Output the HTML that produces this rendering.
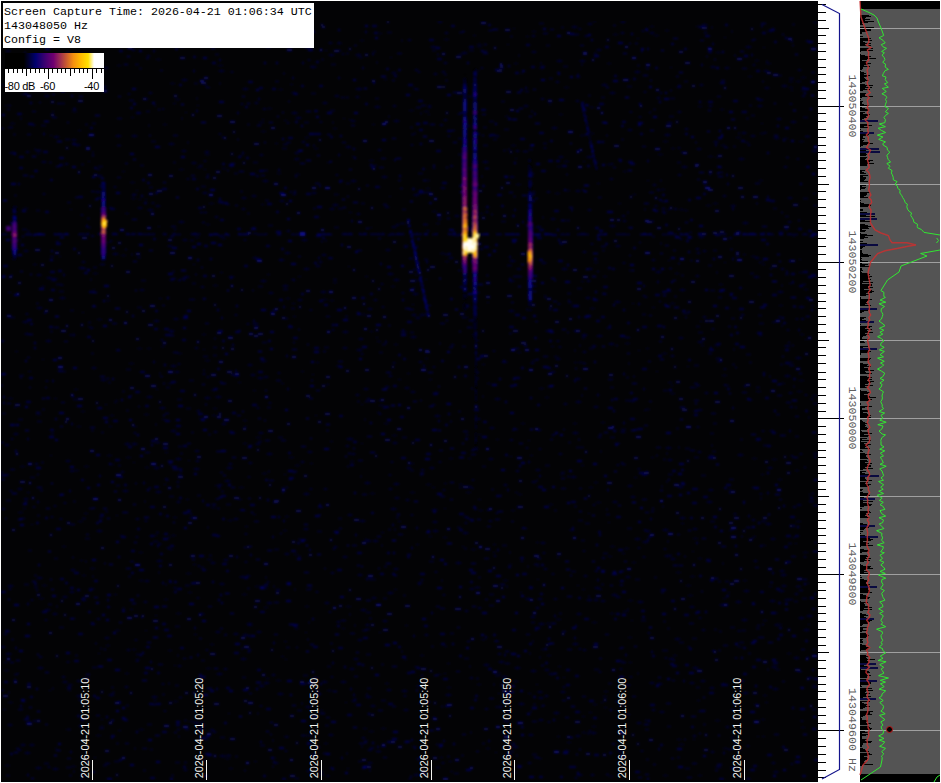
<!DOCTYPE html>
<html><head><meta charset="utf-8"><style>
html,body{margin:0;padding:0;background:#fff;width:941px;height:783px;overflow:hidden}
svg{position:absolute;left:0;top:0;display:block}
.tl{font-family:"Liberation Sans",sans-serif;font-size:10.85px;fill:#f4f4f0}
.fl{font-family:"Liberation Mono",monospace;font-size:11.67px;fill:#606060}
.hd{font-family:"Liberation Mono",monospace;font-size:11.67px;fill:#000}
.cb{font-family:"Liberation Sans",sans-serif;font-size:11px;fill:#000;letter-spacing:-0.3px}
</style></head><body>
<svg width="941" height="783" viewBox="0 0 941 783" shape-rendering="crispEdges">
<defs><linearGradient id="cb" x1="0" x2="1" y1="0" y2="0"><stop offset="0" stop-color="#000000"/><stop offset="0.19" stop-color="#000000"/><stop offset="0.31" stop-color="#00006e"/><stop offset="0.4" stop-color="#3a0070"/><stop offset="0.49" stop-color="#700070"/><stop offset="0.56" stop-color="#a03050"/><stop offset="0.62" stop-color="#c85a30"/><stop offset="0.69" stop-color="#f49010"/><stop offset="0.76" stop-color="#ffb800"/><stop offset="0.84" stop-color="#ffe000"/><stop offset="0.9" stop-color="#ffffff"/><stop offset="1" stop-color="#ffffff"/></linearGradient>
<filter id="bl" x="0" y="0" width="1" height="1"><feGaussianBlur stdDeviation="0.85"/></filter></defs>
<rect x="0" y="0" width="941" height="783" fill="#fff"/>
<rect x="1" y="1" width="817" height="781" fill="#030305"/>
<g filter="url(#bl)"><path fill="#040431" d="M438 21h4v2h-4zm155 0h3v1h-3zm28 0h4v2h-4zm192 1h4v1h-4zm-225 1h4v2h-4zm114 1h5v2h-5zm-471 1h5v1h-5zm49 0h4v2h-4zm-256 1h2v1h-2zm548 0h5v2h-5zm78 0h4v1h-4zm46 0h4v1h-4zm-538 2h5v2h-5zm93 0h5v1h-5zm262 0h2v1h-2zm66 0h2v2h-2zm66 0h3v1h-3zm-153 1h3v1h-3zm-196 1h4v2h-4zm192 0h5v1h-5zm154 0h2v2h-2zm23 0h4v1h-4zm103 0h5v2h-5zm-546 1h2v1h-2zm310 0h4v1h-4zm-490 1h5v2h-5zm84 0h4v1h-4zm19 0h5v1h-5zm167 0h4v1h-4zm133 0h3v2h-3zm176 0h3v2h-3zm29 0h4v2h-4zm-271 1h3v1h-3zm234 1h5v1h-5zm-140 1h3v1h-3zm59 0h3v2h-3zm53 0h3v2h-3zm69 0h5v1h-5zm-128 1h3v1h-3zm-449 1h2v2h-2zm647 0h2v1h-2zm-87 1h2v1h-2zm-229 1h3v2h-3zm36 0h5v1h-5zm-84 1h4v1h-4zm446 0h3v2h-3zm-477 2h3v2h-3zm8 1h5v1h-5zm-233 1h2v2h-2zm373 0h5v1h-5zm30 0h2v1h-2zm-76 2h5v2h-5zm46 0h5v1h-5zm269 0h5v2h-5zm-566 1h4v1h-4zm583 0h2v1h-2zm-631 2h3v2h-3zm465 0h4v2h-4zm-591 1h4v2h-4zm319 0h2v1h-2zm48 1h3v1h-3zm159 0h4v2h-4zm-70 1h5v2h-5zm254 0h5v1h-5zm-374 1h2v2h-2zm5 0h2v1h-2zm-325 1h2v2h-2zm307 0h5v2h-5zm27 0h5v2h-5zm102 0h5v1h-5zm-311 1h3v2h-3zm211 2h5v1h-5zm32 0h2v1h-2zm-234 2h5v1h-5zm152 0h2v2h-2zm249 1h5v2h-5zm23 0h5v2h-5zm175 0h4v1h-4zm-311 2h3v2h-3zm70 1h4v1h-4zm93 0h4v1h-4zm159 0h5v1h-5zm-13 1h2v2h-2zm-636 1h4v1h-4zm101 0h5v1h-5zm93 1h5v2h-5zm400 0h4v2h-4zm-607 1h4v2h-4zm377 0h2v2h-2zm59 0h4v2h-4zm130 0h2v1h-2zm55 0h4v2h-4zm-714 1h5v2h-5zm22 1h3v1h-3zm382 0h3v2h-3zm383 0h3v2h-3zm-579 1h5v2h-5zm257 0h3v1h-3zm288 0h4v2h-4zm-533 1h2v2h-2zm187 0h2v2h-2zm24 0h3v2h-3zm193 0h5v2h-5zm-243 1h4v2h-4zm42 1h3v2h-3zm87 0h2v1h-2zm-444 3h3v2h-3zm499 0h4v2h-4zm172 0h4v1h-4zm53 1h5v1h-5zm-619 2h5v2h-5zm202 0h3v1h-3zm172 2h3v2h-3zm233 0h4v1h-4zm7 0h5v1h-5zm-626 2h5v1h-5zm-169 1h3v1h-3zm289 0h3v1h-3zm312 0h5v2h-5zm98 0h3v2h-3zm82 1h5v2h-5zm-105 1h4v2h-4zm-113 1h5v1h-5zm201 0h4v2h-4zm24 0h4v1h-4zm-546 1h5v2h-5zm113 0h2v2h-2zm2 0h4v2h-4zm55 0h4v1h-4zm392 0h3v2h-3zm-526 1h4v1h-4zm512 1h2v1h-2zm10 0h3v1h-3zm-757 1h2v1h-2zm600 0h2v2h-2zm-495 1h3v2h-3zm143 0h4v2h-4zm318 0h5v2h-5zm50 0h2v2h-2zm5 0h2v2h-2zm-537 1h2v2h-2zm-107 1h5v1h-5zm24 1h4v2h-4zm2 0h2v1h-2zm288 0h4v2h-4zm467 0h3v2h-3zm-446 1h3v2h-3zm301 1h3v2h-3zm-511 1h2v2h-2zm395 0h3v2h-3zm130 0h4v1h-4zm-496 1h5v1h-5zm583 0h5v2h-5zm-182 1h3v2h-3zm-321 2h3v2h-3zm68 0h4v2h-4zm-150 1h3v1h-3zm68 0h2v2h-2zm549 0h2v2h-2zm-241 1h2v1h-2zm36 0h3v1h-3zm-580 1h2v1h-2zm192 0h2v1h-2zm196 0h3v2h-3zm35 0h3v2h-3zm96 0h4v2h-4zm185 0h3v2h-3zm49 0h4v2h-4zm-383 1h5v2h-5zm53 0h3v2h-3zm270 0h4v1h-4zm-108 1h4v1h-4zm-428 1h2v2h-2zm101 0h3v2h-3zm4 0h5v1h-5zm453 1h4v1h-4zm-311 1h4v1h-4zm3 0h2v1h-2zm-360 1h2v1h-2zm20 0h5v1h-5zm352 0h5v1h-5zm206 0h2v2h-2zm48 0h3v2h-3zm-493 1h2v1h-2zm107 0h5v2h-5zm449 0h5v1h-5zm-283 1h2v2h-2zm-30 1h2v1h-2zm45 0h2v2h-2zm86 0h4v1h-4zm-54 2h4v1h-4zm134 0h2v2h-2zm-508 1h3v1h-3zm165 0h5v2h-5zm47 1h2v1h-2zm434 0h4v2h-4zm-515 1h2v1h-2zm87 0h2v1h-2zm95 0h3v2h-3zm-160 1h3v1h-3zm67 0h4v2h-4zm43 0h5v2h-5zm-74 1h2v2h-2zm471 0h5v2h-5zm-532 1h5v1h-5zm28 0h2v2h-2zm380 0h5v2h-5zm-657 1h5v1h-5zm594 0h4v1h-4zm157 0h2v1h-2zm-729 1h3v2h-3zm131 0h4v1h-4zm209 0h3v1h-3zm68 0h3v2h-3zm28 1h2v2h-2zm84 2h5v2h-5zm-219 1h4v1h-4zm352 0h3v2h-3zm-57 1h4v2h-4zm-550 1h3v1h-3zm183 1h5v1h-5zm481 1h4v2h-4zm22 0h3v1h-3zm-545 1h2v2h-2zm257 0h4v2h-4zm115 0h3v1h-3zm169 0h5v1h-5zm-95 1h5v2h-5zm-615 1h2v1h-2zm66 0h5v2h-5zm16 0h5v2h-5zm316 0h2v2h-2zm47 0h4v2h-4zm85 0h4v1h-4zm171 0h4v2h-4zm-697 1h5v2h-5zm251 1h4v1h-4zm431 0h5v1h-5zm38 0h5v2h-5zm9 1h5v1h-5zm-711 1h4v2h-4zm230 2h3v2h-3zm361 0h5v1h-5zm51 0h4v2h-4zm85 0h5v1h-5zm-54 1h4v1h-4zm-576 1h5v2h-5zm106 0h3v1h-3zm-200 1h5v2h-5zm336 0h2v2h-2zm121 0h2v2h-2zm216 0h2v2h-2zm-237 1h5v1h-5zm210 0h5v1h-5zm-375 1h5v2h-5zm198 1h2v2h-2zm134 0h2v2h-2zm-364 1h4v1h-4zm357 0h4v1h-4zm26 0h4v2h-4zm-319 1h3v2h-3zm-196 1h4v2h-4zm117 0h3v2h-3zm217 0h3v2h-3zm61 0h4v1h-4zm235 0h5v2h-5zm-786 1h3v2h-3zm179 0h4v2h-4zm-195 1h4v2h-4zm2 0h4v1h-4zm283 0h4v2h-4zm-258 1h3v1h-3zm168 1h5v1h-5zm55 0h3v2h-3zm398 0h5v1h-5zm-418 1h3v1h-3zm112 1h2v1h-2zm207 0h4v2h-4zm28 0h5v2h-5zm121 0h5v1h-5zm8 1h2v1h-2zm-421 1h4v2h-4zm220 0h2v1h-2zm224 0h5v2h-5zm58 0h2v2h-2zm-503 1h3v1h-3zm-90 1h2v2h-2zm165 0h5v1h-5zm-327 1h4v2h-4zm46 0h2v1h-2zm395 0h5v2h-5zm81 0h5v1h-5zm19 0h2v1h-2zm-391 1h4v2h-4zm135 0h4v1h-4zm-262 1h3v2h-3zm546 0h2v2h-2zm-4 1h4v1h-4zm-235 1h2v2h-2zm78 0h3v2h-3zm-221 1h5v1h-5zm328 0h4v1h-4zm125 0h5v2h-5zm102 0h3v2h-3zm-587 1h5v1h-5zm236 0h2v2h-2zm-211 1h4v1h-4zm-43 1h5v1h-5zm25 0h2v1h-2zm-82 2h3v1h-3zm501 0h4v1h-4zm-545 1h2v2h-2zm199 1h4v1h-4zm-70 1h2v2h-2zm88 0h5v1h-5zm41 0h2v2h-2zm342 0h3v2h-3zm-581 1h5v2h-5zm159 0h3v2h-3zm126 1h5v2h-5zm128 0h4v2h-4zm-323 2h2v2h-2zm423 0h3v2h-3zm-347 2h5v2h-5zm88 0h5v2h-5zm75 0h4v1h-4zm221 0h2v1h-2zm112 0h4v1h-4zm-629 2h5v1h-5zm401 1h2v1h-2zm66 0h3v1h-3zm-137 1h5v2h-5zm16 0h2v1h-2zm40 0h5v1h-5zm137 0h3v2h-3zm-178 1h4v1h-4zm-361 1h2v2h-2zm327 1h4v2h-4zm-15 1h4v1h-4zm156 1h2v2h-2zm75 0h3v2h-3zm4 0h4v1h-4zm-525 1h2v1h-2zm430 0h4v1h-4zm10 0h4v2h-4zm-480 1h4v2h-4zm194 0h2v2h-2zm243 0h2v2h-2zm14 0h3v2h-3zm-344 1h4v2h-4zm109 0h4v2h-4zm106 0h5v2h-5zm-375 1h2v2h-2zm250 0h3v2h-3zm262 0h5v1h-5zm258 0h3v1h-3zm-681 1h3v2h-3zm203 0h4v1h-4zm79 0h5v2h-5zm15 0h4v2h-4zm204 0h3v1h-3zm-381 1h4v2h-4zm471 0h3v2h-3zm-334 1h2v1h-2zm-292 1h5v2h-5zm145 0h4v2h-4zm358 0h2v1h-2zm188 0h4v2h-4zm-657 1h5v1h-5zm8 1h2v1h-2zm6 0h2v1h-2zm135 1h4v2h-4zm-128 2h2v2h-2zm69 0h5v2h-5zm-12 1h5v1h-5zm409 0h3v1h-3zm95 0h5v1h-5zm-452 1h3v1h-3zm72 0h5v2h-5zm-177 1h4v2h-4zm499 0h2v2h-2zm51 0h5v1h-5zm25 0h4v2h-4zm1 0h4v1h-4zm-347 1h4v2h-4zm-247 1h4v2h-4zm-115 1h5v1h-5zm219 0h3v2h-3zm88 0h4v2h-4zm344 0h3v2h-3zm-604 1h2v1h-2zm78 0h5v2h-5zm440 0h3v2h-3zm79 0h3v1h-3zm12 0h5v1h-5zm5 1h4v1h-4zm-252 1h5v1h-5zm54 0h2v2h-2zm-137 1h3v1h-3zm314 0h3v2h-3zm-538 1h4v1h-4zm232 0h3v2h-3zm123 0h3v1h-3zm-399 1h2v2h-2zm23 0h3v2h-3zm351 1h4v2h-4zm167 0h3v2h-3zm-407 1h3v2h-3zm223 2h3v2h-3zm113 0h4v2h-4zm72 2h3v2h-3zm-444 1h5v2h-5zm283 0h4v2h-4zm326 0h3v2h-3zm-45 1h5v2h-5zm-307 1h4v1h-4zm-230 1h4v1h-4zm190 0h3v2h-3zm120 0h3v1h-3zm94 1h5v2h-5zm-452 1h2v1h-2zm234 0h4v2h-4zm70 0h5v1h-5zm74 0h5v2h-5zm-166 1h2v1h-2zm102 1h4v1h-4zm-4 1h3v2h-3zm-181 1h3v2h-3zm140 0h2v2h-2zm352 1h4v2h-4zm-16 1h2v1h-2zm-554 2h3v2h-3zm179 0h2v2h-2zm65 0h5v2h-5zm2 0h5v2h-5zm-423 1h3v1h-3zm59 0h3v2h-3zm128 0h5v2h-5zm1 0h5v1h-5zm455 1h4v2h-4zm14 0h3v2h-3zm10 0h5v2h-5zm94 0h2v1h-2zm-598 1h4v1h-4zm492 0h5v2h-5zm42 0h3v2h-3zm-508 1h5v1h-5zm459 0h2v2h-2zm-497 1h4v2h-4zm61 0h2v2h-2zm58 0h5v2h-5zm-286 1h5v1h-5zm94 0h2v2h-2zm-54 1h3v2h-3zm51 1h3v1h-3zm453 1h3v2h-3zm31 0h2v2h-2zm-118 1h3v1h-3zm-305 1h4v2h-4zm236 0h4v2h-4zm212 0h4v2h-4zm-212 2h3v1h-3zm76 1h3v2h-3zm216 0h3v2h-3zm-310 1h4v2h-4zm86 0h5v2h-5zm-448 1h4v2h-4zm679 0h3v2h-3zm-120 1h3v2h-3zm-298 1h5v2h-5zm412 0h3v2h-3zm-584 1h5v2h-5zm327 0h5v1h-5zm-118 1h4v2h-4zm421 0h3v1h-3zm-622 1h5v1h-5zm-62 1h2v1h-2zm692 0h5v1h-5zm-498 1h5v2h-5zm75 0h4v2h-4zm121 0h4v2h-4zm306 0h4v2h-4zm-499 1h5v1h-5zm23 1h5v2h-5zm373 0h3v2h-3zm147 0h2v1h-2zm-289 1h5v2h-5zm158 0h2v1h-2zm-586 1h3v2h-3zm237 0h3v2h-3zm126 0h4v1h-4zm317 0h2v1h-2zm-220 1h4v2h-4zm52 0h4v1h-4zm29 0h2v2h-2zm101 0h2v1h-2zm-691 2h4v1h-4zm160 0h2v1h-2zm569 0h3v1h-3zm-446 1h4v2h-4zm32 1h2v1h-2zm-269 1h5v2h-5zm225 1h5v2h-5zm213 0h4v2h-4zm45 0h5v2h-5zm25 0h5v2h-5zm194 0h3v2h-3zm-364 3h3v1h-3zm239 0h5v2h-5zm-436 1h3v1h-3zm579 0h4v1h-4zm-706 1h5v1h-5zm295 0h5v2h-5zm287 0h4v1h-4zm-638 1h4v2h-4zm230 0h3v1h-3zm-265 1h4v2h-4zm694 0h3v2h-3zm-512 1h5v2h-5zm45 0h5v2h-5zm69 0h3v1h-3zm67 0h3v1h-3zm238 0h4v1h-4zm151 0h5v2h-5zm-707 1h5v2h-5zm5 1h5v2h-5zm118 1h4v2h-4zm9 0h2v1h-2zm4 0h2v2h-2zm108 0h3v1h-3zm103 0h5v2h-5zm31 0h2v1h-2zm-164 1h5v2h-5zm248 0h5v2h-5zm78 0h3v2h-3zm-6 1h3v1h-3zm-248 1h4v1h-4zm48 1h2v2h-2zm408 0h4v1h-4zm1 0h2v1h-2zm-729 1h2v2h-2zm658 0h4v1h-4zm-506 1h5v1h-5zm70 0h5v2h-5zm248 0h5v2h-5zm-490 1h4v1h-4zm160 0h3v2h-3zm190 0h4v1h-4zm22 1h2v1h-2zm-320 2h2v1h-2zm47 0h4v2h-4zm540 0h5v2h-5zm124 0h4v1h-4zm-138 1h5v2h-5zm-345 1h5v2h-5zm457 0h5v2h-5zm-770 1h3v1h-3zm261 0h4v2h-4zm133 0h2v2h-2zm11 1h5v2h-5zm0 0h4v1h-4zm190 1h4v1h-4zm155 0h3v1h-3zm-214 1h2v1h-2zm99 0h2v2h-2zm2 1h2v2h-2zm-585 1h5v2h-5zm526 0h4v2h-4zm-427 1h3v1h-3zm127 0h4v1h-4zm12 1h4v2h-4zm24 0h5v1h-5zm52 0h3v2h-3zm-268 1h4v1h-4zm224 0h4v1h-4zm200 0h2v2h-2zm85 1h5v2h-5zm-128 1h2v1h-2zm-195 1h3v1h-3zm266 0h2v2h-2zm74 0h2v1h-2zm38 0h5v1h-5zm-258 1h2v1h-2zm160 1h4v2h-4zm207 0h4v1h-4zm32 0h3v1h-3zm-429 1h2v2h-2zm417 0h5v2h-5zm-762 1h5v2h-5zm615 0h3v1h-3zm-284 1h4v2h-4zm222 0h5v1h-5zm-280 1h2v2h-2zm199 1h5v2h-5zm-238 1h2v2h-2zm-227 1h2v2h-2zm38 0h2v1h-2zm-56 1h2v2h-2zm209 1h2v2h-2zm127 0h4v1h-4zm50 0h4v2h-4zm8 0h4v2h-4zm4 0h4v1h-4zm317 0h3v2h-3zm-448 2h3v1h-3zm410 0h3v2h-3zm76 0h2v2h-2zm-363 1h4v2h-4zm47 0h5v1h-5zm-289 1h4v2h-4zm622 0h2v2h-2zm5 0h3v2h-3zm-704 1h5v1h-5zm57 1h5v2h-5zm-131 1h5v2h-5zm677 0h2v1h-2zm74 0h2v1h-2zm-2 1h3v1h-3zm-525 1h2v2h-2zm6 0h5v2h-5zm-165 3h2v1h-2zm168 0h3v1h-3zm-166 1h3v2h-3zm517 0h4v2h-4zm105 1h2v2h-2zm-547 1h4v1h-4zm167 0h2v2h-2zm70 0h2v2h-2zm147 0h2v2h-2zm238 0h2v2h-2zm-618 1h5v2h-5zm377 0h4v2h-4zm28 0h2v2h-2zm-404 1h3v2h-3zm173 0h5v2h-5zm27 0h3v1h-3zm31 0h5v2h-5zm-181 1h2v2h-2zm-195 1h4v2h-4zm45 1h2v2h-2zm132 0h4v1h-4zm270 0h3v1h-3zm110 0h5v2h-5zm177 0h3v2h-3zm41 0h4v1h-4zm-203 1h5v2h-5zm-369 1h4v1h-4zm183 0h5v2h-5zm171 0h4v1h-4zm-206 1h2v1h-2zm303 0h4v2h-4zm-320 1h4v2h-4zm223 0h3v1h-3zm-421 1h2v2h-2zm644 0h2v1h-2zm-759 1h5v2h-5zm431 0h2v1h-2zm80 0h2v2h-2zm-180 1h4v1h-4zm321 0h5v2h-5zm-89 2h5v2h-5zm16 0h5v1h-5zm-231 1h4v1h-4zm57 0h3v2h-3zm264 0h5v2h-5zm-123 1h4v2h-4zm109 0h3v1h-3zm84 0h5v2h-5zm-624 1h4v1h-4zm390 0h3v1h-3zm8 0h2v2h-2zm-364 1h3v2h-3zm148 0h4v2h-4zm-206 1h5v1h-5zm10 0h4v1h-4zm499 0h3v1h-3zm-529 1h3v2h-3zm86 0h2v1h-2zm154 0h5v2h-5zm136 1h2v2h-2zm145 0h2v1h-2zm-623 1h3v1h-3zm568 0h3v2h-3zm-66 1h4v1h-4zm-340 1h5v1h-5zm184 0h2v2h-2zm301 0h5v1h-5zm9 2h3v2h-3zm-117 1h4v1h-4zm242 1h5v2h-5zm-371 1h3v1h-3zm131 0h4v2h-4zm-514 1h2v1h-2zm163 1h5v1h-5zm56 0h5v2h-5zm271 0h5v1h-5zm-113 1h3v2h-3zm83 0h5v2h-5zm-186 1h3v1h-3zm77 0h2v2h-2zm138 0h3v2h-3zm43 0h3v1h-3zm4 0h5v1h-5zm211 0h4v1h-4zm-660 1h5v1h-5zm49 0h2v2h-2zm70 1h4v2h-4zm234 0h3v1h-3zm-311 1h5v2h-5zm166 0h4v2h-4zm96 1h2v2h-2zm254 0h2v1h-2zm-595 1h4v2h-4zm632 1h2v2h-2zm-301 1h3v2h-3zm-395 2h3v1h-3zm147 0h4v2h-4zm126 0h3v1h-3zm250 0h4v2h-4zm105 0h2v1h-2zm-378 1h2v2h-2zm485 0h2v2h-2zm-560 1h2v2h-2zm204 0h3v1h-3zm-156 1h4v2h-4zm61 0h2v1h-2zm-78 1h5v2h-5zm155 0h3v2h-3zm333 0h5v1h-5zm63 0h5v2h-5zm-578 1h2v2h-2zm57 0h4v2h-4zm-6 1h5v2h-5zm317 1h5v2h-5zm-474 1h5v2h-5zm297 0h3v1h-3zm31 0h3v1h-3zm-383 1h2v2h-2zm753 0h5v1h-5zm-579 1h2v2h-2zm18 1h3v1h-3zm430 0h4v1h-4zm-500 1h5v1h-5zm113 0h3v1h-3zm206 0h4v1h-4zm293 0h5v1h-5zm-454 1h3v1h-3zm398 0h2v2h-2zm-53 1h2v1h-2zm-286 1h4v2h-4zm20 1h4v2h-4zm287 0h5v1h-5zm-328 1h4v2h-4zm175 0h5v1h-5zm-465 1h4v1h-4zm82 0h2v1h-2zm56 0h4v2h-4zm41 1h3v1h-3zm158 1h4v2h-4zm345 0h5v1h-5zm41 0h5v1h-5zm-363 1h5v1h-5zm271 0h3v2h-3zm84 0h3v2h-3zm-119 1h5v1h-5zm-314 1h3v2h-3zm449 0h2v2h-2zm-675 1h2v1h-2zm682 0h5v1h-5zm-665 1h5v2h-5zm69 0h5v2h-5zm-11 1h5v2h-5zm340 0h4v1h-4zm-537 1h5v1h-5zm46 0h3v1h-3zm313 0h3v2h-3zm128 0h5v2h-5zm316 0h2v2h-2zm-62 1h3v2h-3zm-634 1h3v1h-3zm263 0h4v1h-4zm252 0h5v2h-5zm-54 1h5v2h-5zm-462 1h3v1h-3zm155 0h2v2h-2zm295 1h3v2h-3zm-459 1h2v1h-2zm256 0h2v1h-2zm71 0h3v2h-3zm-53 1h5v1h-5zm215 1h4v2h-4zm196 0h3v2h-3zm-776 1h2v1h-2zm146 0h5v2h-5zm97 0h2v2h-2zm126 0h2v2h-2zm-170 1h4v1h-4zm432 1h5v1h-5zm53 0h4v2h-4zm-501 1h3v2h-3zm447 0h2v1h-2zm-563 1h4v1h-4zm296 1h3v1h-3zm2 1h2v2h-2zm-343 1h5v1h-5zm108 0h5v1h-5zm-34 1h4v1h-4zm102 0h4v1h-4zm103 0h2v1h-2zm120 0h5v2h-5zm-236 3h5v1h-5zm279 0h2v2h-2zm-316 1h4v1h-4zm81 1h4v1h-4zm358 2h4v1h-4zm-379 1h4v2h-4zm162 0h5v1h-5zm137 0h4v1h-4zm52 0h4v1h-4zm-496 3h4v1h-4zm32 0h3v1h-3zm24 0h4v1h-4zm111 0h3v1h-3zm453 0h2v2h-2zm-207 1h4v2h-4zm47 2h4v2h-4zm97 0h3v2h-3zm-463 1h5v2h-5zm341 0h2v1h-2zm250 0h2v2h-2zm8 0h4v2h-4zm-556 1h3v2h-3zm407 0h4v2h-4zm-487 1h2v2h-2zm125 0h4v2h-4zm314 0h5v2h-5zm93 0h5v1h-5zm-652 1h4v2h-4zm452 1h2v2h-2zm13 0h2v1h-2zm73 0h3v2h-3zm-160 1h5v1h-5zm392 0h2v1h-2zm-186 1h3v2h-3zm-342 1h5v1h-5zm-245 1h2v2h-2zm336 0h5v2h-5zm3 0h3v2h-3zm146 1h3v1h-3zm14 0h3v2h-3zm246 0h4v2h-4zm-228 1h2v1h-2zm-198 1h3v1h-3zm63 1h4v2h-4zm-268 1h5v2h-5zm7 0h5v2h-5zm111 0h4v1h-4zm13 0h4v2h-4zm105 0h2v1h-2zm-356 1h4v2h-4zm341 1h3v2h-3zm-97 1h2v2h-2zm277 1h2v2h-2zm140 0h5v2h-5zm-193 1h5v2h-5zm66 0h2v2h-2zm-344 2h4v2h-4zm113 1h4v2h-4zm390 0h3v2h-3zm-533 1h3v1h-3zm102 1h5v2h-5zm85 0h3v2h-3zm207 0h3v2h-3zm241 0h2v2h-2zm-62 1h5v2h-5zm-688 1h2v1h-2zm57 0h5v1h-5zm423 0h3v1h-3zm179 0h5v2h-5zm82 0h2v2h-2zm-281 1h2v1h-2zm-384 1h5v1h-5zm163 0h5v1h-5zm362 0h3v1h-3zm-475 1h5v2h-5zm273 0h4v1h-4zm19 0h3v1h-3zm21 0h4v2h-4zm263 0h5v1h-5zm-84 1h4v2h-4zm104 0h5v1h-5zm-706 1h4v2h-4zm122 0h2v1h-2zm8 0h3v2h-3zm105 1h3v2h-3zm49 0h4v1h-4zm41 0h2v2h-2zm48 0h2v2h-2zm-306 1h2v1h-2zm116 0h3v2h-3zm372 0h2v2h-2zm-586 1h3v2h-3zm134 0h3v2h-3zm60 0h3v2h-3zm81 0h3v1h-3zm100 0h4v1h-4zm-299 1h3v1h-3zm506 0h2v2h-2zm-322 1h5v1h-5zm286 0h3v1h-3zm-561 1h5v1h-5zm64 0h5v1h-5zm61 1h4v1h-4zm9 0h5v2h-5zm73 0h5v2h-5zm180 0h4v2h-4zm23 0h4v2h-4zm338 0h4v2h-4zm-590 1h4v2h-4zm16 0h5v2h-5zm444 0h2v2h-2zm-217 1h3v2h-3zm115 0h4v2h-4zm-466 1h4v2h-4zm4 0h5v1h-5zm442 0h3v2h-3zm279 0h4v1h-4zm-674 1h3v2h-3zm141 2h5v1h-5zm31 0h2v1h-2zm-289 1h5v2h-5zm280 0h2v1h-2zm105 0h2v2h-2zm171 0h4v1h-4zm82 0h5v2h-5zm119 0h3v1h-3zm-341 1h3v1h-3zm-172 1h2v2h-2zm323 0h5v2h-5zm1 0h4v2h-4zm62 1h3v1h-3zm-469 1h3v2h-3zm307 1h2v2h-2zm306 0h4v1h-4zm-612 1h3v1h-3zm59 0h5v2h-5zm-48 1h2v2h-2zm355 0h4v2h-4zm-167 1h5v2h-5zm229 0h4v1h-4zm-200 1h5v2h-5zm50 0h3v1h-3zm-280 1h2v1h-2zm55 0h3v2h-3zm207 0h5v1h-5zm33 0h4v1h-4zm45 0h3v2h-3zm-289 1h3v1h-3zm413 0h4v2h-4zm-161 1h5v2h-5zm211 0h5v2h-5zm-529 1h2v2h-2zm90 0h5v1h-5zm43 0h3v1h-3zm150 0h3v1h-3zm157 0h4v1h-4zm-571 1h4v2h-4zm200 0h3v1h-3zm92 0h2v2h-2zm14 0h3v2h-3zm65 0h3v2h-3zm54 1h2v2h-2zm266 0h4v2h-4zm19 0h3v1h-3zm-718 1h2v2h-2zm113 0h5v2h-5zm33 1h5v2h-5zm-129 1h3v1h-3zm383 0h5v1h-5zm56 0h5v1h-5zm49 0h3v1h-3zm-211 1h5v2h-5zm66 0h5v1h-5zm390 0h2v2h-2zm-242 1h4v1h-4zm291 0h2v1h-2zm-751 1h5v1h-5zm573 1h4v2h-4zm-236 1h4v2h-4zm-371 1h4v2h-4zm192 0h3v2h-3zm-30 1h3v1h-3zm52 0h4v1h-4zm168 0h3v2h-3zm72 0h3v1h-3zm-453 2h2v2h-2zm152 0h3v2h-3zm436 0h4v2h-4zm94 0h5v2h-5zm103 0h2v1h-2zm-746 1h2v2h-2zm532 0h5v1h-5zm-270 2h2v2h-2zm223 0h4v1h-4zm44 0h2v2h-2zm204 0h4v2h-4zm-743 1h2v2h-2zm-21 1h2v2h-2zm286 0h4v2h-4zm474 0h3v2h-3zm-700 1h2v2h-2zm118 0h5v1h-5zm429 0h3v2h-3zm-638 1h3v2h-3zm21 0h3v1h-3zm368 0h5v2h-5zm53 0h2v1h-2zm30 0h3v2h-3zm-234 1h5v2h-5zm192 0h5v2h-5zm55 0h2v2h-2zm-8 1h4v1h-4zm32 0h4v1h-4zm-324 1h3v2h-3zm-169 1h5v1h-5zm104 0h4v1h-4zm374 0h2v2h-2zm-412 1h4v1h-4zm106 0h2v2h-2zm398 0h2v1h-2zm146 0h2v2h-2zm-481 1h3v1h-3zm66 0h2v1h-2zm29 0h4v2h-4zm63 0h2v2h-2zm-295 1h2v1h-2zm-65 1h2v2h-2zm234 0h4v1h-4zm179 0h4v2h-4zm-291 1h4v1h-4zm17 0h3v2h-3zm490 0h5v2h-5zm-620 1h2v2h-2zm76 0h3v2h-3zm98 0h4v2h-4zm518 1h3v2h-3zm-607 1h2v2h-2zm83 0h5v1h-5zm132 0h5v2h-5zm129 0h3v2h-3zm-411 1h5v1h-5zm320 0h3v1h-3zm35 0h4v2h-4zm38 0h2v1h-2zm325 0h5v1h-5zm-331 1h2v2h-2zm143 0h2v1h-2zm73 1h3v1h-3zm85 0h5v2h-5zm-735 1h2v1h-2zm214 2h3v1h-3zm277 1h3v1h-3zm-218 1h4v2h-4zm389 0h4v2h-4zm-123 1h4v2h-4zm74 0h2v2h-2zm19 0h5v2h-5zm-566 1h5v2h-5zm186 0h4v1h-4zm150 0h5v2h-5zm212 0h5v2h-5zm84 0h4v1h-4zm-348 2h3v1h-3zm82 0h5v2h-5zm-218 1h2v2h-2zm-125 2h3v1h-3zm32 0h5v1h-5zm19 0h5v1h-5zm-35 1h2v2h-2zm293 0h3v1h-3zm219 0h3v2h-3zm105 0h3v1h-3zm-310 1h4v1h-4zm192 1h5v2h-5zm58 0h5v1h-5zm78 0h4v2h-4zm-407 1h4v1h-4zm2 1h5v2h-5zm7 0h5v2h-5zm270 1h5v2h-5zm-107 1h3v1h-3zm5 0h4v2h-4zm-383 1h3v2h-3zm637 0h2v1h-2zm-379 1h3v1h-3zm77 0h3v1h-3zm269 1h4v1h-4zm-700 1h4v1h-4zm272 0h3v2h-3zm128 0h2v1h-2zm148 0h5v1h-5zm-443 1h3v2h-3zm471 0h2v2h-2zm-305 1h2v2h-2zm291 0h5v1h-5zm40 0h2v2h-2zm-495 1h4v1h-4zm302 0h5v1h-5zm112 1h2v2h-2zm109 1h2v1h-2zm-553 1h4v1h-4zm354 0h2v1h-2zm50 0h2v2h-2zm260 0h5v1h-5zm-518 1h4v2h-4zm337 0h3v1h-3zm-328 1h4v1h-4zm200 1h2v2h-2zm171 0h5v2h-5zm-322 1h4v2h-4zm265 0h4v1h-4zm35 0h2v2h-2zm161 0h2v2h-2zm-247 1h2v1h-2zm45 0h3v2h-3zm69 1h4v2h-4zm27 0h4v1h-4zm-491 1h5v1h-5zm17 0h4v2h-4zm-144 1h3v1h-3zm77 0h5v2h-5zm364 0h2v2h-2zm233 0h3v2h-3zm-509 1h2v2h-2zm-34 1h4v2h-4zm245 0h5v2h-5zm176 0h4v1h-4zm-439 2h3v1h-3zm316 0h3v1h-3zm-311 1h2v2h-2zm339 1h2v1h-2zm-447 2h5v1h-5zm304 0h4v2h-4zm150 0h3v2h-3zm-473 1h4v2h-4zm524 1h3v2h-3zm27 0h2v2h-2zm158 0h4v2h-4zm-345 1h2v2h-2zm-104 1h3v2h-3zm345 0h5v1h-5zm-490 1h5v1h-5zm337 0h4v1h-4zm29 0h2v2h-2zm-194 1h4v2h-4zm423 0h5v2h-5zm-699 1h4v1h-4zm164 0h4v2h-4zm338 0h3v2h-3zm-344 1h5v2h-5zm386 0h4v2h-4zm64 0h5v1h-5zm-653 1h5v2h-5zm332 1h2v2h-2zm428 0h5v2h-5zm-376 1h2v2h-2zm116 0h2v1h-2zm-398 1h5v1h-5zm6 0h4v2h-4zm358 0h5v1h-5zm208 0h2v2h-2zm32 0h4v1h-4zm-476 1h2v2h-2zm-75 1h4v1h-4zm226 0h4v2h-4zm-198 1h4v2h-4zm587 0h2v1h-2zm-187 1h3v2h-3zm-612 1h5v2h-5zm34 0h5v1h-5zm535 0h2v1h-2zm109 0h5v1h-5zm96 0h4v2h-4zm-527 1h4v1h-4zm274 0h3v1h-3zm240 0h3v1h-3zm-595 1h2v2h-2zm88 0h5v2h-5zm333 0h5v2h-5zm-586 1h2v2h-2zm80 0h5v2h-5zm221 0h2v1h-2zm160 0h4v2h-4zm-194 1h4v2h-4zm118 0h3v1h-3zm188 0h3v1h-3zm17 0h3v1h-3zm145 1h5v2h-5zm35 0h5v2h-5zm-709 1h4v2h-4zm246 0h2v2h-2zm-128 1h4v1h-4zm200 0h5v2h-5zm132 0h2v1h-2zm208 0h2v1h-2zm67 1h3v2h-3zm-681 1h3v1h-3zm128 0h5v1h-5zm201 0h2v2h-2zm169 0h5v2h-5zm76 1h5v1h-5zm-625 1h4v2h-4zm553 0h4v2h-4zm-534 1h3v2h-3zm115 0h2v2h-2zm175 0h4v2h-4zm-333 1h5v1h-5zm487 0h5v2h-5zm12 0h4v2h-4zm16 0h3v2h-3zm169 0h3v1h-3zm-692 1h2v2h-2zm51 0h4v2h-4zm82 0h4v1h-4zm423 0h5v2h-5zm7 0h4v2h-4zm191 0h4v2h-4zm-184 1h4v2h-4zm27 0h5v1h-5zm142 0h5v2h-5zm-626 1h3v2h-3zm494 0h5v2h-5zm98 0h5v2h-5zm-469 1h5v2h-5zm58 0h4v2h-4zm427 0h2v2h-2zm-32 2h5v2h-5zm-415 2h4v1h-4zm41 0h5v1h-5zm344 0h4v2h-4zm-426 1h4v1h-4zm214 0h3v2h-3zm58 0h3v2h-3zm276 1h3v2h-3zm-767 1h5v2h-5zm85 0h3v1h-3zm231 0h5v2h-5zm104 1h3v2h-3zm-136 1h2v2h-2zm294 0h5v1h-5zm151 1h3v2h-3zm-721 1h4v2h-4zm123 0h5v1h-5zm23 0h5v2h-5zm378 0h4v2h-4zm33 0h4v1h-4zm-455 2h2v1h-2zm652 0h5v2h-5zm-276 1h4v2h-4zm168 1h2v2h-2zm100 0h5v2h-5zm-702 1h3v2h-3zm-52 1h2v2h-2zm26 0h2v1h-2zm485 0h5v1h-5zm186 0h5v2h-5zm-359 1h4v2h-4zm248 0h2v1h-2zm132 0h4v1h-4zm-426 1h3v2h-3zm-246 1h2v2h-2zm501 0h5v1h-5zm-345 1h5v2h-5zm292 0h5v2h-5zm7 0h4v1h-4zm-180 1h3v2h-3zm409 0h4v2h-4zm4 0h3v1h-3zm29 0h2v1h-2zm-560 1h4v1h-4zm157 0h3v1h-3zm-111 3h5v1h-5zm48 0h3v1h-3zm193 1h2v2h-2zm167 0h3v2h-3zm102 0h5v2h-5zm-689 1h5v1h-5zm30 0h2v1h-2zm593 0h2v2h-2zm-522 1h4v2h-4zm41 0h4v2h-4zm48 1h2v1h-2zm74 0h2v1h-2zm269 0h2v2h-2zm-644 1h3v2h-3zm230 0h4v2h-4zm-40 1h3v1h-3zm49 0h5v2h-5zm182 0h3v2h-3zm-201 1h2v1h-2zm24 0h5v2h-5zm-143 2h4v2h-4zm523 0h4v1h-4zm47 1h5v2h-5zm-540 1h2v2h-2zm223 0h4v2h-4zm123 0h5v1h-5zm14 1h3v2h-3zm-211 1h3v1h-3zm289 2h5v2h-5zm-363 1h4v1h-4zm-104 1h4v1h-4zm-105 1h4v2h-4zm443 0h3v1h-3zm244 0h2v2h-2zm49 0h5v1h-5zm-158 2h2v2h-2zm-452 1h3v2h-3zm5 0h4v1h-4zm74 0h2v2h-2zm42 0h3v2h-3zm293 0h4v1h-4zm42 0h3v2h-3zm-415 1h4v1h-4zm494 0h4v1h-4zm50 0h3v2h-3zm-464 1h2v2h-2zm257 0h5v1h-5zm-499 2h5v2h-5zm92 0h2v1h-2zm400 0h3v2h-3zm289 0h4v1h-4zm-367 2h4v1h-4zm127 0h4v1h-4zm126 0h4v1h-4zm-634 1h3v2h-3zm242 0h3v1h-3zm384 1h2v2h-2zm70 0h2v2h-2zm59 0h5v2h-5zm-609 1h2v1h-2zm56 0h5v2h-5zm113 0h4v2h-4zm315 0h5v2h-5zm-533 1h3v2h-3zm149 0h2v1h-2zm119 0h3v1h-3zm215 1h4v1h-4zm-552 1h2v2h-2zm69 0h2v1h-2zm363 0h5v2h-5zm-495 1h3v1h-3zm625 0h3v1h-3zm-182 1h3v1h-3zm37 1h5v2h-5zm-310 1h2v1h-2zm4 0h3v2h-3zm237 1h2v2h-2zm143 0h3v1h-3zm214 0h5v2h-5zm-734 1h5v2h-5zm57 0h2v1h-2zm420 0h5v2h-5zm178 0h5v2h-5zm-487 1h5v1h-5zm18 0h3v2h-3zm126 0h4v2h-4zm270 0h2v2h-2zm-75 1h4v2h-4zm230 0h5v1h-5zm-771 1h5v1h-5zm527 0h5v2h-5zm68 1h2v2h-2zm-582 2h2v1h-2zm108 0h4v1h-4zm92 0h5v2h-5zm227 0h2v1h-2zm105 0h5v2h-5zm-277 1h3v2h-3zm165 0h4v1h-4zm-375 2h3v2h-3zm269 0h2v2h-2zm171 0h5v2h-5zm128 0h2v2h-2zm-428 1h4v1h-4zm111 0h5v2h-5zm157 0h3v2h-3zm93 0h2v1h-2zm245 0h5v2h-5zm-542 1h3v1h-3zm-67 1h3v2h-3zm-122 1h3v2h-3zm199 0h5v1h-5zm425 0h4v2h-4zm-638 1h4v2h-4zm259 0h5v2h-5zm19 0h5v2h-5zm172 0h5v1h-5zm-249 1h5v2h-5zm386 0h4v2h-4zm40 0h4v2h-4zm-528 1h2v2h-2zm223 0h4v1h-4zm272 0h5v2h-5zm65 0h3v2h-3zm-654 1h4v2h-4zm409 0h4v1h-4zm59 0h2v1h-2zm89 0h5v2h-5zm188 0h2v1h-2zm-554 1h5v2h-5zm158 0h3v2h-3zm-292 1h3v2h-3zm438 0h2v2h-2zm249 0h5v2h-5zm-365 1h4v1h-4zm263 0h4v2h-4zm63 1h5v2h-5zm-386 1h4v2h-4zm-338 1h2v1h-2zm19 0h3v1h-3zm259 0h5v1h-5zm75 0h5v2h-5zm136 1h4v2h-4zm23 0h4v2h-4zm43 0h4v1h-4zm139 1h5v2h-5zm-465 1h5v2h-5zm220 0h2v1h-2zm30 0h3v1h-3zm-419 1h5v2h-5zm337 0h5v2h-5zm-369 1h5v2h-5zm327 0h2v2h-2zm141 0h3v2h-3zm218 0h4v1h-4zm-611 1h5v2h-5zm214 0h5v2h-5zm237 0h4v1h-4zm-64 1h4v2h-4zm-185 1h2v2h-2zm-275 1h2v2h-2zm-58 1h4v2h-4zm331 0h4v2h-4zm345 0h3v1h-3zm-524 1h5v1h-5zm140 0h5v1h-5zm-305 1h5v1h-5zm337 0h2v1h-2zm256 0h2v1h-2zm164 0h3v1h-3zm-347 1h3v1h-3zm101 0h5v2h-5zm74 1h4v1h-4zm161 0h5v1h-5zm-494 1h2v2h-2zm111 0h4v2h-4zm-65 1h5v2h-5zm190 0h2v2h-2zm45 0h2v1h-2zm63 1h3v1h-3zm-119 1h3v2h-3zm-482 1h3v1h-3zm401 0h4v2h-4zm248 0h3v2h-3zm-488 1h2v2h-2zm156 0h3v1h-3zm382 0h4v1h-4zm-196 1h3v2h-3zm154 0h4v2h-4zm38 0h5v1h-5zm-144 1h5v2h-5zm35 0h3v1h-3zm-361 1h2v1h-2zm354 3h3v1h-3zm150 1h4v1h-4zm-610 1h5v2h-5zm-21 1h2v1h-2zm438 0h4v2h-4zm222 0h4v1h-4zm-728 1h3v2h-3zm471 0h5v2h-5zm211 0h5v1h-5zm86 0h2v2h-2zm-772 1h2v2h-2zm52 0h2v1h-2zm108 0h5v1h-5zm359 0h2v2h-2zm-354 1h5v2h-5zm443 0h4v2h-4zm-629 2h4v2h-4zm92 2h4v1h-4zm492 0h4v1h-4zm134 0h3v2h-3zm75 1h4v1h-4zm-438 1h4v1h-4zm18 0h5v1h-5zm-315 1h2v1h-2zm73 0h5v1h-5zm71 0h4v2h-4zm-92 1h3v1h-3zm471 0h2v2h-2zm-376 1h3v2h-3zm156 0h5v1h-5zm213 1h4v1h-4zm9 0h5v2h-5zm-262 2h4v2h-4zm200 0h4v2h-4zm-433 1h5v1h-5zm480 0h4v2h-4zm117 0h3v2h-3zm-409 1h5v1h-5zm2 0h2v2h-2zm271 0h3v1h-3zm200 0h2v1h-2zm5 0h3v1h-3zm-651 1h2v2h-2zm251 0h3v2h-3zm-158 1h4v2h-4zm473 1h4v1h-4zm16 0h2v1h-2zm-329 1h4v1h-4zm40 2h5v1h-5zm163 0h4v1h-4zm167 0h3v2h-3zm-410 1h4v1h-4zm288 0h3v2h-3zm-591 1h4v2h-4zm9 0h4v2h-4zm649 0h5v1h-5zm68 1h2v2h-2zm-335 1h4v1h-4zm27 0h3v2h-3zm70 0h3v2h-3zm4 0h5v2h-5zm-143 1h4v2h-4zm-315 1h2v1h-2zm431 0h4v1h-4zm237 0h5v1h-5zm-705 1h3v2h-3zm350 0h4v2h-4zm-83 1h2v2h-2zm279 0h5v2h-5zm54 0h4v2h-4zm23 0h2v2h-2zm70 1h3v2h-3zm-686 1h5v2h-5zm470 0h2v1h-2zm-184 2h5v2h-5zm-91 1h5v2h-5zm-126 2h2v1h-2zm178 0h3v2h-3zm168 0h3v1h-3zm237 0h2v1h-2zm-610 1h2v1h-2zm158 0h5v1h-5zm313 0h4v1h-4zm-284 3h3v1h-3zm195 0h3v1h-3zm-175 1h4v2h-4zm94 0h4v2h-4zm74 0h2v2h-2zm86 0h3v2h-3zm244 0h3v2h-3zm19 1h2v2h-2zm-786 2h5v1h-5zm512 0h5v2h-5zm-469 1h2v2h-2zm23 0h5v1h-5zm645 0h5v2h-5zm-680 1h5v2h-5zm294 0h3v2h-3zm-277 1h5v2h-5zm176 0h4v1h-4zm118 0h2v1h-2zm-294 1h3v1h-3zm131 0h3v2h-3zm123 1h4v2h-4zm143 1h3v1h-3zm324 0h4v2h-4zm-261 1h4v1h-4zm-99 2h5v2h-5zm163 0h5v2h-5zm14 0h3v2h-3zm-264 1h2v2h-2zm336 0h5v1h-5zm35 0h4v1h-4zm-89 1h4v1h-4zm-34 1h2v2h-2zm-494 1h2v2h-2zm328 0h2v2h-2z"/><path fill="#05053f" d="M259 21h4v2h-4zm280 2h5v1h-5zm-51 1h3v2h-3zm237 0h3v2h-3zm67 0h3v1h-3zm-629 1h4v2h-4zm65 0h4v2h-4zm144 0h5v2h-5zm79 0h4v2h-4zm310 0h2v2h-2zm-720 1h5v1h-5zm658 0h5v2h-5zm-408 1h2v2h-2zm270 0h3v1h-3zm150 0h2v1h-2zm61 1h2v2h-2zm-127 1h3v1h-3zm125 0h5v2h-5zm-560 1h4v2h-4zm-117 1h4v2h-4zm45 0h4v2h-4zm74 0h2v2h-2zm1 0h4v2h-4zm152 0h2v2h-2zm366 0h2v1h-2zm-357 1h4v2h-4zm13 0h5v1h-5zm72 0h4v1h-4zm303 0h4v2h-4zm-480 1h4v2h-4zm8 0h2v2h-2zm-175 1h5v1h-5zm1 0h2v1h-2zm57 0h3v2h-3zm68 0h4v1h-4zm464 1h5v2h-5zm-594 1h2v2h-2zm399 0h3v1h-3zm-470 1h2v1h-2zm389 2h5v2h-5zm-156 1h3v2h-3zm128 0h2v1h-2zm350 0h3v1h-3zm-701 1h3v1h-3zm724 0h3v2h-3zm-661 1h4v1h-4zm225 0h2v1h-2zm-262 1h2v1h-2zm595 0h3v2h-3zm41 0h2v2h-2zm-671 1h4v2h-4zm485 0h4v2h-4zm-323 1h5v1h-5zm343 0h4v1h-4zm-77 1h5v2h-5zm136 0h4v2h-4zm103 1h2v1h-2zm-533 1h3v2h-3zm472 0h2v2h-2zm37 0h3v2h-3zm-565 2h4v2h-4zm34 0h2v2h-2zm279 0h4v1h-4zm37 0h5v1h-5zm172 0h2v2h-2zm67 1h4v2h-4zm-362 2h3v1h-3zm26 0h2v2h-2zm222 0h3v1h-3zm-379 1h4v1h-4zm536 0h2v2h-2zm-233 1h2v1h-2zm-431 1h5v1h-5zm106 0h3v2h-3zm-157 1h2v1h-2zm401 1h5v2h-5zm-413 1h5v2h-5zm195 0h2v2h-2zm102 0h3v1h-3zm-257 2h5v1h-5zm252 0h3v2h-3zm450 0h2v1h-2zm-729 1h3v2h-3zm175 0h4v2h-4zm90 0h2v2h-2zm74 0h2v1h-2zm164 1h2v1h-2zm-416 1h3v1h-3zm11 0h4v1h-4zm196 0h5v1h-5zm250 0h2v1h-2zm120 0h2v2h-2zm-64 1h3v1h-3zm-327 1h2v1h-2zm221 0h4v2h-4zm32 0h5v1h-5zm-201 1h2v2h-2zm293 0h3v2h-3zm-516 1h3v1h-3zm247 0h3v2h-3zm12 1h3v2h-3zm-205 1h2v2h-2zm563 0h4v2h-4zm-714 1h2v2h-2zm473 1h4v2h-4zm296 0h4v1h-4zm-367 2h3v1h-3zm133 0h2v2h-2zm-183 1h3v2h-3zm220 0h3v2h-3zm164 0h4v1h-4zm-704 1h5v1h-5zm218 1h2v2h-2zm46 0h2v2h-2zm211 1h4v1h-4zm84 0h3v2h-3zm156 0h5v1h-5zm-163 1h3v2h-3zm-570 1h4v2h-4zm30 0h5v1h-5zm359 0h3v1h-3zm-197 1h5v2h-5zm27 0h4v1h-4zm409 0h4v1h-4zm-311 1h2v2h-2zm347 0h5v2h-5zm-633 1h5v1h-5zm107 0h4v1h-4zm25 0h2v1h-2zm-40 1h3v2h-3zm229 0h5v2h-5zm-203 1h2v1h-2zm96 0h3v2h-3zm18 0h4v2h-4zm359 0h3v2h-3zm-673 1h5v2h-5zm622 0h5v1h-5zm-532 1h2v1h-2zm164 0h4v2h-4zm266 0h2v2h-2zm-253 1h4v2h-4zm143 1h4v1h-4zm105 0h3v2h-3zm5 2h4v1h-4zm-501 2h3v2h-3zm270 0h4v2h-4zm17 0h5v1h-5zm-285 1h2v1h-2zm562 1h3v1h-3zm-120 1h4v1h-4zm-123 1h4v1h-4zm256 0h4v1h-4zm-405 1h2v1h-2zm62 0h2v2h-2zm117 0h4v1h-4zm295 0h5v1h-5zm-252 2h5v2h-5zm315 0h5v2h-5zm-258 1h2v2h-2zm26 0h4v1h-4zm207 0h5v2h-5zm-648 2h5v1h-5zm305 0h3v2h-3zm234 0h5v2h-5zm-445 2h2v1h-2zm595 0h3v1h-3zm-504 1h3v2h-3zm-115 1h3v2h-3zm-57 1h3v2h-3zm-66 1h3v1h-3zm474 0h5v2h-5zm172 0h3v1h-3zm-457 1h2v2h-2zm118 0h4v2h-4zm16 0h5v1h-5zm-184 1h4v1h-4zm385 0h2v1h-2zm211 0h5v2h-5zm-606 1h5v2h-5zm101 0h2v2h-2zm223 0h5v2h-5zm-443 1h5v2h-5zm403 0h2v1h-2zm114 0h2v2h-2zm-516 1h4v1h-4zm733 1h4v1h-4zm-363 1h2v1h-2zm281 0h5v1h-5zm134 1h5v1h-5zm-783 1h2v1h-2zm161 0h2v1h-2zm565 0h3v1h-3zm-451 3h3v2h-3zm194 0h5v1h-5zm133 0h4v2h-4zm-318 1h5v1h-5zm28 0h2v1h-2zm91 0h5v2h-5zm-395 1h5v2h-5zm64 0h4v1h-4zm-7 1h3v1h-3zm162 0h3v1h-3zm-206 1h5v1h-5zm107 0h2v1h-2zm473 0h3v2h-3zm-531 2h3v2h-3zm320 0h3v1h-3zm73 0h4v1h-4zm-64 2h4v2h-4zm85 0h3v1h-3zm1 0h4v1h-4zm-58 1h5v2h-5zm92 2h5v2h-5zm-496 1h2v2h-2zm270 0h5v2h-5zm4 0h4v2h-4zm97 0h2v1h-2zm226 0h3v2h-3zm45 0h3v2h-3zm53 0h2v1h-2zm-725 1h3v1h-3zm398 0h3v1h-3zm79 0h5v2h-5zm-402 1h2v1h-2zm401 0h2v2h-2zm-159 1h3v1h-3zm-42 1h5v2h-5zm42 0h3v1h-3zm128 1h4v1h-4zm62 0h5v2h-5zm-455 1h5v1h-5zm428 0h4v1h-4zm128 0h3v1h-3zm-71 1h3v2h-3zm191 0h4v2h-4zm-590 1h5v1h-5zm36 1h2v1h-2zm99 0h5v1h-5zm-214 1h4v2h-4zm471 0h4v1h-4zm-260 1h5v1h-5zm432 0h2v2h-2zm-232 1h5v1h-5zm250 1h3v1h-3zm-451 2h5v1h-5zm-248 1h2v1h-2zm495 0h4v1h-4zm-93 1h5v2h-5zm67 0h3v1h-3zm-460 1h5v2h-5zm49 1h2v1h-2zm150 0h2v2h-2zm96 2h2v2h-2zm120 0h3v1h-3zm-439 2h5v2h-5zm219 0h3v2h-3zm-179 1h5v2h-5zm187 0h3v2h-3zm148 2h2v2h-2zm224 0h4v1h-4zm-70 1h5v2h-5zm8 0h4v2h-4zm63 0h3v2h-3zm28 0h2v2h-2zm-19 1h5v2h-5zm-579 1h3v1h-3zm124 0h3v1h-3zm80 0h5v1h-5zm424 0h4v1h-4zm-455 1h3v2h-3zm408 0h5v2h-5zm-571 1h4v2h-4zm22 0h3v1h-3zm59 1h4v1h-4zm59 0h4v1h-4zm173 0h5v1h-5zm190 0h5v2h-5zm25 0h3v2h-3zm-489 1h5v1h-5zm708 0h4v2h-4zm-787 1h4v2h-4zm75 0h3v2h-3zm277 0h4v2h-4zm51 1h3v2h-3zm47 0h2v1h-2zm-372 1h3v1h-3zm181 0h2v2h-2zm-244 1h4v2h-4zm225 0h5v2h-5zm4 0h5v1h-5zm278 0h5v2h-5zm-307 3h4v1h-4zm184 0h5v1h-5zm308 1h2v2h-2zm-197 1h4v2h-4zm-48 1h2v1h-2zm24 0h3v2h-3zm-313 2h4v2h-4zm-142 1h3v2h-3zm92 0h3v2h-3zm197 1h4v2h-4zm123 0h4v2h-4zm198 0h2v1h-2zm-321 1h2v2h-2zm-192 1h3v2h-3zm295 0h5v2h-5zm-424 1h2v2h-2zm328 0h4v1h-4zm381 0h2v2h-2zm-408 2h2v2h-2zm163 0h3v2h-3zm-281 1h5v1h-5zm174 0h5v2h-5zm84 0h4v1h-4zm-310 1h4v1h-4zm135 0h3v2h-3zm-122 1h5v2h-5zm34 0h3v2h-3zm216 0h3v2h-3zm-172 3h3v1h-3zm-85 1h3v2h-3zm124 0h5v2h-5zm147 0h5v1h-5zm-120 1h5v2h-5zm397 0h3v2h-3zm-571 1h5v1h-5zm202 0h2v1h-2zm163 0h5v2h-5zm165 0h3v2h-3zm-648 1h3v1h-3zm64 1h5v2h-5zm435 0h3v1h-3zm254 0h2v2h-2zm36 2h5v1h-5zm-144 1h3v2h-3zm29 0h3v2h-3zm-423 1h4v1h-4zm267 0h3v2h-3zm238 0h5v2h-5zm-552 1h5v2h-5zm-151 1h4v1h-4zm77 0h3v2h-3zm80 0h4v2h-4zm205 0h3v2h-3zm-162 1h5v2h-5zm94 0h4v1h-4zm-135 1h4v1h-4zm275 1h3v2h-3zm312 0h4v1h-4zm-327 1h3v2h-3zm-377 1h3v1h-3zm89 0h4v2h-4zm-88 1h5v2h-5zm203 0h3v1h-3zm25 0h5v1h-5zm394 0h2v2h-2zm41 0h4v1h-4zm-371 1h4v1h-4zm112 0h2v2h-2zm57 0h2v2h-2zm73 0h2v1h-2zm-608 1h4v1h-4zm518 0h5v2h-5zm101 0h3v2h-3zm-610 1h4v2h-4zm231 0h3v2h-3zm386 0h3v1h-3zm-35 1h2v1h-2zm-380 1h3v1h-3zm265 2h3v2h-3zm-198 1h5v2h-5zm471 0h4v1h-4zm-243 1h2v1h-2zm-455 1h3v1h-3zm133 1h4v2h-4zm470 0h3v2h-3zm-585 1h3v2h-3zm246 0h2v2h-2zm215 0h4v1h-4zm-65 1h5v1h-5zm21 0h2v2h-2zm-122 2h5v1h-5zm265 1h3v2h-3zm-579 1h2v2h-2zm182 0h5v1h-5zm-256 1h2v2h-2zm75 1h4v1h-4zm247 0h5v1h-5zm195 0h3v2h-3zm66 0h4v2h-4zm35 0h2v2h-2zm-393 1h4v2h-4zm561 0h4v2h-4zm-776 1h5v1h-5zm517 0h5v2h-5zm246 0h3v1h-3zm23 1h4v2h-4zm-781 1h3v1h-3zm444 0h4v1h-4zm266 0h3v2h-3zm1 0h2v1h-2zm-49 1h3v1h-3zm-436 1h4v1h-4zm299 1h5v2h-5zm1 0h2v1h-2zm-325 1h2v1h-2zm88 0h5v2h-5zm399 0h5v1h-5zm-63 1h3v1h-3zm-330 1h3v2h-3zm215 0h5v2h-5zm-384 1h3v2h-3zm264 0h3v2h-3zm180 0h3v2h-3zm-82 1h2v1h-2zm246 0h5v2h-5zm-571 1h4v1h-4zm135 0h2v1h-2zm361 0h3v2h-3zm-174 1h4v2h-4zm-456 2h5v2h-5zm549 0h3v2h-3zm55 0h2v1h-2zm106 0h3v2h-3zm-271 1h3v2h-3zm-291 1h4v2h-4zm62 0h4v2h-4zm147 1h5v1h-5zm71 0h5v2h-5zm-70 1h3v2h-3zm219 0h3v2h-3zm-560 1h3v2h-3zm208 0h3v2h-3zm-267 1h4v2h-4zm716 0h3v1h-3zm-128 1h3v1h-3zm111 0h4v1h-4zm-265 3h3v2h-3zm-317 1h2v1h-2zm314 0h5v1h-5zm-395 2h4v1h-4zm459 0h2v2h-2zm-372 1h4v1h-4zm181 0h2v2h-2zm276 1h3v2h-3zm138 0h2v2h-2zm-476 1h5v1h-5zm24 0h2v2h-2zm144 0h4v1h-4zm115 0h4v2h-4zm19 1h5v2h-5zm132 0h3v1h-3zm-264 1h2v2h-2zm-112 1h3v2h-3zm66 1h2v2h-2zm-377 2h5v2h-5zm241 0h4v2h-4zm263 0h5v1h-5zm201 0h4v1h-4zm-615 2h4v1h-4zm515 0h3v2h-3zm4 1h3v2h-3zm-554 2h4v2h-4zm571 0h2v1h-2zm-579 1h5v2h-5zm122 0h3v1h-3zm614 0h2v2h-2zm17 0h5v2h-5zm-719 1h4v2h-4zm632 0h2v1h-2zm34 1h4v1h-4zm41 0h4v2h-4zm-728 1h2v2h-2zm352 0h2v1h-2zm370 0h4v1h-4zm26 0h5v2h-5zm-801 1h3v1h-3zm193 0h4v2h-4zm283 0h3v1h-3zm195 0h3v1h-3zm130 1h5v1h-5zm-581 1h2v2h-2zm-49 1h5v1h-5zm328 0h2v2h-2zm-419 1h2v1h-2zm203 0h2v2h-2zm40 0h4v1h-4zm-282 1h5v1h-5zm90 0h5v1h-5zm37 0h3v1h-3zm235 0h5v1h-5zm244 1h2v2h-2zm135 0h2v2h-2zm-600 2h4v1h-4zm-136 1h5v1h-5zm746 0h4v1h-4zm-159 1h2v2h-2zm138 0h2v1h-2zm18 0h4v2h-4zm-541 1h5v1h-5zm202 0h3v2h-3zm143 0h5v2h-5zm136 1h3v2h-3zm-211 1h4v2h-4zm49 0h5v1h-5zm-526 1h4v2h-4zm232 0h5v1h-5zm247 1h3v2h-3zm180 0h5v1h-5zm-651 1h5v1h-5zm30 0h5v2h-5zm573 0h5v2h-5zm57 0h2v1h-2zm-241 1h2v1h-2zm-177 1h3v2h-3zm69 0h3v2h-3zm197 0h4v1h-4zm88 1h5v2h-5zm117 0h5v2h-5zm-98 2h3v1h-3zm-313 1h4v2h-4zm183 0h3v1h-3zm174 0h4v1h-4zm14 0h5v2h-5zm58 0h2v1h-2zm-340 1h3v2h-3zm-261 1h3v1h-3zm14 0h2v1h-2zm76 0h4v2h-4zm314 0h5v2h-5zm-274 1h4v2h-4zm249 2h4v1h-4zm-532 1h3v1h-3zm602 0h2v2h-2zm-314 1h4v2h-4zm340 0h3v2h-3zm-571 1h2v1h-2zm373 0h3v2h-3zm-183 1h2v2h-2zm-146 1h5v1h-5zm588 0h4v2h-4zm-434 1h4v1h-4zm258 0h2v2h-2zm190 0h5v2h-5zm-466 1h4v2h-4zm253 0h3v1h-3zm27 0h5v2h-5zm258 0h2v2h-2zm-741 1h4v1h-4zm85 0h3v2h-3zm527 0h4v2h-4zm6 1h2v2h-2zm-5 2h5v1h-5zm-168 1h5v2h-5zm127 0h4v1h-4zm116 1h4v1h-4zm-413 1h3v1h-3zm233 0h2v2h-2zm6 0h5v2h-5zm17 0h4v2h-4zm-591 1h5v1h-5zm211 0h2v2h-2zm301 0h4v2h-4zm209 1h4v1h-4zm-704 1h5v2h-5zm226 1h2v2h-2zm343 0h4v2h-4zm-189 1h5v2h-5zm-319 1h3v1h-3zm539 0h3v2h-3zm156 0h3v2h-3zm-753 1h3v2h-3zm729 0h5v1h-5zm-371 2h3v1h-3zm221 0h2v2h-2zm48 0h5v2h-5zm124 0h2v1h-2zm-732 1h4v2h-4zm239 0h5v2h-5zm221 0h5v2h-5zm133 0h5v2h-5zm54 0h4v1h-4zm38 0h3v2h-3zm-580 2h4v2h-4zm10 0h5v2h-5zm634 1h2v2h-2zm-580 1h5v2h-5zm20 0h3v1h-3zm-188 1h3v1h-3zm185 0h5v2h-5zm175 1h4v1h-4zm288 0h5v1h-5zm38 0h3v2h-3zm21 0h5v2h-5zm-248 1h3v1h-3zm-436 1h2v2h-2zm92 0h5v2h-5zm565 0h3v2h-3zm-643 2h4v2h-4zm206 1h5v2h-5zm241 0h3v2h-3zm-352 2h4v2h-4zm-181 1h3v2h-3zm221 0h3v2h-3zm46 0h3v2h-3zm281 0h3v2h-3zm-164 1h2v2h-2zm-123 1h5v1h-5zm177 1h2v1h-2zm278 0h4v1h-4zm18 0h4v2h-4zm-503 1h2v2h-2zm150 0h4v1h-4zm197 1h2v1h-2zm-117 1h4v1h-4zm-249 1h4v1h-4zm101 0h5v2h-5zm10 0h5v1h-5zm269 0h2v1h-2zm117 0h2v2h-2zm-121 1h4v1h-4zm120 1h5v2h-5zm24 0h2v1h-2zm52 0h4v2h-4zm-211 1h2v1h-2zm-195 2h4v1h-4zm-288 1h3v1h-3zm617 0h4v1h-4zm-310 1h3v2h-3zm348 0h5v1h-5zm-533 1h4v1h-4zm73 0h2v2h-2zm372 0h4v2h-4zm-455 1h5v1h-5zm277 1h2v1h-2zm-77 1h3v2h-3zm285 1h3v2h-3zm-247 1h3v2h-3zm62 0h2v2h-2zm-350 1h2v2h-2zm564 0h5v1h-5zm32 1h3v1h-3zm36 0h5v2h-5zm-157 1h2v1h-2zm104 1h3v1h-3zm48 0h3v1h-3zm-357 1h2v2h-2zm271 0h5v1h-5zm-355 1h4v2h-4zm182 1h3v2h-3zm26 0h4v2h-4zm-330 1h3v2h-3zm425 0h5v2h-5zm-516 1h5v1h-5zm-68 1h5v2h-5zm145 0h2v1h-2zm32 0h2v2h-2zm-174 1h5v1h-5zm79 0h5v2h-5zm118 0h5v2h-5zm-256 2h4v2h-4zm157 0h2v1h-2zm464 0h2v2h-2zm140 1h2v2h-2zm-744 1h5v1h-5zm445 0h3v2h-3zm305 1h2v1h-2zm-740 1h4v2h-4zm485 0h5v2h-5zm3 0h3v2h-3zm109 0h3v1h-3zm-150 1h3v1h-3zm317 0h3v2h-3zm-741 2h2v2h-2zm137 0h5v1h-5zm385 0h2v2h-2zm-403 1h5v2h-5zm-63 1h3v1h-3zm285 3h4v2h-4zm117 0h4v2h-4zm214 0h5v1h-5zm20 0h2v2h-2zm49 1h2v1h-2zm-627 1h4v1h-4zm444 0h4v1h-4zm146 0h4v1h-4zm-542 1h4v2h-4zm73 0h2v2h-2zm356 0h2v2h-2zm84 0h3v2h-3zm-547 2h5v2h-5zm483 0h5v1h-5zm-541 1h3v1h-3zm13 0h5v2h-5zm495 1h3v2h-3zm-197 1h5v2h-5zm164 1h2v2h-2zm-16 1h2v1h-2zm-578 1h2v2h-2zm479 0h2v1h-2zm-436 1h4v2h-4zm719 0h4v2h-4zm-151 1h4v2h-4zm19 0h5v2h-5zm-560 1h5v1h-5zm104 0h5v1h-5zm434 0h2v2h-2zm14 1h5v1h-5zm-599 1h5v2h-5zm331 0h3v1h-3zm-354 1h2v2h-2zm810 1h4v1h-4zm-561 1h5v2h-5zm285 0h3v2h-3zm-392 1h4v2h-4zm239 1h5v2h-5zm93 0h2v1h-2zm-379 1h4v2h-4zm169 0h4v1h-4zm341 0h5v2h-5zm124 0h2v2h-2zm63 0h2v1h-2zm-609 1h5v1h-5zm-144 1h3v1h-3zm432 0h5v2h-5zm-348 1h3v1h-3zm568 0h4v2h-4zm111 0h3v2h-3zm-347 1h3v1h-3zm-226 1h4v2h-4zm-230 1h4v1h-4zm57 0h3v1h-3zm139 0h5v2h-5zm496 1h4v2h-4zm82 0h4v1h-4zm-437 1h4v2h-4zm61 1h4v2h-4zm408 1h2v1h-2zm-178 1h5v2h-5zm-612 1h5v1h-5zm346 0h2v1h-2zm-251 1h5v2h-5zm52 0h5v2h-5zm273 0h2v2h-2zm-401 1h5v1h-5zm446 0h4v2h-4zm140 1h2v2h-2zm-552 1h2v2h-2zm642 0h4v1h-4zm-558 1h2v1h-2zm290 0h3v2h-3zm-269 1h5v2h-5zm337 3h3v2h-3zm125 0h5v2h-5zm38 0h3v1h-3zm-626 1h4v2h-4zm463 0h5v1h-5zm108 0h5v1h-5zm-530 1h3v1h-3zm235 0h3v1h-3zm287 0h3v2h-3zm176 0h2v2h-2zm-560 1h4v1h-4zm-128 1h3v1h-3zm90 0h3v1h-3zm39 0h5v2h-5zm542 0h4v2h-4zm-721 1h3v1h-3zm659 0h4v1h-4zm-502 1h3v1h-3zm587 2h4v1h-4zm-517 1h5v1h-5zm124 0h5v1h-5zm208 0h5v1h-5zm-583 1h2v2h-2zm438 0h3v2h-3zm291 0h5v2h-5zm-341 1h5v2h-5zm325 0h3v1h-3zm-589 1h4v2h-4zm107 1h4v1h-4zm95 0h4v2h-4zm215 1h3v1h-3zm47 2h3v2h-3zm-432 1h4v2h-4zm528 0h2v1h-2zm52 0h4v1h-4zm4 0h4v2h-4zm-639 1h4v2h-4zm50 0h4v1h-4zm398 1h3v1h-3zm3 0h5v1h-5zm99 0h2v1h-2zm7 1h5v1h-5zm-469 3h3v1h-3zm384 0h2v1h-2zm112 0h4v1h-4zm-424 1h3v2h-3zm173 0h5v2h-5zm-281 1h3v1h-3zm246 0h5v2h-5zm240 0h2v1h-2zm147 0h5v1h-5zm-308 1h3v2h-3zm309 2h2v2h-2zm-413 1h5v2h-5zm293 0h5v1h-5zm14 0h5v2h-5zm-593 2h5v2h-5zm548 0h3v1h-3zm-135 2h2v2h-2zm-487 1h3v1h-3zm309 2h4v2h-4zm272 0h4v1h-4zm-504 1h3v1h-3zm427 0h2v1h-2zm2 0h3v1h-3zm-65 1h4v1h-4zm199 3h3v2h-3zm-501 1h2v2h-2zm230 0h4v1h-4zm262 0h4v2h-4zm-404 1h2v1h-2zm378 0h2v2h-2zm-85 1h4v1h-4zm-383 2h4v1h-4zm490 0h5v1h-5zm-569 1h2v2h-2zm440 0h2v2h-2zm162 0h5v1h-5zm-581 1h3v2h-3zm240 0h2v1h-2zm207 0h3v1h-3zm-537 1h5v1h-5zm259 0h5v2h-5zm-208 2h3v2h-3zm184 0h3v2h-3zm464 0h5v1h-5zm-193 1h2v1h-2zm130 1h2v1h-2zm-523 1h2v2h-2zm538 0h3v1h-3zm-557 2h3v2h-3zm602 0h5v2h-5zm-610 1h4v1h-4zm102 0h2v2h-2zm-64 1h5v2h-5zm384 0h5v2h-5zm123 0h2v1h-2zm-202 1h2v1h-2zm265 0h3v2h-3zm-252 1h2v1h-2zm220 0h3v2h-3zm3 0h3v2h-3zm-204 1h3v1h-3zm16 0h2v2h-2zm100 0h2v2h-2zm-538 1h2v2h-2zm152 1h3v1h-3zm546 1h2v2h-2zm-570 3h4v1h-4zm24 0h5v2h-5zm275 0h5v2h-5zm4 0h2v1h-2zm167 0h5v2h-5zm-498 1h5v1h-5zm534 0h5v2h-5zm-524 1h3v2h-3zm631 0h3v2h-3zm-50 1h2v1h-2zm-754 2h5v1h-5zm196 0h2v2h-2zm-165 1h2v2h-2zm36 0h3v1h-3zm71 0h2v1h-2zm427 0h5v2h-5zm121 1h5v2h-5zm51 0h2v2h-2zm-537 2h4v2h-4zm20 0h5v1h-5zm24 0h5v2h-5zm69 0h2v2h-2zm-169 2h5v2h-5zm323 0h3v2h-3zm44 0h4v2h-4zm57 0h3v1h-3zm88 0h2v1h-2zm-445 2h3v1h-3zm389 1h2v1h-2zm-52 1h3v1h-3zm-449 1h3v1h-3zm328 0h3v2h-3zm-250 1h5v2h-5zm188 0h3v2h-3zm-212 1h3v2h-3zm300 0h5v2h-5zm-359 1h4v2h-4zm506 0h4v1h-4zm-569 1h3v1h-3zm129 0h3v2h-3zm582 0h2v2h-2zm-470 1h2v2h-2zm338 0h5v2h-5zm174 0h5v2h-5zm-745 1h3v2h-3zm54 0h4v1h-4zm297 0h3v1h-3zm294 0h3v2h-3zm-608 1h4v1h-4zm140 0h3v2h-3zm116 0h4v1h-4zm312 0h2v2h-2zm-180 1h4v2h-4zm-187 1h2v2h-2zm295 0h5v1h-5zm132 1h5v1h-5zm51 0h5v1h-5zm-725 1h3v2h-3zm60 0h3v2h-3zm489 1h5v1h-5zm-193 1h2v2h-2zm322 2h3v2h-3zm-507 1h2v1h-2zm209 0h2v2h-2zm41 0h4v1h-4zm115 0h2v2h-2zm-516 1h5v2h-5zm81 0h3v2h-3zm490 0h5v1h-5zm-239 1h3v1h-3zm6 0h2v1h-2zm65 0h4v2h-4zm-32 1h3v2h-3zm33 0h3v1h-3zm-143 1h5v1h-5zm281 0h3v2h-3zm-442 1h3v1h-3zm8 1h4v2h-4zm48 1h5v2h-5zm143 0h2v2h-2zm-205 1h4v2h-4zm66 0h4v2h-4zm570 0h5v2h-5zm9 0h4v2h-4zm-674 1h5v2h-5zm151 0h2v2h-2zm-104 1h2v1h-2zm-83 1h5v1h-5zm666 0h3v1h-3zm-453 1h3v1h-3zm3 0h5v2h-5zm346 0h2v2h-2zm-66 1h4v1h-4zm-428 1h5v1h-5zm514 0h2v1h-2zm-370 1h3v2h-3zm399 0h2v2h-2zm118 0h3v1h-3zm-664 1h3v2h-3zm638 0h4v1h-4zm-631 2h2v2h-2zm13 0h4v2h-4zm211 0h2v1h-2zm121 0h5v1h-5zm258 0h2v2h-2zm24 1h4v2h-4zm-373 1h2v2h-2zm53 1h3v1h-3zm-190 1h5v1h-5zm35 0h2v2h-2zm188 0h2v2h-2zm121 0h5v2h-5zm-590 1h4v1h-4zm103 0h4v2h-4zm136 0h3v1h-3zm24 0h5v2h-5zm66 2h5v2h-5zm30 0h3v2h-3zm122 0h2v1h-2zm-349 1h3v2h-3zm443 0h5v1h-5zm74 0h3v2h-3zm-427 1h2v2h-2zm-41 1h3v1h-3zm461 0h2v1h-2zm-480 1h2v1h-2zm46 0h2v2h-2zm62 0h3v1h-3zm109 0h3v2h-3zm-289 1h2v1h-2zm402 0h4v2h-4zm-466 1h4v1h-4zm652 1h4v2h-4zm1 1h4v2h-4zm-622 1h2v1h-2zm344 0h5v1h-5zm357 0h5v2h-5zm-564 2h5v2h-5zm500 0h2v1h-2zm-181 1h3v2h-3zm-382 1h3v2h-3zm225 1h3v1h-3zm124 0h3v2h-3zm19 0h2v1h-2zm-326 1h3v1h-3zm1 2h4v2h-4zm135 0h5v2h-5zm-111 1h3v2h-3zm345 1h5v1h-5zm30 0h4v2h-4zm-527 1h5v2h-5zm57 0h3v2h-3zm27 0h2v1h-2zm614 0h2v2h-2zm-392 1h4v2h-4zm12 0h3v2h-3zm28 0h5v2h-5zm102 0h5v2h-5zm-488 2h3v1h-3zm665 0h3v2h-3zm-607 1h2v1h-2zm36 0h3v1h-3zm116 1h4v2h-4zm21 0h2v1h-2zm213 0h3v1h-3zm176 0h3v1h-3zm-594 1h4v2h-4zm306 0h2v2h-2zm5 1h5v1h-5zm226 0h2v2h-2zm38 0h5v1h-5zm75 0h4v2h-4zm-616 1h4v2h-4zm347 0h2v1h-2zm179 0h4v2h-4zm-451 1h3v2h-3zm5 0h3v2h-3zm296 0h3v2h-3zm248 0h3v1h-3zm7 0h4v1h-4zm-660 1h3v2h-3zm97 0h2v2h-2zm125 0h4v2h-4zm-253 1h3v2h-3zm-10 1h5v1h-5zm141 0h2v1h-2zm99 0h4v2h-4zm154 0h2v1h-2zm183 0h3v1h-3zm-416 1h5v1h-5zm88 1h2v1h-2zm233 0h2v1h-2zm-472 1h4v1h-4zm36 0h4v2h-4zm459 0h4v2h-4zm-352 1h5v2h-5zm70 0h3v1h-3zm529 0h4v2h-4zm-482 1h2v1h-2zm12 0h5v1h-5zm355 0h5v2h-5zm-660 2h5v2h-5zm173 0h3v2h-3zm586 0h4v2h-4zm-533 2h3v1h-3zm313 0h3v2h-3zm274 0h2v2h-2zm-325 1h5v1h-5zm-86 1h3v1h-3zm323 0h3v2h-3zm-138 1h2v1h-2zm-10 1h3v2h-3zm-195 1h4v1h-4zm419 0h5v1h-5zm-721 1h4v1h-4zm26 0h2v2h-2zm682 0h4v1h-4zm-118 1h4v2h-4zm123 1h4v1h-4zm-16 1h3v2h-3zm-751 1h2v2h-2zm21 1h4v1h-4zm675 0h5v2h-5zm-234 1h5v1h-5zm-433 1h2v1h-2zm51 0h3v2h-3zm15 2h3v1h-3zm505 1h2v1h-2zm14 1h4v2h-4zm-599 1h5v2h-5zm46 0h3v2h-3zm172 0h5v2h-5zm106 1h5v1h-5zm65 0h2v2h-2zm264 0h3v2h-3zm-136 1h3v1h-3zm57 0h4v2h-4zm-267 1h2v1h-2zm335 0h5v2h-5zm-130 1h2v2h-2zm-413 1h2v2h-2zm501 0h3v2h-3zm-273 2h3v1h-3zm215 0h5v2h-5zm30 0h3v2h-3zm27 2h5v1h-5zm22 1h3v1h-3zm-355 1h2v1h-2zm223 0h4v1h-4zm-440 1h4v2h-4zm71 0h4v2h-4zm132 2h3v2h-3zm43 0h3v2h-3zm17 0h2v1h-2zm70 0h4v2h-4zm151 0h2v2h-2zm-400 1h5v1h-5zm-116 1h5v1h-5zm135 0h2v2h-2zm341 0h5v2h-5zm195 0h5v1h-5zm49 0h3v2h-3zm-112 1h3v1h-3zm89 0h4v1h-4zm-592 1h5v2h-5zm201 0h5v1h-5zm147 0h4v2h-4zm202 0h3v1h-3zm-709 1h4v2h-4zm357 0h5v1h-5zm379 0h5v1h-5zm-22 1h3v1h-3zm-641 2h5v2h-5zm362 0h5v2h-5zm10 0h4v1h-4zm43 1h3v2h-3zm286 0h4v2h-4zm-612 1h5v2h-5zm246 0h2v2h-2zm72 1h2v2h-2zm-122 1h5v2h-5zm211 0h2v2h-2zm118 1h5v1h-5zm85 0h3v2h-3zm-766 1h3v1h-3zm794 1h3v2h-3zm-311 1h5v1h-5zm38 0h2v1h-2zm-259 1h2v2h-2zm406 0h5v1h-5zm60 0h5v1h-5zm-409 1h3v1h-3zm111 0h4v2h-4zm88 0h3v2h-3zm17 1h4v1h-4zm-400 2h4v2h-4zm167 0h5v2h-5zm85 0h3v2h-3zm33 0h3v1h-3zm-416 1h2v2h-2zm165 0h4v2h-4zm106 0h4v1h-4zm52 0h5v2h-5zm405 0h3v2h-3zm-643 1h2v1h-2zm141 0h2v1h-2zm448 0h3v2h-3zm-669 2h2v2h-2zm643 0h5v1h-5zm55 0h3v1h-3zm-317 1h2v1h-2zm250 0h2v2h-2zm-417 1h5v2h-5zm295 1h2v1h-2zm219 0h3v1h-3zm-612 1h4v1h-4zm61 0h2v2h-2zm17 0h2v1h-2zm152 0h5v1h-5zm138 0h2v2h-2zm121 0h2v2h-2zm-550 1h3v1h-3zm102 0h2v1h-2zm282 0h3v2h-3zm193 0h3v2h-3zm-113 2h2v1h-2zm-75 1h5v1h-5zm-357 1h5v2h-5zm649 0h5v2h-5zm-682 1h5v2h-5zm127 0h4v1h-4zm472 0h2v1h-2zm-523 1h2v2h-2zm182 1h2v2h-2zm213 0h3v2h-3zm228 0h5v2h-5zm-416 1h4v2h-4zm313 0h4v2h-4zm-289 1h3v1h-3zm304 0h4v2h-4zm-13 1h5v2h-5zm-345 1h4v1h-4zm142 0h2v1h-2zm283 0h4v2h-4zm-660 1h5v1h-5zm396 1h4v2h-4zm-231 1h4v2h-4zm309 0h4v2h-4zm28 0h5v1h-5zm173 0h2v1h-2zm45 0h2v2h-2zm-668 3h4v2h-4zm13 0h3v2h-3zm250 0h4v2h-4zm92 1h2v1h-2zm138 0h2v1h-2zm106 0h4v2h-4zm-729 1h4v1h-4zm185 0h3v2h-3zm104 1h5v1h-5zm192 0h5v1h-5zm80 0h4v2h-4zm-376 1h5v2h-5zm43 1h4v1h-4zm314 0h3v2h-3zm-113 1h5v2h-5zm33 0h3v1h-3zm207 2h2v2h-2zm56 0h5v2h-5zm-735 1h4v2h-4zm23 2h4v2h-4zm141 0h2v1h-2zm132 0h5v2h-5zm5 0h4v1h-4zm15 0h2v2h-2zm288 0h4v1h-4zm-115 1h2v1h-2zm73 0h4v2h-4zm155 0h4v2h-4zm2 0h5v2h-5zm-548 1h4v1h-4zm335 0h4v1h-4zm259 1h3v2h-3zm-702 1h4v2h-4zm44 0h3v1h-3zm115 0h4v2h-4zm470 0h4v1h-4zm41 0h5v1h-5zm-685 1h2v1h-2zm164 0h2v2h-2zm134 0h2v2h-2zm17 0h4v1h-4zm-52 2h4v1h-4zm-307 2h2v1h-2zm104 0h3v1h-3zm597 0h5v2h-5zm-392 1h4v2h-4zm-155 1h3v1h-3zm191 0h2v2h-2zm-260 1h3v2h-3zm382 0h3v2h-3zm-445 1h3v2h-3zm503 0h3v2h-3zm-437 1h4v2h-4zm378 2h3v2h-3zm-93 1h5v1h-5zm208 0h5v2h-5zm-471 1h3v1h-3zm308 0h4v2h-4zm189 0h3v1h-3zm-497 1h3v2h-3zm31 1h4v2h-4zm7 0h5v2h-5zm145 0h2v1h-2zm87 0h5v2h-5zm-32 1h5v2h-5zm177 0h3v1h-3zm117 0h5v2h-5zm-630 1h2v2h-2zm106 0h3v1h-3zm319 0h5v2h-5zm174 0h5v1h-5zm-120 1h3v2h-3zm-29 1h4v2h-4zm-204 1h5v2h-5zm344 1h2v2h-2zm202 0h4v1h-4zm-515 1h5v1h-5zm403 0h5v2h-5zm-170 1h2v1h-2zm45 0h5v2h-5zm-318 2h2v1h-2zm90 1h5v2h-5zm-270 1h3v2h-3zm234 0h5v2h-5zm-285 1h3v2h-3zm567 1h4v2h-4zm-409 3h3v1h-3zm-158 2h4v2h-4zm174 0h4v1h-4zm24 0h3v2h-3zm293 0h3v2h-3zm-370 2h5v1h-5zm29 0h4v2h-4zm527 0h3v1h-3zm-624 1h2v2h-2zm246 0h4v1h-4zm196 1h2v2h-2zm146 0h4v1h-4zm24 0h3v2h-3zm-592 2h5v1h-5zm713 0h4v2h-4zm-744 1h3v1h-3zm117 0h4v1h-4zm460 0h4v1h-4zm-483 2h5v2h-5zm262 0h3v1h-3zm46 1h2v1h-2zm117 1h3v1h-3zm-476 2h4v2h-4zm196 0h5v1h-5zm-196 1h2v2h-2zm67 0h2v1h-2zm42 1h5v1h-5zm191 2h2v2h-2zm-139 1h2v1h-2zm171 0h2v2h-2zm45 0h2v2h-2zm-228 1h2v2h-2zm127 0h5v2h-5zm-80 1h4v2h-4zm-191 1h3v1h-3zm191 0h4v2h-4zm175 0h3v1h-3zm30 0h3v2h-3zm148 1h3v2h-3zm-400 1h5v1h-5zm57 1h2v2h-2zm44 0h2v1h-2zm16 0h2v2h-2zm4 0h5v1h-5zm401 0h3v2h-3zm-368 1h2v2h-2zm-280 1h2v1h-2zm8 0h3v1h-3zm516 0h2v2h-2zm-508 1h3v1h-3zm578 0h5v1h-5zm-672 1h5v1h-5zm14 1h2v2h-2zm439 0h5v1h-5zm100 1h3v2h-3zm114 0h2v2h-2zm-713 1h3v2h-3zm195 0h5v2h-5zm141 0h2v1h-2zm186 1h5v1h-5zm62 0h5v2h-5zm173 0h5v2h-5zm-306 1h3v1h-3zm55 0h2v1h-2zm-281 1h3v1h-3zm212 0h3v1h-3zm-106 1h2v2h-2zm336 0h3v1h-3zm-260 1h3v2h-3zm-298 1h3v2h-3zm527 0h3v1h-3zm168 0h4v2h-4zm-612 1h3v1h-3zm-116 1h3v2h-3zm28 0h5v1h-5zm159 0h2v2h-2zm85 0h4v1h-4zm-183 1h5v1h-5zm9 0h3v1h-3zm-140 1h5v1h-5zm59 2h4v1h-4zm650 0h4v2h-4zm-570 1h3v2h-3zm89 0h2v1h-2zm297 0h4v2h-4zm4 0h3v2h-3zm-507 1h5v1h-5zm15 0h4v1h-4zm355 0h4v1h-4zm34 0h2v1h-2zm215 1h5v1h-5zm65 1h5v2h-5zm-607 1h3v1h-3zm226 0h2v1h-2zm-296 1h2v1h-2zm19 0h3v2h-3zm543 0h5v2h-5zm-181 2h5v1h-5zm-427 1h2v2h-2zm292 0h5v1h-5zm-313 1h4v1h-4zm63 0h3v1h-3zm102 0h3v1h-3zm92 0h3v2h-3zm539 0h4v2h-4zm-263 1h4v2h-4zm21 0h3v2h-3zm-410 1h5v2h-5zm132 1h4v2h-4zm13 0h4v1h-4zm424 0h5v2h-5zm28 0h3v2h-3z"/><path fill="#06064d" d="M164 21h5v1h-5zm55 0h5v1h-5zm-15 1h4v2h-4zm-53 2h4v2h-4zm45 0h5v1h-5zm169 1h3v2h-3zm248 0h3v1h-3zm-70 3h3v2h-3zm-205 1h2v2h-2zm212 0h4v1h-4zm-493 1h4v1h-4zm432 0h3v1h-3zm-27 1h3v1h-3zm242 1h3v1h-3zm-161 1h5v1h-5zm27 0h4v2h-4zm61 0h2v2h-2zm-616 1h5v1h-5zm245 0h5v1h-5zm314 0h5v1h-5zm14 0h3v2h-3zm-31 1h4v2h-4zm-474 2h2v2h-2zm292 0h3v2h-3zm410 0h2v2h-2zm-194 2h2v2h-2zm162 0h3v1h-3zm-53 1h4v1h-4zm108 1h5v2h-5zm-190 1h5v2h-5zm-590 1h5v1h-5zm601 0h2v1h-2zm6 0h3v1h-3zm-151 1h3v1h-3zm-464 1h5v1h-5zm181 0h2v2h-2zm153 0h3v1h-3zm226 0h4v1h-4zm212 0h2v1h-2zm-526 2h5v1h-5zm170 0h4v2h-4zm-391 1h5v2h-5zm596 0h3v2h-3zm-333 1h5v2h-5zm-169 1h3v2h-3zm198 0h4v1h-4zm144 0h2v2h-2zm241 1h2v2h-2zm-698 1h2v1h-2zm42 0h3v1h-3zm331 1h5v1h-5zm40 1h2v1h-2zm157 1h5v2h-5zm140 0h2v1h-2zm10 0h4v2h-4zm-38 1h2v1h-2zm-503 1h4v2h-4zm-57 1h3v1h-3zm118 4h2v2h-2zm12 0h2v2h-2zm191 0h2v2h-2zm41 3h2v2h-2zm33 1h4v1h-4zm175 1h3v2h-3zm-70 1h3v1h-3zm96 0h5v1h-5zm-666 1h5v2h-5zm419 0h4v2h-4zm-335 1h3v1h-3zm362 0h3v2h-3zm35 2h3v1h-3zm-274 1h2v1h-2zm275 0h2v2h-2zm-542 1h3v1h-3zm54 1h3v1h-3zm500 1h3v2h-3zm106 0h3v1h-3zm-601 2h4v2h-4zm278 1h3v2h-3zm188 0h4v2h-4zm-149 1h3v1h-3zm221 0h5v2h-5zm108 0h4v1h-4zm41 1h2v1h-2zm-687 1h5v2h-5zm4 1h3v1h-3zm4 2h4v1h-4zm21 1h2v2h-2zm545 0h3v2h-3zm-443 1h4v1h-4zm596 0h3v2h-3zm-670 1h4v2h-4zm672 0h5v2h-5zm-548 1h3v2h-3zm414 1h2v1h-2zm134 2h2v2h-2zm-752 2h3v1h-3zm354 0h4v2h-4zm41 0h4v2h-4zm-376 1h2v2h-2zm646 1h4v1h-4zm-376 1h3v1h-3zm323 1h5v2h-5zm-105 1h5v2h-5zm-430 1h5v1h-5zm90 1h5v2h-5zm69 0h2v1h-2zm371 0h2v2h-2zm40 0h2v2h-2zm-669 1h2v2h-2zm9 0h2v1h-2zm113 0h3v2h-3zm-95 1h3v1h-3zm76 0h3v2h-3zm506 0h2v2h-2zm-631 2h3v1h-3zm413 0h5v1h-5zm-5 2h5v1h-5zm394 1h2v2h-2zm-294 2h3v2h-3zm-484 1h4v1h-4zm697 0h4v2h-4zm-402 1h5v2h-5zm27 0h4v2h-4zm295 0h2v1h-2zm-647 2h3v2h-3zm480 0h4v1h-4zm-166 2h3v2h-3zm337 0h4v2h-4zm-601 1h5v1h-5zm65 1h5v1h-5zm391 0h3v2h-3zm130 4h5v2h-5zm-222 1h4v2h-4zm79 0h2v2h-2zm143 1h3v2h-3zm-337 1h2v2h-2zm50 0h4v1h-4zm426 0h2v2h-2zm-769 2h5v1h-5zm777 0h4v2h-4zm-784 1h3v1h-3zm451 2h3v1h-3zm267 0h2v2h-2zm-410 3h4v2h-4zm-282 1h4v1h-4zm300 0h4v1h-4zm394 0h2v2h-2zm-548 1h5v1h-5zm167 0h2v2h-2zm266 0h2v1h-2zm85 1h3v2h-3zm114 0h5v1h-5zm-87 1h4v2h-4zm-436 1h2v2h-2zm-45 1h2v1h-2zm145 0h4v2h-4zm409 1h3v2h-3zm-194 1h4v2h-4zm5 0h2v2h-2zm-260 1h4v1h-4zm353 0h2v1h-2zm-275 1h2v2h-2zm-114 1h3v2h-3zm-189 1h4v1h-4zm196 0h2v1h-2zm-158 1h5v2h-5zm487 0h4v1h-4zm82 1h4v1h-4zm-371 1h2v2h-2zm155 1h2v1h-2zm15 2h5v1h-5zm244 1h2v2h-2zm-753 1h2v2h-2zm116 0h4v2h-4zm51 3h4v2h-4zm173 1h2v2h-2zm432 0h3v1h-3zm-405 1h5v1h-5zm214 3h2v2h-2zm-81 1h2v2h-2zm-389 1h3v1h-3zm106 0h4v1h-4zm305 0h4v2h-4zm-307 1h5v2h-5zm141 0h2v2h-2zm232 0h3v2h-3zm-530 2h4v2h-4zm307 1h5v1h-5zm234 0h3v1h-3zm105 0h4v1h-4zm-491 3h2v1h-2zm491 2h5v1h-5zm-468 1h5v2h-5zm280 0h4v1h-4zm282 0h3v2h-3zm-246 1h2v1h-2zm143 0h2v1h-2zm-518 1h4v1h-4zm70 0h4v1h-4zm138 0h2v2h-2zm-307 1h3v2h-3zm25 1h4v1h-4zm580 2h3v1h-3zm-299 1h3v1h-3zm-387 3h5v2h-5zm304 0h5v1h-5zm440 0h5v1h-5zm45 0h2v2h-2zm-96 1h2v1h-2zm-604 1h5v2h-5zm266 0h3v1h-3zm34 3h3v1h-3zm-190 1h5v2h-5zm354 0h2v2h-2zm-145 1h4v2h-4zm-328 1h4v1h-4zm369 0h5v2h-5zm-344 1h4v2h-4zm306 0h5v1h-5zm227 0h5v1h-5zm-508 3h2v2h-2zm-66 2h3v1h-3zm523 0h3v1h-3zm98 0h5v2h-5zm-477 1h2v2h-2zm316 0h3v1h-3zm231 1h4v2h-4zm-477 1h3v2h-3zm376 0h3v2h-3zm-3 1h5v1h-5zm94 2h2v1h-2zm-373 1h4v1h-4zm146 0h2v1h-2zm-294 1h3v1h-3zm82 1h5v2h-5zm-295 4h4v2h-4zm631 0h5v1h-5zm-46 1h2v2h-2zm2 0h4v2h-4zm-409 1h3v1h-3zm4 0h3v1h-3zm577 0h2v1h-2zm-290 2h2v1h-2zm-204 4h3v2h-3zm-277 4h5v2h-5zm192 0h3v1h-3zm221 2h5v1h-5zm276 1h4v2h-4zm-528 1h5v1h-5zm82 1h2v2h-2zm214 0h3v2h-3zm161 0h5v1h-5zm-377 1h5v2h-5zm-77 1h2v1h-2zm275 0h5v2h-5zm108 0h2v2h-2zm42 1h4v2h-4zm-323 1h5v2h-5zm177 1h3v1h-3zm-315 1h4v2h-4zm613 0h4v1h-4zm16 0h3v2h-3zm-232 2h5v1h-5zm62 0h2v2h-2zm213 0h4v2h-4zm-122 1h3v2h-3zm-310 2h3v1h-3zm-372 1h4v2h-4zm506 0h5v2h-5zm46 0h2v2h-2zm-270 1h4v2h-4zm33 1h2v1h-2zm-110 1h5v2h-5zm251 0h5v1h-5zm177 0h2v1h-2zm-442 1h4v2h-4zm-176 1h3v2h-3zm118 0h4v2h-4zm79 0h4v2h-4zm123 0h2v2h-2zm324 1h4v1h-4zm-473 1h4v2h-4zm409 0h5v1h-5zm-429 1h5v2h-5zm-47 2h2v1h-2zm-74 1h2v2h-2zm306 0h5v1h-5zm136 0h3v2h-3zm180 0h3v1h-3zm-318 1h3v2h-3zm333 0h2v2h-2zm-670 3h4v2h-4zm470 0h3v2h-3zm141 1h2v1h-2zm-331 1h3v1h-3zm373 1h4v2h-4zm-461 1h2v2h-2zm119 0h4v1h-4zm80 0h4v1h-4zm304 0h2v2h-2zm50 0h5v2h-5zm-713 1h3v2h-3zm147 0h2v2h-2zm274 1h3v2h-3zm318 0h5v2h-5zm-30 2h2v1h-2zm-468 1h5v2h-5zm387 0h2v1h-2zm-578 1h5v1h-5zm467 0h2v2h-2zm63 0h4v2h-4zm-229 1h3v2h-3zm-14 1h4v2h-4zm-305 2h4v1h-4zm570 0h3v2h-3zm9 0h3v2h-3zm8 0h3v1h-3zm101 0h2v1h-2zm-683 1h3v2h-3zm326 0h3v1h-3zm45 1h3v1h-3zm139 1h2v1h-2zm-429 2h5v2h-5zm27 1h2v1h-2zm575 0h2v2h-2zm-237 1h4v2h-4zm-531 1h3v2h-3zm511 0h5v1h-5zm4 0h5v1h-5zm291 0h4v2h-4zm-637 2h5v1h-5zm394 3h5v2h-5zm106 0h2v2h-2zm-130 1h3v2h-3zm96 0h5v2h-5zm-533 3h5v2h-5zm-65 3h5v2h-5zm666 1h3v2h-3zm16 0h4v2h-4zm-469 1h2v1h-2zm467 0h4v2h-4zm-124 1h2v2h-2zm-127 2h5v2h-5zm134 0h4v1h-4zm128 0h3v2h-3zm-716 1h4v2h-4zm1 0h4v2h-4zm715 1h2v1h-2zm-563 2h2v2h-2zm639 0h4v2h-4zm-616 2h5v1h-5zm212 0h2v2h-2zm-299 1h2v2h-2zm450 1h4v1h-4zm106 0h2v1h-2zm-148 1h3v1h-3zm102 2h2v2h-2zm150 0h4v2h-4zm-601 1h3v1h-3zm74 0h2v2h-2zm191 0h4v1h-4zm40 0h2v2h-2zm107 0h5v2h-5zm139 0h4v2h-4zm-496 4h2v2h-2zm44 0h5v2h-5zm76 0h5v2h-5zm72 0h5v1h-5zm214 0h2v2h-2zm-436 1h4v2h-4zm170 2h2v2h-2zm0 1h4v2h-4zm-225 2h2v2h-2zm52 0h4v2h-4zm349 0h3v2h-3zm53 0h5v2h-5zm63 0h3v1h-3zm-323 1h4v1h-4zm-143 1h5v2h-5zm279 0h3v1h-3zm223 0h2v1h-2zm97 0h2v2h-2zm-498 1h4v1h-4zm59 1h5v2h-5zm192 2h3v1h-3zm-423 2h5v1h-5zm93 0h4v1h-4zm235 0h5v1h-5zm-108 1h2v2h-2zm3 0h3v2h-3zm41 0h5v2h-5zm-273 1h4v2h-4zm186 0h2v1h-2zm374 1h2v2h-2zm65 0h3v1h-3zm-674 1h5v1h-5zm129 0h3v2h-3zm284 0h5v1h-5zm-169 2h2v1h-2zm251 1h4v2h-4zm-279 1h4v2h-4zm280 1h4v1h-4zm17 0h2v1h-2zm-166 2h5v2h-5zm219 1h5v2h-5zm5 2h5v1h-5zm-411 1h2v1h-2zm-150 3h4v1h-4zm595 0h3v1h-3zm-625 1h2v2h-2zm259 0h2v1h-2zm495 0h2v1h-2zm-172 3h2v1h-2zm176 0h2v1h-2zm-430 1h5v2h-5zm378 0h5v2h-5zm-706 1h2v2h-2zm415 0h4v1h-4zm-179 1h3v2h-3zm244 0h5v1h-5zm21 1h4v2h-4zm-419 1h4v1h-4zm198 1h5v2h-5zm9 0h3v1h-3zm124 0h3v2h-3zm-274 1h5v1h-5zm52 1h3v2h-3zm255 2h5v2h-5zm63 1h5v1h-5zm-516 1h3v1h-3zm332 1h3v2h-3zm117 0h4v2h-4zm240 0h5v1h-5zm-663 1h4v2h-4zm483 0h3v1h-3zm-511 1h2v2h-2zm286 1h3v2h-3zm27 0h5v1h-5zm256 0h2v2h-2zm54 0h3v1h-3zm-65 2h3v1h-3zm-419 1h2v2h-2zm625 1h5v1h-5zm-331 1h2v2h-2zm85 0h5v2h-5zm-470 1h4v2h-4zm662 0h2v1h-2zm-259 5h3v1h-3zm-316 4h3v1h-3zm473 0h2v1h-2zm-521 2h2v2h-2zm387 0h2v2h-2zm14 0h2v2h-2zm95 1h5v1h-5zm-332 1h5v1h-5zm496 0h5v2h-5zm-78 3h4v1h-4zm-202 1h5v2h-5zm22 0h3v2h-3zm-204 1h4v2h-4zm240 0h4v1h-4zm146 0h4v1h-4zm-667 2h2v1h-2zm16 0h2v1h-2zm645 0h4v1h-4zm-219 1h2v1h-2zm198 1h3v2h-3zm-353 1h4v1h-4zm398 2h4v2h-4zm28 0h5v1h-5zm-670 3h2v2h-2zm705 0h5v1h-5zm-649 1h3v2h-3zm402 1h2v2h-2zm217 1h3v2h-3zm-626 1h2v2h-2zm299 1h2v1h-2zm274 0h5v1h-5zm-329 1h4v1h-4zm140 0h2v2h-2zm144 0h3v1h-3zm-588 1h4v1h-4zm725 0h5v1h-5zm-779 1h4v1h-4zm439 0h4v1h-4zm1 0h4v2h-4zm-49 1h3v2h-3zm-321 1h5v2h-5zm101 0h5v2h-5zm-153 1h3v2h-3zm113 0h2v1h-2zm470 1h2v1h-2zm-511 1h5v1h-5zm188 1h3v2h-3zm328 1h2v2h-2zm161 0h2v2h-2zm-715 2h5v2h-5zm451 0h4v2h-4zm-345 1h4v1h-4zm283 0h2v2h-2zm263 0h5v1h-5zm-474 2h4v1h-4zm558 1h4v1h-4zm-692 1h5v2h-5zm-48 1h2v2h-2zm74 1h3v2h-3zm47 0h4v2h-4zm25 0h4v2h-4zm186 0h4v2h-4zm-282 2h3v2h-3zm345 0h2v1h-2zm-80 1h2v2h-2zm-360 2h5v2h-5zm6 0h3v2h-3zm628 1h4v1h-4zm-441 4h4v2h-4zm195 0h4v1h-4zm34 0h5v2h-5zm131 0h2v1h-2zm72 0h5v1h-5zm-172 2h5v1h-5zm92 1h3v2h-3zm111 0h5v2h-5zm-490 1h4v2h-4zm205 0h4v2h-4zm-244 1h2v2h-2zm423 0h3v2h-3zm39 0h3v1h-3zm-550 2h5v2h-5zm433 0h5v2h-5zm-427 3h3v2h-3zm495 0h3v1h-3zm-285 1h5v1h-5zm16 0h5v1h-5zm-280 2h3v1h-3zm154 0h5v1h-5zm32 1h4v1h-4zm428 0h5v1h-5zm-464 1h2v2h-2zm98 1h3v2h-3zm-64 1h2v1h-2zm63 0h3v2h-3zm-85 1h5v2h-5zm493 0h5v1h-5zm-332 1h5v2h-5zm-309 2h2v2h-2zm206 0h5v2h-5zm218 0h4v1h-4zm32 0h3v1h-3zm219 0h5v1h-5zm-545 2h5v1h-5zm-49 2h4v2h-4zm375 0h5v1h-5zm-331 1h3v2h-3zm516 0h2v1h-2zm-231 3h5v2h-5zm-67 2h5v1h-5zm219 0h5v2h-5zm-56 2h4v2h-4zm-412 1h2v2h-2zm484 0h4v2h-4zm86 0h5v2h-5zm-160 2h2v2h-2zm-449 1h4v2h-4zm102 0h5v2h-5zm175 0h2v1h-2zm-311 1h5v2h-5zm-26 2h5v1h-5zm491 0h4v2h-4zm-213 1h5v2h-5zm281 0h3v2h-3zm-349 2h3v1h-3zm419 0h5v2h-5zm128 0h2v2h-2zm-573 1h3v2h-3zm484 0h4v2h-4zm-641 1h2v1h-2zm567 1h3v2h-3zm-488 1h5v1h-5zm445 2h4v1h-4zm-560 1h4v1h-4zm813 0h3v2h-3zm-545 1h5v1h-5zm-158 1h3v2h-3zm24 2h2v1h-2zm546 0h4v2h-4zm-584 1h3v2h-3zm131 0h3v2h-3zm547 0h3v2h-3zm-223 2h3v2h-3zm-465 1h3v2h-3zm199 0h2v1h-2zm466 0h3v1h-3zm2 0h5v2h-5zm-193 1h5v1h-5zm18 0h3v1h-3zm-432 1h2v2h-2zm395 0h4v2h-4zm-502 1h3v1h-3zm242 2h2v1h-2zm72 0h2v2h-2zm333 0h3v2h-3zm-250 1h5v2h-5zm375 0h2v1h-2zm-450 1h5v1h-5zm317 0h3v2h-3zm-239 2h5v1h-5zm-192 2h3v1h-3zm19 1h2v2h-2zm375 0h5v1h-5zm137 0h3v1h-3zm-36 2h2v2h-2zm66 0h5v1h-5zm-242 1h3v2h-3zm-544 1h4v2h-4zm760 2h2v2h-2zm30 0h5v1h-5zm-495 1h2v1h-2zm226 0h5v2h-5zm96 1h3v2h-3zm-551 1h5v1h-5zm98 2h4v1h-4zm54 0h4v1h-4zm410 1h3v1h-3zm-6 1h4v1h-4zm-330 3h5v2h-5zm-44 1h5v2h-5zm442 0h4v2h-4zm-708 2h2v1h-2zm15 0h5v1h-5zm447 0h3v1h-3zm10 1h4v1h-4zm18 0h5v1h-5zm-396 1h3v2h-3zm155 1h5v1h-5zm257 0h3v1h-3zm127 0h3v2h-3zm120 1h2v2h-2zm-738 2h4v2h-4zm50 0h5v1h-5zm723 1h2v2h-2zm-306 1h4v1h-4zm265 0h3v2h-3zm45 0h2v2h-2zm-613 1h3v2h-3zm562 0h5v1h-5zm-407 1h3v1h-3zm183 0h5v1h-5zm198 2h3v2h-3zm-386 1h5v2h-5zm-54 2h2v1h-2zm-194 1h3v1h-3zm312 0h5v1h-5zm201 0h2v2h-2zm78 0h3v1h-3zm64 2h2v1h-2zm52 1h2v1h-2zm-630 1h5v2h-5zm-47 3h3v2h-3zm480 3h2v2h-2zm-244 1h5v1h-5zm383 0h2v2h-2zm-342 7h2v2h-2zm-194 3h5v2h-5zm-81 1h2v2h-2zm566 0h2v1h-2zm107 0h5v1h-5zm-719 1h2v1h-2zm225 1h4v2h-4zm187 0h5v1h-5zm-392 1h4v2h-4zm348 0h4v2h-4zm-310 2h4v1h-4zm-26 2h2v1h-2zm340 0h3v2h-3zm-406 1h2v2h-2zm496 0h5v1h-5zm63 3h3v2h-3zm158 0h4v1h-4zm-431 1h2v1h-2zm-185 1h5v2h-5zm330 0h4v2h-4zm19 1h4v2h-4zm113 0h4v2h-4zm12 1h3v2h-3zm6 0h3v2h-3zm-148 1h5v2h-5zm141 1h5v2h-5zm-96 1h3v2h-3zm-20 1h5v2h-5zm-327 5h2v1h-2zm43 1h2v2h-2zm74 2h4v1h-4zm518 0h2v2h-2zm-544 3h4v2h-4zm199 0h3v2h-3zm337 0h5v1h-5zm-359 1h5v2h-5zm38 0h5v1h-5zm86 0h3v2h-3zm-484 2h3v2h-3zm645 0h4v2h-4zm-686 1h2v1h-2zm53 0h3v1h-3zm710 0h4v1h-4zm-177 1h4v2h-4zm39 1h3v1h-3zm-554 2h4v2h-4zm113 0h2v2h-2zm-168 1h4v2h-4zm469 0h3v2h-3zm-181 1h4v2h-4zm162 0h3v2h-3zm308 1h4v2h-4zm-680 2h4v2h-4zm88 0h2v2h-2zm267 0h3v1h-3zm-199 1h5v2h-5zm80 0h5v1h-5zm-270 2h3v2h-3zm125 0h2v2h-2zm53 0h5v1h-5zm-85 1h5v2h-5zm352 0h3v2h-3zm211 0h3v2h-3zm33 0h3v2h-3zm-771 1h5v2h-5zm140 2h5v2h-5zm54 0h4v1h-4zm228 0h4v1h-4zm4 2h5v1h-5zm-318 2h3v2h-3zm575 1h3v2h-3zm8 0h2v2h-2zm-223 1h5v2h-5zm33 0h3v2h-3zm256 0h4v2h-4zm-109 1h4v2h-4zm-560 1h3v2h-3zm520 0h4v2h-4zm-310 4h2v2h-2zm110 0h4v2h-4zm-316 1h3v2h-3zm96 1h4v2h-4zm139 0h5v1h-5zm-314 3h3v2h-3zm662 0h5v1h-5zm-396 1h5v2h-5zm469 0h2v1h-2zm-5 1h3v1h-3zm-602 2h3v2h-3zm417 0h4v2h-4zm-352 1h3v1h-3zm-215 3h5v1h-5zm557 0h4v1h-4zm-449 1h3v2h-3zm237 1h5v1h-5zm-125 1h2v1h-2zm49 0h4v1h-4zm207 0h3v2h-3zm45 0h4v1h-4zm79 0h4v1h-4zm-580 1h5v2h-5zm227 0h3v2h-3zm540 0h4v2h-4zm-34 2h4v1h-4zm-559 1h3v1h-3zm349 0h2v2h-2zm-241 1h2v1h-2zm446 1h4v2h-4zm-286 1h3v1h-3zm-74 1h4v2h-4zm358 0h4v2h-4zm-656 1h2v1h-2zm140 0h5v2h-5zm217 0h2v2h-2zm142 0h4v2h-4zm141 0h3v2h-3zm-350 1h5v2h-5zm338 1h5v1h-5zm-427 2h2v1h-2zm170 0h3v2h-3zm155 0h3v1h-3zm-76 1h2v2h-2zm74 0h3v1h-3zm-52 1h5v1h-5zm234 0h4v1h-4zm12 0h2v1h-2zm-794 1h4v2h-4zm505 0h3v2h-3zm-458 2h4v2h-4zm76 0h2v2h-2zm369 1h5v2h-5zm-371 1h2v2h-2zm377 1h3v2h-3zm-115 1h4v2h-4zm339 1h2v2h-2zm66 0h2v1h-2zm-624 1h2v1h-2zm416 0h3v1h-3zm173 1h4v2h-4zm-156 1h4v2h-4zm-606 2h4v1h-4zm611 0h5v1h-5zm-116 1h5v1h-5zm-347 1h5v1h-5zm204 0h2v2h-2zm179 1h3v1h-3zm-197 1h2v2h-2zm-199 1h5v2h-5zm272 0h3v2h-3zm-302 2h5v2h-5zm3 0h2v2h-2zm678 0h3v2h-3zm-385 2h4v2h-4zm45 0h4v1h-4zm342 0h4v1h-4zm-122 1h3v2h-3zm13 0h5v2h-5zm-314 2h4v2h-4zm-21 2h4v1h-4zm265 0h5v2h-5zm-536 2h4v1h-4zm3 0h3v2h-3zm581 0h3v2h-3zm147 0h4v2h-4zm-800 1h2v1h-2zm273 1h5v2h-5zm385 0h3v1h-3zm110 1h3v1h-3zm-126 4h3v2h-3zm99 0h2v2h-2zm45 2h4v1h-4zm1 0h3v2h-3zm-765 1h2v2h-2zm220 0h2v2h-2zm-13 1h5v2h-5zm-242 1h3v1h-3zm209 0h4v2h-4zm19 0h4v2h-4zm291 0h3v2h-3zm-11 1h5v2h-5zm-4 1h5v2h-5zm-256 1h3v1h-3zm-46 1h5v2h-5zm87 0h2v2h-2zm76 0h2v1h-2zm140 0h3v1h-3zm76 2h4v1h-4zm50 0h4v1h-4zm-453 1h3v1h-3zm310 1h5v1h-5zm19 0h3v1h-3zm-487 1h4v2h-4zm2 1h2v2h-2zm131 0h2v1h-2zm408 0h4v1h-4zm-61 1h3v1h-3zm-284 2h2v2h-2zm449 0h5v1h-5zm-124 2h3v1h-3zm-150 1h4v1h-4zm49 0h2v1h-2zm-319 1h3v2h-3zm410 0h5v2h-5zm260 0h2v2h-2zm8 1h5v2h-5zm-782 1h5v1h-5zm713 0h4v1h-4zm-615 1h3v2h-3zm262 0h5v1h-5zm372 1h5v2h-5zm-382 2h2v2h-2zm159 0h3v2h-3zm99 1h4v1h-4zm-530 1h4v1h-4zm10 1h2v2h-2zm707 0h3v2h-3zm-691 1h3v2h-3zm204 0h4v1h-4zm107 0h2v2h-2zm132 0h4v1h-4zm-484 1h3v2h-3zm472 1h2v2h-2zm-429 1h4v1h-4zm177 0h5v2h-5zm344 0h2v1h-2zm3 0h2v2h-2zm-472 1h4v2h-4zm155 0h5v2h-5zm201 0h5v1h-5zm-487 3h3v1h-3zm476 3h3v1h-3zm-323 1h5v2h-5zm-21 1h3v1h-3zm442 1h3v1h-3zm-483 1h2v2h-2zm257 0h5v2h-5zm-219 1h3v1h-3zm525 1h2v1h-2zm-429 1h2v1h-2zm192 0h4v1h-4zm59 0h3v2h-3zm253 0h5v1h-5zm-568 1h4v2h-4zm95 0h5v1h-5zm-101 2h5v2h-5zm531 0h3v1h-3zm-339 1h5v2h-5zm-244 1h4v2h-4zm536 0h2v1h-2zm-175 2h2v1h-2zm-137 1h2v2h-2zm-314 1h3v2h-3zm67 0h4v1h-4zm234 0h5v1h-5zm94 0h2v2h-2zm-17 1h2v1h-2zm3 0h4v2h-4zm-160 3h5v2h-5zm39 0h2v1h-2zm-302 1h3v1h-3zm128 0h3v1h-3zm533 0h5v2h-5zm62 0h2v2h-2zm-363 3h5v1h-5zm100 0h3v1h-3zm87 1h5v2h-5zm-240 1h4v1h-4zm3 0h4v2h-4zm180 0h4v1h-4zm-299 1h5v2h-5zm19 1h5v1h-5zm394 0h5v2h-5zm83 0h3v2h-3zm93 1h4v2h-4zm-525 1h2v2h-2zm112 0h4v1h-4zm151 0h5v1h-5zm-467 1h4v1h-4zm604 0h3v1h-3zm-515 3h4v2h-4zm639 0h5v2h-5zm-690 2h5v1h-5zm587 0h5v1h-5zm-562 1h4v2h-4zm523 0h3v1h-3zm-135 2h3v2h-3zm160 0h5v2h-5zm-316 1h4v2h-4zm369 0h5v2h-5zm-399 1h2v2h-2zm134 1h5v2h-5zm317 0h3v2h-3zm-539 1h2v1h-2zm471 0h3v1h-3zm-396 1h4v1h-4zm26 1h3v2h-3zm232 0h2v2h-2zm29 2h3v1h-3zm39 0h4v1h-4zm-564 1h4v1h-4zm692 0h3v2h-3zm-244 1h5v2h-5zm109 1h4v1h-4zm49 0h5v1h-5zm-580 1h5v2h-5zm63 0h3v2h-3zm477 0h2v2h-2z"/><path fill="#07075b" d="M129 21h4v1h-4zm258 0h2v2h-2zm374 2h5v1h-5zm-440 1h2v2h-2zm1 2h3v2h-3zm380 1h5v2h-5zm-582 1h4v2h-4zm631 0h2v2h-2zm-246 1h5v2h-5zm-300 5h3v2h-3zm577 0h2v1h-2zm-109 4h5v1h-5zm-66 1h2v2h-2zm-521 1h2v2h-2zm705 1h2v1h-2zm-763 1h3v1h-3zm99 5h5v1h-5zm84 1h4v1h-4zm138 0h2v2h-2zm-15 2h5v2h-5zm149 1h4v1h-4zm196 0h4v2h-4zm61 0h4v1h-4zm-257 2h5v1h-5zm100 0h4v2h-4zm40 0h4v1h-4zm-258 1h3v2h-3zm91 2h5v2h-5zm-276 1h5v2h-5zm534 2h2v1h-2zm-29 3h5v2h-5zm-185 1h2v2h-2zm-406 1h5v2h-5zm30 0h4v1h-4zm375 4h5v1h-5zm-2 2h5v2h-5zm270 2h4v2h-4zm-124 3h5v1h-5zm-271 5h3v2h-3zm278 0h2v1h-2zm-573 1h5v1h-5zm124 1h5v2h-5zm-112 1h5v1h-5zm603 2h3v2h-3zm-255 1h5v2h-5zm6 0h2v2h-2zm163 1h3v1h-3zm-73 2h3v1h-3zm-472 1h4v2h-4zm445 1h5v2h-5zm-53 1h4v1h-4zm212 0h2v1h-2zm-638 3h4v2h-4zm147 0h3v2h-3zm-95 1h4v1h-4zm39 0h3v1h-3zm124 0h3v1h-3zm-99 2h3v2h-3zm-65 2h5v2h-5zm-27 1h3v2h-3zm196 2h3v1h-3zm338 2h4v1h-4zm-66 3h4v1h-4zm-361 1h2v1h-2zm352 0h4v2h-4zm74 0h2v2h-2zm124 1h3v1h-3zm-402 1h5v1h-5zm-24 1h2v1h-2zm164 0h2v2h-2zm-395 2h3v2h-3zm166 1h5v2h-5zm312 1h3v1h-3zm147 5h2v2h-2zm-609 1h2v1h-2zm202 0h4v1h-4zm161 2h5v1h-5zm-173 1h4v1h-4zm14 2h4v2h-4zm379 3h4v1h-4zm-417 1h2v2h-2zm-84 4h2v1h-2zm333 0h2v1h-2zm292 0h4v1h-4zm-53 1h2v1h-2zm-499 1h4v1h-4zm170 1h4v1h-4zm-73 1h2v2h-2zm110 1h5v2h-5zm-165 2h2v1h-2zm189 0h4v1h-4zm-199 1h5v2h-5zm360 2h5v2h-5zm200 1h2v1h-2zm-748 1h2v2h-2zm20 2h4v1h-4zm-50 1h5v1h-5zm474 1h2v2h-2zm171 1h3v1h-3zm-450 1h2v2h-2zm86 2h3v1h-3zm401 0h4v2h-4zm-475 7h2v2h-2zm57 1h5v1h-5zm-244 3h4v1h-4zm639 0h3v1h-3zm22 0h4v1h-4zm-271 1h2v1h-2zm-73 1h2v2h-2zm112 0h4v1h-4zm-136 1h3v1h-3zm-271 2h2v2h-2zm138 0h4v2h-4zm23 0h5v1h-5zm460 1h5v1h-5zm-605 2h3v2h-3zm-71 1h5v1h-5zm146 0h4v2h-4zm-139 1h4v1h-4zm265 0h2v1h-2zm423 0h5v1h-5zm-512 1h3v1h-3zm7 0h3v2h-3zm210 3h3v1h-3zm-260 2h3v1h-3zm343 0h4v2h-4zm-5 5h2v2h-2zm237 0h5v2h-5zm-380 1h2v2h-2zm350 1h5v2h-5zm-551 1h5v2h-5zm322 0h3v2h-3zm30 2h4v1h-4zm-80 1h4v2h-4zm103 1h3v1h-3zm-185 2h2v1h-2zm283 0h2v2h-2zm-344 7h2v2h-2zm358 0h5v1h-5zm149 1h5v2h-5zm-704 1h2v2h-2zm114 1h2v2h-2zm140 1h3v1h-3zm226 0h4v1h-4zm93 1h3v1h-3zm53 2h4v2h-4zm-268 2h2v2h-2zm35 5h3v2h-3zm-35 1h3v1h-3zm-315 1h5v1h-5zm485 0h3v2h-3zm-513 1h3v2h-3zm694 0h2v1h-2zm-151 1h5v2h-5zm4 0h3v1h-3zm34 1h3v1h-3zm-168 3h2v2h-2zm245 1h5v1h-5zm-105 1h4v2h-4zm-291 1h3v1h-3zm312 0h2v2h-2zm42 3h4v2h-4zm-473 1h4v2h-4zm421 0h5v1h-5zm45 0h4v2h-4zm6 0h5v1h-5zm17 0h5v1h-5zm-714 4h2v1h-2zm148 0h4v1h-4zm-88 1h5v2h-5zm86 2h4v2h-4zm430 0h3v1h-3zm16 1h3v2h-3zm-221 1h3v2h-3zm169 0h5v2h-5zm-444 1h3v2h-3zm441 0h2v1h-2zm-212 4h4v2h-4zm-235 1h3v2h-3zm-77 2h5v2h-5zm114 1h4v1h-4zm-94 2h4v2h-4zm23 0h2v2h-2zm58 1h4v2h-4zm524 0h3v1h-3zm-527 8h4v1h-4zm322 0h3v2h-3zm-414 3h3v2h-3zm70 1h2v2h-2zm661 0h5v2h-5zm-342 1h5v2h-5zm-229 1h2v1h-2zm372 2h4v2h-4zm-553 2h3v1h-3zm106 0h4v2h-4zm283 0h4v2h-4zm-197 4h3v2h-3zm517 0h5v2h-5zm-720 1h3v2h-3zm574 0h5v2h-5zm-32 2h4v1h-4zm-179 2h2v2h-2zm38 0h5v2h-5zm144 0h2v1h-2zm119 0h3v1h-3zm18 1h4v2h-4zm-673 1h3v2h-3zm456 4h3v1h-3zm-96 2h2v2h-2zm259 0h4v2h-4zm-396 1h2v2h-2zm65 1h4v2h-4zm-199 5h2v2h-2zm400 0h5v2h-5zm-21 1h4v2h-4zm-283 2h3v1h-3zm344 0h4v2h-4zm262 1h4v2h-4zm-241 1h2v1h-2zm120 1h3v2h-3zm61 0h5v2h-5zm-535 3h2v2h-2zm316 0h5v2h-5zm20 1h2v2h-2zm-251 1h2v2h-2zm-24 2h3v2h-3zm130 0h5v1h-5zm-360 2h3v2h-3zm97 0h3v2h-3zm-16 1h2v2h-2zm334 2h4v2h-4zm-17 1h5v2h-5zm-76 1h4v2h-4zm349 0h3v2h-3zm90 1h4v1h-4zm-524 1h3v2h-3zm392 0h3v2h-3zm66 0h2v2h-2zm-171 1h3v2h-3zm-123 2h2v1h-2zm23 0h5v1h-5zm236 0h3v2h-3zm4 0h5v2h-5zm-154 1h4v2h-4zm-407 3h5v2h-5zm319 3h3v1h-3zm-91 2h2v2h-2zm186 0h4v1h-4zm-501 1h5v2h-5zm421 0h2v2h-2zm31 0h5v2h-5zm-54 1h2v1h-2zm-242 1h4v2h-4zm41 1h5v2h-5zm-229 1h4v1h-4zm140 1h5v1h-5zm85 0h4v2h-4zm-26 2h5v2h-5zm-92 1h3v2h-3zm566 0h3v2h-3zm-610 2h2v2h-2zm429 2h5v2h-5zm-214 2h2v1h-2zm-85 3h2v2h-2zm9 1h3v2h-3zm61 1h5v1h-5zm133 2h5v2h-5zm202 2h3v1h-3zm178 0h3v2h-3zm-321 2h4v2h-4zm298 1h2v1h-2zm-122 3h4v1h-4zm-105 6h3v2h-3zm-163 1h2v2h-2zm282 0h2v2h-2zm-99 2h2v1h-2zm-210 1h4v2h-4zm-19 1h3v2h-3zm-119 1h5v2h-5zm159 1h5v1h-5zm42 0h5v1h-5zm371 1h3v1h-3zm-190 1h4v2h-4zm-43 1h2v2h-2zm-466 1h5v1h-5zm226 0h4v2h-4zm-306 1h2v1h-2zm87 1h2v1h-2zm204 2h2v1h-2zm365 1h4v2h-4zm-513 2h2v1h-2zm58 0h5v1h-5zm411 0h5v1h-5zm-430 1h3v1h-3zm544 0h4v2h-4zm31 0h4v1h-4zm-776 1h2v1h-2zm321 0h3v2h-3zm116 1h2v1h-2zm-308 1h4v2h-4zm135 3h2v1h-2zm41 5h4v2h-4zm-228 3h5v2h-5zm231 0h4v1h-4zm370 0h4v2h-4zm-451 2h4v2h-4zm142 0h5v2h-5zm-211 1h2v2h-2zm254 0h4v1h-4zm302 0h5v2h-5zm-619 1h2v2h-2zm-81 2h5v2h-5zm190 0h2v1h-2zm224 2h4v1h-4zm253 3h5v2h-5zm-646 3h4v1h-4zm289 1h5v2h-5zm-67 5h3v1h-3zm203 0h3v2h-3zm-197 2h2v1h-2zm-199 1h2v2h-2zm253 0h3v2h-3zm-31 2h3v2h-3zm-227 3h3v1h-3zm30 1h5v1h-5zm153 1h3v2h-3zm154 0h4v2h-4zm-129 2h5v2h-5zm346 0h2v1h-2zm-10 2h4v1h-4zm147 2h5v1h-5zm29 1h5v1h-5zm-413 1h5v1h-5zm18 3h5v2h-5zm193 0h2v1h-2zm-134 1h3v2h-3zm-32 2h2v2h-2zm107 1h4v1h-4zm-218 3h5v1h-5zm-44 3h2v2h-2zm-40 2h5v1h-5zm131 2h3v1h-3zm27 2h2v2h-2zm-178 1h4v2h-4zm587 0h2v2h-2zm-552 1h4v1h-4zm10 0h5v2h-5zm392 0h4v2h-4zm79 0h3v2h-3zm80 0h5v1h-5zm-106 3h2v2h-2zm78 1h3v2h-3zm21 1h5v2h-5zm18 5h2v1h-2zm-631 2h5v1h-5zm119 2h5v1h-5zm-291 1h2v1h-2zm643 0h5v2h-5zm143 0h3v2h-3zm-786 3h5v1h-5zm222 0h3v1h-3zm81 0h3v2h-3zm-126 1h5v2h-5zm111 3h3v1h-3zm379 0h2v1h-2zm-149 1h3v2h-3zm-499 1h5v2h-5zm430 1h4v1h-4zm157 0h5v2h-5zm-338 2h2v2h-2zm-92 2h2v1h-2zm286 0h5v2h-5zm-426 1h5v1h-5zm194 0h4v1h-4zm429 3h3v1h-3zm-72 5h2v2h-2zm-354 2h5v2h-5zm25 0h2v2h-2zm191 2h3v1h-3zm-176 1h5v2h-5zm-1 2h5v1h-5zm-140 2h3v1h-3zm79 0h4v1h-4zm406 1h3v1h-3zm-455 1h3v2h-3zm355 0h5v2h-5zm260 1h2v2h-2zm-732 1h4v1h-4zm57 0h4v1h-4zm549 0h2v1h-2zm67 0h2v2h-2zm-423 2h5v2h-5zm202 1h5v1h-5zm81 0h3v1h-3zm-456 1h5v1h-5zm553 0h3v2h-3zm25 5h3v2h-3zm33 0h5v2h-5zm29 0h4v2h-4zm-656 1h3v1h-3zm247 1h5v2h-5zm-287 3h3v2h-3zm121 0h4v2h-4zm541 0h4v2h-4zm-425 2h4v1h-4zm-292 5h3v2h-3zm676 1h3v1h-3zm55 0h2v2h-2zm-317 2h4v1h-4zm-90 1h2v1h-2zm41 3h4v1h-4zm325 2h4v1h-4zm47 1h3v2h-3zm-457 2h3v2h-3zm-158 1h3v1h-3zm341 0h3v2h-3zm243 0h3v2h-3zm-471 4h2v2h-2zm2 0h3v1h-3zm472 0h5v1h-5zm-620 1h3v2h-3zm384 1h5v2h-5zm-217 2h4v1h-4zm289 3h4v2h-4zm-248 1h3v2h-3zm98 0h4v1h-4zm-178 1h4v2h-4zm308 3h4v1h-4zm-345 1h3v1h-3zm64 0h4v1h-4zm368 2h3v1h-3zm-238 2h5v1h-5zm85 0h5v1h-5zm-302 1h3v2h-3zm188 1h3v1h-3zm316 0h5v1h-5zm6 0h4v1h-4zm-553 3h5v1h-5zm252 0h2v1h-2zm362 0h2v2h-2zm-436 4h5v1h-5zm90 3h3v1h-3zm176 0h2v1h-2zm141 2h3v2h-3zm3 1h4v1h-4zm-664 1h2v1h-2zm753 0h4v1h-4zm-123 1h2v2h-2zm-648 1h4v1h-4zm164 1h4v2h-4zm574 0h3v1h-3zm-579 1h5v1h-5zm539 0h4v2h-4zm-230 1h5v1h-5zm-383 1h2v2h-2zm493 0h3v1h-3zm-109 2h2v2h-2zm-450 2h3v1h-3zm298 0h2v2h-2zm352 2h2v1h-2zm-425 1h3v2h-3zm-239 2h3v2h-3zm48 1h4v2h-4zm511 0h5v2h-5zm-29 1h5v1h-5zm-473 1h4v1h-4zm262 1h5v2h-5zm325 0h4v2h-4zm-620 2h2v2h-2zm194 0h5v2h-5zm-123 3h4v1h-4zm207 2h3v2h-3zm66 0h5v2h-5zm-151 1h3v2h-3zm218 0h4v1h-4zm-17 2h5v2h-5zm1 0h5v2h-5zm-69 5h5v2h-5zm-323 1h2v2h-2zm70 1h4v2h-4zm8 0h2v2h-2zm-72 3h5v1h-5zm117 0h4v2h-4zm-175 1h3v2h-3zm141 1h5v2h-5zm-34 2h3v1h-3zm432 1h5v1h-5zm-180 1h3v2h-3zm86 3h3v1h-3zm-74 2h5v2h-5zm-334 3h3v2h-3zm601 5h4v2h-4zm112 0h2v1h-2zm-615 5h4v1h-4zm621 0h5v1h-5zm-458 2h4v1h-4zm236 0h2v2h-2zm-49 2h5v2h-5zm96 0h5v2h-5zm41 0h3v1h-3zm-530 3h2v1h-2zm167 0h2v2h-2zm61 1h2v2h-2zm174 1h2v1h-2zm-150 1h3v1h-3zm-146 1h5v2h-5zm-154 2h2v2h-2zm659 4h3v2h-3zm-699 1h4v1h-4zm376 6h5v1h-5zm-21 1h2v2h-2zm-157 1h4v1h-4zm207 0h5v2h-5zm374 1h5v2h-5zm-365 1h2v2h-2zm-385 2h4v1h-4zm41 2h4v1h-4zm335 1h2v1h-2zm13 0h4v1h-4zm-232 1h3v1h-3zm456 1h3v1h-3zm-358 4h4v2h-4zm201 3h2v2h-2zm-474 2h4v2h-4zm219 1h3v2h-3zm-39 1h5v1h-5zm295 2h5v2h-5zm-401 1h2v2h-2zm232 0h4v1h-4zm-148 1h3v2h-3zm8 0h2v2h-2zm560 0h4v2h-4zm-750 3h5v2h-5zm564 2h3v2h-3zm-323 3h3v2h-3zm-75 2h3v2h-3zm265 0h2v2h-2zm-220 1h5v2h-5zm-62 1h4v1h-4zm581 0h4v1h-4zm-441 1h4v1h-4zm-263 2h3v1h-3zm220 5h2v2h-2zm71 1h5v1h-5zm51 1h3v2h-3zm-81 1h4v2h-4zm159 0h2v2h-2zm242 1h5v1h-5zm-116 5h5v2h-5zm-305 1h3v1h-3zm4 2h4v2h-4zm370 0h5v1h-5zm-160 4h4v2h-4zm-55 2h5v1h-5zm-163 1h3v1h-3zm366 3h2v2h-2zm-477 1h5v1h-5zm412 1h3v2h-3zm-337 2h5v2h-5zm419 1h4v2h-4zm-353 3h2v2h-2zm341 1h2v2h-2zm-239 3h4v2h-4zm-130 3h4v2h-4zm311 0h2v1h-2zm125 0h4v2h-4zm80 0h4v2h-4zm-728 1h4v1h-4zm49 0h4v2h-4zm481 3h4v2h-4zm-78 1h3v2h-3zm68 0h2v1h-2zm27 0h3v2h-3zm135 2h2v2h-2zm-305 1h4v2h-4zm-71 2h4v2h-4zm355 5h5v1h-5zm-350 2h4v2h-4zm-251 8h2v2h-2zm174 1h5v2h-5zm120 1h2v1h-2z"/><path fill="#080869" d="M481 22h5v2h-5zm-357 4h5v2h-5zm369 3h5v1h-5zm-334 1h5v1h-5zm152 0h3v2h-3zm335 0h2v1h-2zm-410 2h4v2h-4zm331 0h3v2h-3zm-439 2h2v1h-2zm140 2h5v1h-5zm-218 10h3v1h-3zm575 0h3v2h-3zm-497 1h4v2h-4zm177 0h5v1h-5zm189 0h2v2h-2zm317 1h5v2h-5zm-524 1h5v2h-5zm374 1h3v1h-3zm-219 3h3v2h-3zm353 1h3v1h-3zm-779 1h3v2h-3zm26 1h4v1h-4zm85 0h3v1h-3zm610 2h5v2h-5zm-145 1h2v2h-2zm-497 10h4v1h-4zm584 3h4v1h-4zm94 2h5v2h-5zm-569 3h4v2h-4zm419 2h5v2h-5zm-423 1h4v2h-4zm524 7h2v2h-2zm-68 2h3v2h-3zm-199 3h5v2h-5zm60 0h4v1h-4zm239 6h3v1h-3zm-208 2h4v2h-4zm226 3h2v1h-2zm-134 2h2v2h-2zm-43 2h3v2h-3zm-132 6h2v2h-2zm-273 1h2v2h-2zm-97 1h5v1h-5zm182 1h2v1h-2zm454 3h4v1h-4zm-501 2h5v2h-5zm155 0h3v2h-3zm150 2h5v1h-5zm131 2h5v2h-5zm61 2h3v2h-3zm7 0h2v2h-2zm-27 4h3v1h-3zm-483 7h2v1h-2zm139 2h4v2h-4zm207 3h2v1h-2zm-484 4h4v2h-4zm569 1h5v2h-5zm-357 2h5v1h-5zm385 2h4v2h-4zm-591 3h2v1h-2zm-60 1h4v1h-4zm364 2h5v1h-5zm-263 1h3v1h-3zm173 1h5v1h-5zm24 1h2v1h-2zm365 3h4v2h-4zm-117 2h4v2h-4zm50 4h4v1h-4zm81 1h3v2h-3zm8 2h2v1h-2zm-569 1h4v2h-4zm584 1h2v2h-2zm-228 1h4v1h-4zm-230 7h4v2h-4zm38 4h4v2h-4zm-18 4h2v1h-2zm-145 2h4v2h-4zm373 2h5v1h-5zm219 1h3v2h-3zm12 0h5v2h-5zm-98 1h2v2h-2zm-560 2h3v1h-3zm247 0h3v1h-3zm11 3h5v1h-5zm18 5h2v2h-2zm299 0h2v2h-2zm-373 5h3v2h-3zm206 3h3v2h-3zm107 4h4v2h-4zm-49 1h4v1h-4zm-203 1h4v2h-4zm168 4h2v1h-2zm258 1h5v2h-5zm-637 1h4v2h-4zm430 0h2v2h-2zm-256 2h3v2h-3zm381 4h4v2h-4zm-226 10h5v2h-5zm-306 9h5v2h-5zm566 0h3v2h-3zm-215 1h4v2h-4zm72 0h5v1h-5zm184 1h3v1h-3zm-59 2h4v2h-4zm-22 4h3v2h-3zm95 0h4v2h-4zm-12 1h2v1h-2zm-258 3h3v1h-3zm-168 5h2v2h-2zm74 0h2v2h-2zm159 0h2v1h-2zm-114 2h4v2h-4zm-442 3h2v1h-2zm562 2h4v1h-4zm-106 6h4v2h-4zm-8 2h5v1h-5zm40 2h3v1h-3zm149 3h3v1h-3zm-532 1h2v1h-2zm399 1h2v1h-2zm-441 1h4v1h-4zm570 3h3v1h-3zm-311 2h4v2h-4zm241 1h2v1h-2zm-544 1h4v2h-4zm314 4h2v2h-2zm-213 2h5v2h-5zm-58 1h4v1h-4zm582 1h5v1h-5zm-667 8h4v2h-4zm376 1h3v2h-3zm-274 3h3v2h-3zm-28 5h2v2h-2zm-15 1h2v2h-2zm188 2h4v2h-4zm110 1h3v2h-3zm212 2h4v2h-4zm-327 3h4v2h-4zm412 3h3v2h-3zm147 1h3v2h-3zm-645 5h3v2h-3zm439 4h3v1h-3zm69 2h2v2h-2zm-252 1h3v2h-3zm6 1h4v2h-4zm-133 6h4v2h-4zm-234 1h4v2h-4zm662 2h2v2h-2zm-501 2h4v2h-4zm245 5h4v2h-4zm119 2h5v2h-5zm213 0h4v2h-4zm-561 5h4v2h-4zm313 0h4v2h-4zm-547 1h4v1h-4zm210 0h5v2h-5zm20 0h3v1h-3zm-86 1h5v2h-5zm309 1h2v2h-2zm-303 9h5v2h-5zm397 1h5v1h-5zm36 2h3v1h-3zm187 2h4v2h-4zm-42 3h2v1h-2zm-535 1h2v2h-2zm-152 4h3v1h-3zm339 1h3v2h-3zm314 4h2v1h-2zm-288 4h3v2h-3zm273 0h5v1h-5zm-438 4h2v1h-2zm-23 2h2v2h-2zm-56 2h2v1h-2zm54 1h4v2h-4zm-151 2h3v2h-3zm614 1h3v1h-3zm50 1h4v2h-4zm-598 4h2v2h-2zm194 0h4v1h-4zm209 4h3v2h-3zm-510 2h4v1h-4zm413 0h3v1h-3zm193 0h4v1h-4zm181 2h4v1h-4zm-176 4h5v2h-5zm-481 2h3v2h-3zm155 0h2v1h-2zm-147 5h5v2h-5zm299 0h2v1h-2zm-321 5h4v2h-4zm212 0h2v1h-2zm97 0h4v1h-4zm-360 2h4v2h-4zm495 1h2v2h-2zm-215 1h5v1h-5zm-25 4h2v1h-2zm172 1h5v2h-5zm-356 8h2v2h-2zm453 6h3v1h-3zm-194 2h4v1h-4zm-304 1h5v2h-5zm558 10h5v2h-5zm-506 3h3v2h-3zm-54 4h3v1h-3zm617 0h4v2h-4zm-2 1h3v1h-3zm-717 1h5v1h-5zm48 1h4v1h-4zm715 0h5v1h-5zm-556 3h3v1h-3zm-101 2h3v2h-3zm296 2h4v1h-4zm-88 3h3v2h-3zm163 4h3v2h-3zm-238 4h2v1h-2zm146 2h3v1h-3zm195 1h3v1h-3zm-448 2h5v1h-5zm-126 2h4v1h-4zm155 3h2v1h-2zm617 3h2v2h-2zm-389 1h5v2h-5zm46 2h3v2h-3zm-397 6h2v2h-2zm471 3h3v2h-3zm-191 2h2v2h-2zm-29 2h3v1h-3zm61 1h4v2h-4zm-118 5h2v1h-2zm569 4h5v1h-5zm-496 3h4v1h-4zm418 0h3v2h-3zm-544 1h4v2h-4zm343 0h5v2h-5zm241 4h4v1h-4zm-210 2h4v1h-4zm27 0h3v1h-3zm193 1h2v2h-2zm-521 1h4v2h-4zm-155 1h4v1h-4zm252 2h2v1h-2zm132 1h2v2h-2zm134 1h4v2h-4zm141 0h4v2h-4zm-202 1h4v1h-4zm-198 6h5v2h-5zm429 3h5v2h-5zm-63 2h5v2h-5zm-447 4h4v1h-4zm206 1h5v2h-5zm-268 8h4v1h-4zm-88 2h2v1h-2zm322 1h2v2h-2zm-451 3h2v1h-2zm522 0h3v2h-3zm-34 1h4v2h-4zm-420 3h4v2h-4zm86 3h5v1h-5zm512 2h2v2h-2zm-444 5h4v1h-4zm-31 1h2v2h-2zm-72 3h5v2h-5zm661 12h2v2h-2zm-226 4h2v2h-2zm-321 4h4v2h-4zm230 1h3v2h-3zm-227 8h5v2h-5zm470 5h2v2h-2zm-677 3h2v1h-2zm726 7h4v2h-4zm-612 7h2v2h-2zm461 1h3v2h-3zm85 1h5v2h-5zm-385 1h2v2h-2zm242 2h3v1h-3zm-292 1h3v2h-3zm545 4h2v2h-2zm-665 2h5v1h-5zm166 2h5v2h-5zm204 4h3v1h-3zm-96 4h2v1h-2zm-286 2h2v2h-2zm573 5h2v1h-2zm-99 2h2v2h-2zm-489 3h4v2h-4zm133 0h5v2h-5zm199 2h5v2h-5zm309 1h3v2h-3zm54 0h2v2h-2zm-239 1h4v1h-4zm-534 5h3v1h-3zm644 4h3v2h-3zm-248 3h4v2h-4zm-409 1h5v1h-5zm13 1h3v2h-3zm72 2h3v2h-3zm-82 1h5v2h-5zm137 2h5v2h-5zm39 0h2v1h-2zm150 2h4v1h-4zm83 1h4v2h-4zm183 4h5v2h-5zm-412 1h4v2h-4zm498 1h2v2h-2zm98 0h4v1h-4zm-85 1h2v1h-2zm-214 1h5v2h-5zm66 1h3v1h-3zm-179 4h4v2h-4zm14 0h5v1h-5zm-41 1h3v1h-3zm-350 10h4v1h-4zm276 7h3v2h-3zm165 0h4v2h-4zm15 8h3v2h-3zm-439 11h3v1h-3z"/><path fill="#090977" d="M306 34h4v1h-4zm0 2h2v2h-2zm482 2h4v2h-4zm-205 14h4v1h-4zm49 5h4v2h-4zm14 7h4v2h-4zm-146 1h3v2h-3zm-119 11h5v1h-5zm-17 12h3v1h-3zm-322 2h2v1h-2zm61 0h4v2h-4zm78 14h3v1h-3zm612 6h3v1h-3zm-281 9h5v1h-5zm-468 2h5v1h-5zm157 1h5v1h-5zm401 0h5v1h-5zm-34 9h5v2h-5zm17 3h4v1h-4zm-162 2h4v1h-4zm360 4h2v1h-2zm-726 1h5v1h-5zm523 8h2v2h-2zm-147 16h2v1h-2zm-332 13h3v1h-3zm602 3h4v2h-4zm-378 6h5v2h-5zm-149 10h3v1h-3zm258 1h3v2h-3zm-24 3h3v1h-3zm243 8h2v1h-2zm-502 4h3v2h-3zm494 7h4v2h-4zm-525 9h4v2h-4zm-60 8h4v1h-4zm615 0h5v1h-5zm48 1h4v2h-4zm-78 14h5v2h-5zm91 3h3v1h-3zm-548 2h4v2h-4zm69 3h5v2h-5zm-76 10h5v1h-5zm451 0h2v1h-2zm-193 8h2v1h-2zm-110 13h4v2h-4zm463 6h4v1h-4zm1 9h3v1h-3zm-449 1h2v2h-2zm416 0h5v1h-5zm-645 1h5v1h-5zm156 5h4v2h-4zm505 7h4v2h-4zm-652 2h3v2h-3zm513 7h2v2h-2zm-310 2h3v2h-3zm-130 10h2v2h-2zm327 4h3v1h-3zm1 4h4v2h-4zm-267 2h4v1h-4zm2 7h4v1h-4zm161 11h5v2h-5zm108 0h4v2h-4zm-361 2h5v2h-5zm-97 23h2v2h-2zm721 6h5v1h-5zm-401 5h4v1h-4zm-187 11h4v2h-4zm102 2h3v1h-3zm-82 1h5v2h-5zm462 7h5v2h-5zm-78 1h5v2h-5zm-78 2h3v1h-3zm-100 15h2v2h-2zm56 4h3v2h-3zm-470 5h2v2h-2zm443 4h5v1h-5zm-51 5h2v2h-2zm-380 1h4v2h-4zm688 1h3v1h-3zm-687 18h2v2h-2zm22 1h2v1h-2zm-19 14h2v2h-2zm161 20h4v2h-4zm475 16h5v2h-5zm-18 1h4v2h-4zm81 2h5v2h-5zm-158 1h3v2h-3zm-126 6h5v1h-5zm-100 2h2v1h-2zm-299 6h3v1h-3zm645 13h2v2h-2zm-386 21h5v1h-5zm-47 3h4v1h-4zm216 4h4v2h-4zm248 12h3v2h-3zm-391 3h3v2h-3zm452 2h3v1h-3zm-252 3h3v2h-3zm-244 12h5v1h-5zm260 2h2v2h-2zm-214 8h4v1h-4zm-182 3h5v1h-5zm396 6h5v1h-5zm-243 8h3v1h-3zm506 4h5v2h-5zm-805 3h3v2h-3zm799 0h2v2h-2zm-792 23h3v2h-3zm242 1h5v1h-5zm250 20h2v2h-2zm-395 18h3v1h-3zm407 2h5v2h-5zm-335 4h5v2h-5zm313 0h4v2h-4zm-114 18h3v2h-3zm-328 11h3v1h-3zm160 0h2v2h-2zm-92 2h3v2h-3zm124 5h3v2h-3zm176 10h3v2h-3zm21 6h5v2h-5z"/><path fill="#0a0a85" d="M68 24h5v2h-5zm640 24h4v2h-4zm-388 1h2v2h-2zm491 32h4v2h-4zm0 14h3v1h-3zm-186 2h4v1h-4zm-24 15h2v2h-2zm-219 11h4v2h-4zm-293 11h5v2h-5zm441 11h4v1h-4zm284 1h3v2h-3zm-237 5h2v2h-2zm7 34h5v1h-5zm121 2h5v2h-5zm-121 4h3v1h-3zm-375 3h4v2h-4zm72 0h5v2h-5zm-278 6h4v1h-4zm434 14h4v2h-4zm243 44h4v2h-4zm57 1h5v2h-5zm-204 21h3v2h-3zm239 1h5v1h-5zm-541 4h2v2h-2zm179 4h4v2h-4zm-183 1h2v1h-2zm-210 3h2v2h-2zm649 13h4v1h-4zm-211 3h3v1h-3zm-400 7h4v1h-4zm456 33h4v2h-4zm-453 17h5v2h-5zm324 23h5v1h-5zm-117 7h3v2h-3zm347 30h2v2h-2zm-444 35h5v1h-5zm-17 2h5v2h-5zm131 26h3v2h-3zm495 0h4v2h-4zm-684 9h5v2h-5zm491 0h3v1h-3zm76 2h3v2h-3zm-28 2h4v1h-4zm136 12h2v1h-2zm-37 13h5v2h-5zm-339 13h4v1h-4zm-86 5h2v1h-2zm173 1h3v2h-3zm-47 10h2v2h-2zm-297 8h5v2h-5zm408 20h2v2h-2zm-167 20h5v2h-5zm385 7h2v2h-2zm-112 16h3v1h-3zm-459 30h2v1h-2zm-92 9h5v1h-5zm395 5h4v2h-4zm-254 45h3v1h-3zm515 5h5v2h-5zm-200 30h5v2h-5zm-191 15h5v1h-5zm-158 9h2v2h-2z"/><path fill="#000000" d="M474 68h2v1h-2zm-1 1h2v1h-2zm3 0h1v1h-1zm-3 1h1v1h-1zm0 1h2v1h-2zm3 0h1v1h-1zm-12 3h2v1h-2zm1 4h1v1h-1zm0 1h2v1h-2zm1 1h1v1h-1zm-2 2h1v1h-1zm2 0h1v1h-1zm0 1h1v1h-1zm0 12h1v1h-1zm0 2h1v1h-1zm119 16h1v1h-1zm-119 3h1v1h-1zm118 1h1v1h-1zm0 3h1v1h-1zm3 11h1v1h-1zm1 2h1v1h-1zm1 1h1v1h-1zm0 8h1v1h-1zm2 0h1v1h-1zm1 4h1v1h-1zm-1 4h1v1h-1zm2 8h1v1h-1zm-62 1h1v1h-1zm62 0h1v1h-1zm-116 2h1v1h-1zm54 0h1v1h-1zm-59 1h1v1h-1zm5 0h1v1h-1zm52 0h1v1h-1zm-52 1h1v1h-1zm-5 1h1v1h-1zm57 0h2v1h-2zm1 1h2v1h-2zm1 1h1v1h-1zm63 0h1v1h-1zm-64 1h1v1h-1zm-53 1h1v1h-1zm51 0h1v1h-1zm3 0h1v1h-1zm-59 1h1v1h-1zm5 1h1v1h-1zm118 0h1v1h-1zm-65 7h2v1h-2zm0 1h1v1h-1zm-1 1h1v1h-1zm-424 5h1v1h-1zm423 2h1v1h-1zm3 0h1v1h-1zm-3 1h1v1h-1zm3 0h1v1h-1zm-3 1h1v1h-1zm-427 1h1v1h-1zm428 0h3v1h-3zm-428 1h1v1h-1zm429 0h2v1h-2zm1 1h1v1h-1zm-426 2h1v1h-1zm-4 1h1v1h-1zm0 3h1v1h-1zm4 4h1v1h-1zm423 0h1v1h-1zm3 1h1v1h-1zm-3 1h1v1h-1zm-516 3h1v1h-1zm89 0h1v1h-1zm-88 1h1v1h-1zm-1 1h1v1h-1zm4 0h1v1h-1zm451 0h1v1h-1zm-451 1h1v1h-1zm451 0h1v1h-1zm-451 1h1v1h-1zm-4 1h1v1h-1zm4 0h1v1h-1zm451 0h1v1h-1zm-451 1h1v1h-1zm451 0h1v1h-1zm-454 1h3v1h-3zm454 0h1v1h-1zm-454 1h1v1h-1zm2 0h1v1h-1zm452 0h1v1h-1zm-452 1h1v1h-1zm452 0h1v1h-1zm0 1h1v1h-1zm-455 1h1v1h-1zm0 1h1v1h-1zm455 0h1v1h-1zm-455 1h1v1h-1zm4 0h1v1h-1zm451 0h1v1h-1zm-455 1h1v1h-1zm4 0h1v1h-1zm0 1h1v1h-1zm451 0h1v1h-1zm0 1h1v1h-1zm0 1h1v1h-1zm0 1h1v1h-1zm0 4h1v1h-1zm0 1h1v1h-1zm0 1h1v1h-1zm0 2h1v1h-1zm0 1h1v1h-1zm-54 8h1v1h-1zm1 5h1v1h-1zm113 4h1v1h-1zm-515 1h1v1h-1zm4 0h1v1h-1zm511 0h1v1h-1zm-515 3h1v1h-1zm4 0h1v1h-1zm511 0h1v1h-1zm-60 1h1v1h-1zm60 0h1v1h-1zm-515 1h1v1h-1zm0 1h1v1h-1zm4 0h1v1h-1zm511 1h1v1h-1zm-512 1h2v1h-2zm90 0h1v1h-1zm-1 1h1v1h-1zm423 0h1v1h-1zm0 1h1v1h-1zm0 1h1v1h-1zm-55 8h1v1h-1zm-6 8h1v1h-1zm-3 7h1v1h-1zm3 0h1v1h-1zm-3 1h1v1h-1zm0 1h2v1h-2zm3 0h1v1h-1zm-3 4h3v1h-3zm0 1h3v1h-3zm1 1h2v1h-2zm2 1h1v1h-1zm0 1h1v1h-1zm-3 2h2v1h-2zm1 1h3v1h-3zm0 1h3v1h-3zm1 4h2v1h-2zm-2 1h2v1h-2zm3 0h1v1h-1zm-2 1h2v1h-2zm0 1h2v1h-2zm0 1h2v1h-2zm1 1h1v1h-1zm-1 1h1v1h-1zm64 0h1v1h-1zm2 0h1v1h-1zm0 2h1v1h-1zm-54 7h1v1h-1zm-3 1h1v1h-1zm3 0h1v1h-1zm-1 1h1v1h-1zm-1 1h2v1h-2zm-1 1h2v1h-2zm3 0h1v1h-1zm-1 3h1v1h-1zm-2 1h2v1h-2zm0 3h1v1h-1zm3 0h1v1h-1zm-3 4h1v1h-1zm1 1h1v1h-1zm0 1h1v1h-1zm-1 1h1v1h-1zm2 0h2v1h-2zm-2 1h1v1h-1zm3 6h1v1h-1zm0 5h1v1h-1zm0 1h1v1h-1zm0 1h1v1h-1zm-1 16h2v1h-2zm1 1h1v1h-1zm-1 1h1v1h-1zm0 4h2v1h-2zm0 2h2v1h-2zm1 3h1v1h-1zm-1 3h1v1h-1zm0 5h1v1h-1zm1 1h1v1h-1zm-1 1h1v1h-1zm0 1h2v1h-2zm0 1h2v1h-2zm0 5h1v1h-1zm1 1h1v1h-1zm-1 3h1v1h-1zm0 3h2v1h-2zm0 22h2v1h-2zm1 1h1v1h-1zm-1 8h1v1h-1zm1 1h1v1h-1zm-1 2h1v1h-1zm1 1h1v1h-1zm0 5h1v1h-1zm0 1h1v1h-1zm0 1h1v1h-1zm-1 1h2v1h-2zm0 1h1v1h-1zm0 1h2v1h-2z"/><path fill="#020222" d="M475 69h1v1h-1zm-1 1h3v1h-3zm1 1h1v1h-1zm-2 1h1v1h-1zm-10 2h1v1h-1zm3 0h1v1h-1zm7 0h1v1h-1zm0 1h4v1h-4zm0 1h2v1h-2zm3 0h1v1h-1zm-3 1h4v1h-4zm-10 1h2v1h-2zm3 0h1v1h-1zm7 0h1v1h-1zm2 0h2v1h-2zm-12 1h2v1h-2zm13 0h1v1h-1zm-13 1h3v1h-3zm10 0h1v1h-1zm3 0h1v1h-1zm-13 1h4v1h-4zm10 0h2v1h-2zm3 0h1v1h-1zm-13 1h1v1h-1zm2 0h1v1h-1zm8 0h1v1h-1zm2 0h2v1h-2zm-12 1h3v1h-3zm13 0h1v1h-1zm-10 1h1v1h-1zm-1 1h2v1h-2zm1 1h1v1h-1zm7 0h1v1h-1zm3 2h1v1h-1zm-10 3h1v1h-1zm-2 2h3v1h-3zm-1 1h2v1h-2zm3 0h1v1h-1zm-2 1h1v1h-1zm-1 1h1v1h-1zm3 0h1v1h-1zm-2 1h2v1h-2zm-1 1h4v1h-4zm13 0h1v1h-1zm-2 1h1v1h-1zm2 0h1v1h-1zm-3 1h1v1h-1zm2 0h2v1h-2zm-2 1h4v1h-4zm108 2h3v1h-3zm0 1h1v1h-1zm2 0h1v1h-1zm0 1h1v1h-1zm-2 1h1v1h-1zm2 0h1v1h-1zm-1 1h1v1h-1zm0 1h1v1h-1zm0 2h3v1h-3zm-116 2h1v1h-1zm-3 1h1v1h-1zm3 0h1v1h-1zm117 0h1v1h-1zm-120 1h1v1h-1zm3 0h1v1h-1zm117 0h1v1h-1zm2 0h1v1h-1zm-122 1h2v1h-2zm3 0h1v1h-1zm118 0h2v1h-2zm-119 1h1v1h-1zm121 3h1v1h-1zm0 1h1v1h-1zm-1 1h1v1h-1zm2 0h1v1h-1zm-2 1h3v1h-3zm0 1h2v1h-2zm0 1h2v1h-2zm2 2h2v1h-2zm-1 1h1v1h-1zm0 1h1v1h-1zm2 0h1v1h-1zm-115 1h4v1h-4zm113 0h1v1h-1zm-113 1h4v1h-4zm114 0h3v1h-3zm-114 1h4v1h-4zm114 1h1v1h-1zm2 0h1v1h-1zm0 1h1v1h-1zm-2 1h1v1h-1zm1 2h1v1h-1zm2 0h1v1h-1zm-2 2h3v1h-3zm1 2h3v1h-3zm0 1h3v1h-3zm1 4h1v1h-1zm-128 1h1v1h-1zm128 0h1v1h-1zm0 1h1v1h-1zm2 1h2v1h-2zm-1 1h1v1h-1zm2 0h1v1h-1zm-1 1h1v1h-1zm-118 1h1v1h-1zm117 0h1v1h-1zm0 1h1v1h-1zm2 0h1v1h-1zm1 2h1v1h-1zm0 1h1v1h-1zm-2 1h1v1h-1zm2 0h1v1h-1zm-2 1h3v1h-3zm3 1h1v1h-1zm-67 1h3v1h-3zm66 0h2v1h-2zm-66 1h4v1h-4zm67 0h1v1h-1zm-123 1h1v1h-1zm56 0h3v1h-3zm65 0h1v1h-1zm2 0h1v1h-1zm-123 2h1v1h-1zm124 0h1v1h-1zm-119 1h1v1h-1zm-5 1h1v1h-1zm5 0h1v1h-1zm51 0h2v1h-2zm-51 1h1v1h-1zm51 0h3v1h-3zm68 0h1v1h-1zm-119 1h1v1h-1zm51 0h2v1h-2zm3 0h1v1h-1zm64 0h1v1h-1zm2 0h1v1h-1zm-125 1h1v1h-1zm57 0h2v1h-2zm66 0h1v1h-1zm2 0h1v1h-1zm-120 1h1v1h-1zm51 0h4v1h-4zm-56 1h1v1h-1zm56 0h4v1h-4zm68 0h2v1h-2zm-124 1h1v1h-1zm5 0h1v1h-1zm51 0h3v1h-3zm-56 1h1v1h-1zm5 0h1v1h-1zm51 0h1v1h-1zm3 0h1v1h-1zm-3 1h1v1h-1zm2 0h1v1h-1zm-58 1h1v1h-1zm5 0h1v1h-1zm51 0h1v1h-1zm-56 1h1v1h-1zm5 0h1v1h-1zm54 0h1v1h-1zm-59 1h1v1h-1zm5 0h1v1h-1zm-5 1h1v1h-1zm5 0h1v1h-1zm-5 1h1v1h-1zm0 1h1v1h-1zm0 1h1v1h-1zm5 0h1v1h-1zm51 0h1v1h-1zm2 0h1v1h-1zm-58 1h1v1h-1zm56 0h4v1h-4zm-427 1h1v1h-1zm4 0h1v1h-1zm423 0h1v1h-1zm3 0h1v1h-1zm-430 1h2v1h-2zm4 0h1v1h-1zm423 0h4v1h-4zm-427 1h1v1h-1zm427 0h2v1h-2zm-427 1h1v1h-1zm4 0h1v1h-1zm423 0h1v1h-1zm3 0h1v1h-1zm-430 1h1v1h-1zm2 0h1v1h-1zm2 0h1v1h-1zm367 0h1v1h-1zm5 0h1v1h-1zm53 0h1v1h-1zm-429 1h1v1h-1zm4 0h1v1h-1zm367 0h1v1h-1zm5 0h1v1h-1zm52 0h2v1h-2zm-428 1h1v1h-1zm4 0h1v1h-1zm367 0h1v1h-1zm5 0h1v1h-1zm52 0h3v1h-3zm-427 1h4v1h-4zm370 0h1v1h-1zm-367 1h1v1h-1zm424 0h1v1h-1zm-428 1h1v1h-1zm2 0h3v1h-3zm369 0h1v1h-1zm5 0h1v1h-1zm52 0h2v1h-2zm-428 1h1v1h-1zm4 0h1v1h-1zm423 0h1v1h-1zm3 0h1v1h-1zm-430 1h1v1h-1zm427 0h1v1h-1zm-423 1h1v1h-1zm423 0h1v1h-1zm-427 1h1v1h-1zm4 0h1v1h-1zm-4 1h1v1h-1zm4 0h1v1h-1zm423 0h1v1h-1zm-423 1h1v1h-1zm-4 1h1v1h-1zm0 1h1v1h-1zm4 0h1v1h-1zm-4 1h1v1h-1zm4 0h1v1h-1zm-4 1h1v1h-1zm428 0h3v1h-3zm-428 1h1v1h-1zm4 0h1v1h-1zm423 0h3v1h-3zm-427 1h1v1h-1zm4 0h1v1h-1zm425 0h2v1h-2zm-429 1h1v1h-1zm4 0h1v1h-1zm-4 1h1v1h-1zm4 0h1v1h-1zm-92 1h4v1h-4zm92 0h1v1h-1zm-93 1h1v1h-1zm2 0h3v1h-3zm514 0h1v1h-1zm-515 1h3v1h-3zm515 0h1v1h-1zm-516 1h2v1h-2zm3 0h1v1h-1zm-3 1h1v1h-1zm3 0h1v1h-1zm-3 2h1v1h-1zm2 2h1v1h-1zm-1 1h2v1h-2zm-1 1h1v1h-1zm4 0h1v1h-1zm0 1h1v1h-1zm0 1h1v1h-1zm451 2h1v1h-1zm-455 1h1v1h-1zm395 0h1v1h-1zm-395 1h1v1h-1zm397 0h1v1h-1zm0 1h1v1h-1zm-1 2h1v1h-1zm59 0h1v1h-1zm-57 1h1v1h-1zm57 0h1v1h-1zm0 1h1v1h-1zm-58 3h1v1h-1zm2 1h1v1h-1zm56 0h1v1h-1zm-58 1h1v1h-1zm-405 1h2v1h-2zm7 0h1v1h-1zm129 0h1v1h-1zm4 0h1v1h-1zm4 0h2v1h-2zm5 0h2v1h-2zm139 0h1v1h-1zm5 0h1v1h-1zm2 0h1v1h-1zm6 0h1v1h-1zm130 0h3v1h-3zm61 0h1v1h-1zm2 0h1v1h-1zm2 0h1v1h-1zm62 0h1v1h-1zm5 0h1v1h-1zm2 0h1v1h-1zm47 0h1v1h-1zm3 0h1v1h-1zm3 0h1v1h-1zm2 0h1v1h-1zm44 0h1v1h-1zm3 0h2v1h-2zm116 0h1v1h-1zm2 0h2v1h-2zm15 0h2v1h-2zm-394 2h1v1h-1zm2 0h1v1h-1zm55 0h1v1h-1zm0 1h1v1h-1zm0 1h1v1h-1zm-54 5h1v1h-1zm-1 1h1v1h-1zm0 1h1v1h-1zm2 0h1v1h-1zm0 1h1v1h-1zm-2 2h1v1h-1zm1 2h2v1h-2zm-401 1h1v1h-1zm4 0h1v1h-1zm397 0h1v1h-1zm0 1h1v1h-1zm-401 1h1v1h-1zm4 0h1v1h-1zm400 0h1v1h-1zm111 0h1v1h-1zm-515 1h1v1h-1zm4 0h1v1h-1zm511 0h1v1h-1zm-426 1h1v1h-1zm4 0h1v1h-1zm309 0h1v1h-1zm53 0h1v1h-1zm-455 1h1v1h-1zm2 0h1v1h-1zm2 0h1v1h-1zm-3 1h1v1h-1zm3 0h1v1h-1zm85 0h1v1h-1zm4 0h1v1h-1zm422 0h1v1h-1zm-514 1h3v1h-3zm88 0h1v1h-1zm4 0h1v1h-1zm422 0h1v1h-1zm-515 1h5v1h-5zm89 0h1v1h-1zm4 0h1v1h-1zm-93 1h3v1h-3zm89 0h1v1h-1zm3 0h1v1h-1zm423 0h1v1h-1zm-426 1h3v1h-3zm4 0h1v1h-1zm312 0h1v1h-1zm-1 2h1v1h-1zm0 4h1v1h-1zm1 3h1v1h-1zm60 1h1v1h-1zm-5 1h1v1h-1zm5 0h1v1h-1zm-5 1h1v1h-1zm5 0h1v1h-1zm-59 1h1v1h-1zm1 3h1v1h-1zm47 0h1v1h-1zm-3 1h1v1h-1zm3 0h1v1h-1zm-47 1h1v1h-1zm44 0h3v1h-3zm-42 1h1v1h-1zm-1 3h1v1h-1zm46 0h1v1h-1zm0 1h1v1h-1zm0 1h1v1h-1zm-45 1h1v1h-1zm2 0h1v1h-1zm41 0h2v1h-2zm-43 1h1v1h-1zm43 0h3v1h-3zm1 1h1v1h-1zm-44 2h1v1h-1zm107 0h1v1h-1zm-106 1h1v1h-1zm54 0h1v1h-1zm52 0h1v1h-1zm3 0h1v1h-1zm-109 1h1v1h-1zm0 2h1v1h-1zm41 1h3v1h-3zm10 0h1v1h-1zm-10 1h3v1h-3zm0 1h4v1h-4zm10 0h1v1h-1zm3 0h1v1h-1zm-11 1h2v1h-2zm-40 1h1v1h-1zm38 0h1v1h-1zm0 1h1v1h-1zm13 1h1v1h-1zm52 0h2v1h-2zm3 0h1v1h-1zm-107 1h1v1h-1zm104 0h2v1h-2zm3 0h1v1h-1zm-58 1h2v1h-2zm3 0h1v1h-1zm52 0h4v1h-4zm-104 1h1v1h-1zm2 0h1v1h-1zm37 0h2v1h-2zm10 0h1v1h-1zm2 0h2v1h-2zm53 0h4v1h-4zm-103 1h1v1h-1zm2 0h1v1h-1zm38 0h1v1h-1zm8 0h4v1h-4zm55 0h4v1h-4zm-103 1h1v1h-1zm38 0h1v1h-1zm3 0h1v1h-1zm7 0h4v1h-4zm55 0h4v1h-4zm-101 1h1v1h-1zm36 0h1v1h-1zm3 0h1v1h-1zm10 0h1v1h-1zm-13 1h1v1h-1zm3 0h1v1h-1zm8 0h1v1h-1zm-47 1h1v1h-1zm36 0h2v1h-2zm3 0h1v1h-1zm7 0h1v1h-1zm2 0h1v1h-1zm-12 1h1v1h-1zm2 0h2v1h-2zm11 0h1v1h-1zm53 0h1v1h-1zm2 0h1v1h-1zm-58 1h1v1h-1zm3 0h1v1h-1zm52 0h4v1h-4zm-55 1h1v1h-1zm3 0h1v1h-1zm-3 1h1v1h-1zm1 1h1v1h-1zm2 0h1v1h-1zm-3 1h1v1h-1zm0 1h4v1h-4zm0 1h4v1h-4zm0 1h4v1h-4zm0 1h3v1h-3zm1 1h2v1h-2zm-1 1h2v1h-2zm3 0h1v1h-1zm-3 1h1v1h-1zm3 0h1v1h-1zm-1 1h1v1h-1zm-2 1h4v1h-4zm0 1h4v1h-4zm0 1h2v1h-2zm3 0h1v1h-1zm-1 1h2v1h-2zm-2 1h4v1h-4zm0 1h4v1h-4zm1 1h2v1h-2zm0 4h3v1h-3zm-1 1h1v1h-1zm2 0h1v1h-1zm-2 1h1v1h-1zm1 1h1v1h-1zm0 1h3v1h-3zm-1 1h4v1h-4zm2 1h2v1h-2zm0 1h2v1h-2zm0 1h2v1h-2zm0 1h2v1h-2zm0 1h1v1h-1zm0 1h2v1h-2zm0 4h1v1h-1zm0 1h1v1h-1zm0 1h1v1h-1zm0 1h2v1h-2zm0 3h2v1h-2zm0 1h2v1h-2zm0 1h2v1h-2zm0 1h2v1h-2zm0 1h2v1h-2zm0 1h2v1h-2zm0 1h2v1h-2zm0 1h2v1h-2zm0 1h2v1h-2zm0 1h2v1h-2zm0 1h2v1h-2zm0 1h2v1h-2zm0 2h1v1h-1zm1 1h1v1h-1zm-1 1h2v1h-2zm0 1h2v1h-2zm0 1h2v1h-2zm0 2h2v1h-2zm0 2h2v1h-2zm0 1h2v1h-2zm0 1h1v1h-1zm0 1h2v1h-2zm0 1h2v1h-2zm1 1h1v1h-1zm0 1h1v1h-1zm-1 1h2v1h-2zm0 1h2v1h-2zm0 1h2v1h-2zm1 1h1v1h-1zm-1 1h1v1h-1zm1 4h1v1h-1zm-1 1h2v1h-2zm0 1h2v1h-2zm0 1h2v1h-2zm1 1h1v1h-1zm-1 1h1v1h-1zm0 1h2v1h-2zm0 1h2v1h-2zm1 1h1v1h-1zm-1 1h2v1h-2zm0 1h2v1h-2zm0 14h2v1h-2zm0 1h2v1h-2zm0 1h2v1h-2zm0 1h2v1h-2zm1 2h1v1h-1zm-1 1h2v1h-2zm0 1h2v1h-2zm0 1h2v1h-2zm0 2h1v1h-1zm0 1h2v1h-2zm0 1h2v1h-2zm0 1h2v1h-2zm0 1h2v1h-2zm1 4h1v1h-1zm-1 1h1v1h-1zm0 1h2v1h-2zm1 1h1v1h-1zm-1 1h1v1h-1zm0 1h2v1h-2zm0 1h2v1h-2zm0 1h2v1h-2zm1 1h1v1h-1zm-1 1h1v1h-1zm0 1h1v1h-1zm0 1h1v1h-1zm0 4h2v1h-2zm0 1h2v1h-2zm0 1h2v1h-2zm0 1h2v1h-2z"/><path fill="#050546" d="M474 72h3v1h-3zm-1 1h2v1h-2zm3 0h1v1h-1zm-2 1h3v1h-3zm1 2h1v1h-1zm-1 2h1v1h-1zm-1 1h3v1h-3zm1 1h2v1h-2zm1 1h1v1h-1zm-1 1h1v1h-1zm-1 1h3v1h-3zm-10 1h3v1h-3zm10 0h1v1h-1zm3 0h1v1h-1zm-13 1h1v1h-1zm10 0h1v1h-1zm3 0h1v1h-1zm-13 1h2v1h-2zm12 0h2v1h-2zm-12 1h1v1h-1zm2 0h2v1h-2zm8 0h4v1h-4zm-9 1h1v1h-1zm2 0h1v1h-1zm7 0h2v1h-2zm-7 1h1v1h-1zm8 0h1v1h-1zm2 0h1v1h-1zm-10 1h1v1h-1zm8 0h3v1h-3zm-11 1h1v1h-1zm13 0h1v1h-1zm-10 1h1v1h-1zm7 0h1v1h-1zm2 0h2v1h-2zm-12 1h1v1h-1zm2 1h1v1h-1zm-2 1h1v1h-1zm2 0h1v1h-1zm-1 1h2v1h-2zm9 0h4v1h-4zm-10 1h1v1h-1zm10 0h4v1h-4zm0 1h2v1h-2zm-7 1h1v1h-1zm7 0h1v1h-1zm2 0h1v1h-1zm-12 1h1v1h-1zm3 0h1v1h-1zm8 0h1v1h-1zm-11 1h1v1h-1zm3 0h1v1h-1zm0 1h1v1h-1zm7 0h1v1h-1zm3 0h1v1h-1zm105 0h1v1h-1zm2 0h1v1h-1zm-117 2h1v1h-1zm0 1h1v1h-1zm9 0h2v1h-2zm106 0h2v1h-2zm-115 1h1v1h-1zm0 1h1v1h-1zm7 0h1v1h-1zm111 0h1v1h-1zm-118 1h1v1h-1zm117 0h2v1h-2zm-117 1h1v1h-1zm7 0h1v1h-1zm3 0h1v1h-1zm106 0h1v1h-1zm2 0h1v1h-1zm-121 2h4v1h-4zm119 0h3v1h-3zm-119 1h1v1h-1zm2 0h1v1h-1zm-1 1h2v1h-2zm120 0h1v1h-1zm-120 1h2v1h-2zm9 0h1v1h-1zm3 0h1v1h-1zm108 0h1v1h-1zm-119 1h1v1h-1zm9 0h1v1h-1zm2 0h1v1h-1zm107 0h1v1h-1zm-120 1h2v1h-2zm12 0h2v1h-2zm109 0h3v1h-3zm-118 1h1v1h-1zm10 0h1v1h-1zm109 0h2v1h-2zm-119 1h1v1h-1zm7 0h1v1h-1zm-7 1h1v1h-1zm118 0h1v1h-1zm-111 1h1v1h-1zm3 0h1v1h-1zm-3 1h1v1h-1zm2 0h2v1h-2zm111 0h1v1h-1zm-113 1h1v1h-1zm3 0h1v1h-1zm111 1h1v1h-1zm0 1h1v1h-1zm-1 2h1v1h-1zm-120 1h1v1h-1zm121 0h2v1h-2zm0 1h1v1h-1zm1 1h1v1h-1zm-122 1h1v1h-1zm0 1h1v1h-1zm122 0h2v1h-2zm-122 1h1v1h-1zm122 0h1v1h-1zm0 2h1v1h-1zm-122 1h1v1h-1zm-3 1h1v1h-1zm3 0h1v1h-1zm123 0h1v1h-1zm-124 1h2v1h-2zm8 0h1v1h-1zm-7 1h1v1h-1zm-1 6h2v1h-2zm126 0h2v1h-2zm0 1h2v1h-2zm-115 1h1v1h-1zm-14 1h1v1h-1zm129 0h2v1h-2zm0 1h1v1h-1zm1 1h1v1h-1zm-130 1h1v1h-1zm11 0h2v1h-2zm3 0h1v1h-1zm117 0h1v1h-1zm-131 1h1v1h-1zm11 0h1v1h-1zm2 0h2v1h-2zm118 0h1v1h-1zm-120 1h1v1h-1zm2 0h2v1h-2zm117 0h1v1h-1zm0 2h2v1h-2zm0 1h2v1h-2zm1 1h1v1h-1zm1 2h1v1h-1zm-1 2h2v1h-2zm1 3h2v1h-2zm0 1h3v1h-3zm-122 2h1v1h-1zm123 0h1v1h-1zm-123 1h1v1h-1zm124 0h1v1h-1zm0 1h1v1h-1zm-65 3h1v1h-1zm-2 1h2v1h-2zm-57 1h1v1h-1zm5 0h1v1h-1zm52 0h1v1h-1zm2 0h1v1h-1zm-2 1h3v1h-3zm-1 1h1v1h-1zm2 0h1v1h-1zm-2 1h2v1h-2zm3 0h1v1h-1zm-54 2h1v1h-1zm0 1h1v1h-1zm52 1h1v1h-1zm2 0h1v1h-1zm-54 1h1v1h-1zm-373 1h1v1h-1zm368 0h1v1h-1zm5 0h1v1h-1zm52 0h2v1h-2zm-426 1h2v1h-2zm369 0h1v1h-1zm-370 1h3v1h-3zm370 0h1v1h-1zm58 0h2v1h-2zm-428 1h3v1h-3zm427 0h2v1h-2zm-427 1h1v1h-1zm2 0h1v1h-1zm425 0h1v1h-1zm-427 1h3v1h-3zm0 1h3v1h-3zm375 1h1v1h-1zm-375 1h3v1h-3zm370 0h1v1h-1zm5 0h1v1h-1zm-375 1h1v1h-1zm370 1h1v1h-1zm5 0h1v1h-1zm52 0h2v1h-2zm-52 1h1v1h-1zm52 0h3v1h-3zm-57 1h1v1h-1zm57 0h3v1h-3zm-57 1h1v1h-1zm5 0h1v1h-1zm54 0h1v1h-1zm-427 1h1v1h-1zm368 0h1v1h-1zm5 0h1v1h-1zm54 0h1v1h-1zm-428 1h1v1h-1zm369 0h1v1h-1zm5 0h1v1h-1zm51 0h1v1h-1zm-423 1h1v1h-1zm367 0h1v1h-1zm5 0h1v1h-1zm51 0h1v1h-1zm-56 1h1v1h-1zm5 0h1v1h-1zm-5 1h1v1h-1zm5 0h1v1h-1zm51 0h1v1h-1zm-56 1h1v1h-1zm5 0h1v1h-1zm0 1h1v1h-1zm-5 1h1v1h-1zm5 0h1v1h-1zm52 0h1v1h-1zm-57 1h1v1h-1zm5 0h1v1h-1zm51 0h1v1h-1zm0 1h1v1h-1zm2 0h1v1h-1zm-2 1h1v1h-1zm3 0h1v1h-1zm-430 1h1v1h-1zm428 0h1v1h-1zm2 0h1v1h-1zm-59 1h1v1h-1zm57 0h1v1h-1zm-515 1h1v1h-1zm458 0h1v1h-1zm56 0h1v1h-1zm2 0h2v1h-2zm-517 1h2v1h-2zm464 0h1v1h-1zm-464 1h3v1h-3zm0 1h3v1h-3zm515 2h1v1h-1zm-513 2h1v1h-1zm-1 1h1v1h-1zm-1 2h3v1h-3zm394 0h1v1h-1zm2 0h1v1h-1zm-396 1h1v1h-1zm2 0h1v1h-1zm394 0h1v1h-1zm-396 1h1v1h-1zm395 0h2v1h-2zm-392 2h1v1h-1zm394 2h1v1h-1zm1 5h1v1h-1zm-2 1h1v1h-1zm2 1h1v1h-1zm-357 1h1v1h-1zm4 0h1v1h-1zm2 0h1v1h-1zm5 0h3v1h-3zm15 0h1v1h-1zm3 0h1v1h-1zm4 0h2v1h-2zm11 0h2v1h-2zm14 0h5v1h-5zm14 0h3v1h-3zm6 0h2v1h-2zm3 0h1v1h-1zm28 0h1v1h-1zm2 0h1v1h-1zm8 0h2v1h-2zm18 0h1v1h-1zm2 0h4v1h-4zm6 0h1v1h-1zm15 0h1v1h-1zm2 0h1v1h-1zm9 0h2v1h-2zm13 0h1v1h-1zm2 0h1v1h-1zm4 0h1v1h-1zm4 0h1v1h-1zm18 0h1v1h-1zm14 0h1v1h-1zm37 0h1v1h-1zm2 0h1v1h-1zm3 0h1v1h-1zm2 0h1v1h-1zm4 0h1v1h-1zm14 0h1v1h-1zm2 0h2v1h-2zm3 0h1v1h-1zm2 0h3v1h-3zm10 0h2v1h-2zm4 0h4v1h-4zm8 0h1v1h-1zm3 0h1v1h-1zm3 0h1v1h-1zm2 0h1v1h-1zm3 0h2v1h-2zm9 0h1v1h-1zm2 0h1v1h-1zm4 0h3v1h-3zm4 0h1v1h-1zm2 0h1v1h-1zm6 0h1v1h-1zm2 0h3v1h-3zm5 0h2v1h-2zm4 0h1v1h-1zm4 0h2v1h-2zm3 0h1v1h-1zm21 0h2v1h-2zm3 0h1v1h-1zm2 0h2v1h-2zm8 0h1v1h-1zm23 0h1v1h-1zm2 0h2v1h-2zm19 0h1v1h-1zm3 0h1v1h-1zm3 0h1v1h-1zm2 0h1v1h-1zm4 0h1v1h-1zm17 0h1v1h-1zm3 0h2v1h-2zm3 0h1v1h-1zm4 0h5v1h-5zm6 0h1v1h-1zm30 0h1v1h-1zm2 0h2v1h-2zm3 0h1v1h-1zm20 0h2v1h-2zm38 0h3v1h-3zm7 0h1v1h-1zm48 0h4v1h-4zm27 0h1v1h-1zm18 0h2v1h-2zm3 0h1v1h-1zm3 0h2v1h-2zm3 0h1v1h-1zm8 0h2v1h-2zm3 0h1v1h-1zm8 0h1v1h-1zm8 0h1v1h-1zm3 0h1v1h-1zm30 0h4v1h-4zm-811 1h7v1h-7zm9 0h2v1h-2zm7 0h1v1h-1zm61 0h11v1h-11zm20 0h3v1h-3zm14 0h6v1h-6zm14 0h10v1h-10zm14 0h15v1h-15zm23 0h4v1h-4zm9 0h9v1h-9zm19 0h9v1h-9zm66 0h10v1h-10zm34 0h9v1h-9zm14 0h1v1h-1zm37 0h11v1h-11zm17 0h8v1h-8zm11 0h15v1h-15zm20 0h14v1h-14zm22 0h10v1h-10zm20 0h6v1h-6zm16 0h8v1h-8zm11 0h3v1h-3zm8 0h1v1h-1zm29 0h6v1h-6zm64 0h10v1h-10zm17 0h12v1h-12zm39 0h14v1h-14zm46 0h15v1h-15zm53 0h11v1h-11zm55 0h4v1h-4zm17 0h11v1h-11zm15 0h6v1h-6zm-392 2h1v1h-1zm1 2h2v1h-2zm0 2h1v1h-1zm2 0h1v1h-1zm-2 2h2v1h-2zm3 1h1v1h-1zm-2 3h2v1h-2zm2 1h1v1h-1zm-1 1h2v1h-2zm2 1h1v1h-1zm-1 1h2v1h-2zm1 1h1v1h-1zm-1 1h1v1h-1zm2 1h1v1h-1zm51 0h1v1h-1zm-454 1h1v1h-1zm403 0h1v1h-1zm-403 1h1v1h-1zm2 0h1v1h-1zm86 0h1v1h-1zm4 0h1v1h-1zm309 0h3v1h-3zm-400 1h2v1h-2zm402 0h1v1h-1zm1 1h1v1h-1zm0 1h1v1h-1zm-315 1h2v1h-2zm315 0h1v1h-1zm-2 1h2v1h-2zm0 1h1v1h-1zm2 0h1v1h-1zm0 1h1v1h-1zm0 2h2v1h-2zm1 1h1v1h-1zm54 0h1v1h-1zm5 0h1v1h-1zm-5 1h1v1h-1zm5 0h1v1h-1zm-58 1h1v1h-1zm-2 1h3v1h-3zm45 0h1v1h-1zm10 0h1v1h-1zm5 0h1v1h-1zm-5 1h1v1h-1zm5 0h1v1h-1zm-60 1h3v1h-3zm2 1h2v1h-2zm-1 1h1v1h-1zm48 1h1v1h-1zm0 1h1v1h-1zm-3 1h1v1h-1zm2 0h2v1h-2zm-2 1h3v1h-3zm-44 1h3v1h-3zm45 0h2v1h-2zm68 0h1v1h-1zm-111 1h1v1h-1zm111 0h1v1h-1zm-113 1h1v1h-1zm44 0h1v1h-1zm-44 1h1v1h-1zm2 0h1v1h-1zm45 0h1v1h-1zm-46 1h1v1h-1zm2 0h1v1h-1zm43 0h2v1h-2zm-43 1h1v1h-1zm41 0h3v1h-3zm0 1h2v1h-2zm-43 1h1v1h-1zm2 0h1v1h-1zm41 0h3v1h-3zm10 1h1v1h-1zm2 0h2v1h-2zm-53 1h2v1h-2zm52 0h1v1h-1zm2 0h1v1h-1zm-1 1h2v1h-2zm-54 1h1v1h-1zm2 0h1v1h-1zm43 0h1v1h-1zm10 0h1v1h-1zm52 0h4v1h-4zm-105 1h1v1h-1zm40 0h1v1h-1zm3 0h1v1h-1zm7 0h1v1h-1zm57 0h2v1h-2zm-106 1h1v1h-1zm39 0h1v1h-1zm2 0h2v1h-2zm9 0h1v1h-1zm55 0h2v1h-2zm-105 1h1v1h-1zm104 0h1v1h-1zm-106 1h3v1h-3zm106 0h1v1h-1zm-104 1h1v1h-1zm105 0h1v1h-1zm-55 1h3v1h-3zm-51 1h1v1h-1zm2 0h1v1h-1zm48 0h4v1h-4zm58 0h1v1h-1zm-108 1h3v1h-3zm51 0h2v1h-2zm54 0h1v1h-1zm-105 1h3v1h-3zm51 0h1v1h-1zm2 0h1v1h-1zm-53 1h2v1h-2zm53 0h1v1h-1zm-3 1h1v1h-1zm55 0h1v1h-1zm-104 1h1v1h-1zm2 0h1v1h-1zm47 0h1v1h-1zm2 0h1v1h-1zm55 0h1v1h-1zm-57 1h4v1h-4zm57 0h1v1h-1zm-106 1h1v1h-1zm2 0h1v1h-1zm48 1h1v1h-1zm-48 1h1v1h-1zm1 1h1v1h-1zm-2 1h1v1h-1zm48 0h2v1h-2zm-48 1h3v1h-3zm48 0h1v1h-1zm2 0h2v1h-2zm-50 1h1v1h-1zm49 0h1v1h-1zm2 0h1v1h-1zm-50 1h1v1h-1zm47 0h3v1h-3zm1 1h2v1h-2zm-48 1h1v1h-1zm2 0h1v1h-1zm46 0h2v1h-2zm0 1h3v1h-3zm-48 1h2v1h-2zm47 0h1v1h-1zm2 0h1v1h-1zm-48 1h1v1h-1zm2 0h1v1h-1zm45 0h1v1h-1zm2 0h1v1h-1zm-49 1h1v1h-1zm0 1h1v1h-1zm49 18h1v1h-1zm-1 1h2v1h-2zm0 12h1v1h-1zm0 5h2v1h-2zm0 1h2v1h-2zm0 28h1v1h-1zm0 9h1v1h-1zm1 15h1v1h-1zm-1 13h2v1h-2zm0 1h1v1h-1zm0 21h1v1h-1z"/><path fill="#08086a" d="M475 73h1v1h-1zm-1 11h2v1h-2zm-10 1h1v1h-1zm10 0h2v1h-2zm-9 1h1v1h-1zm9 0h1v1h-1zm-10 1h1v1h-1zm1 1h1v1h-1zm10 0h1v1h-1zm-12 1h2v1h-2zm10 0h1v1h-1zm2 0h1v1h-1zm-12 1h3v1h-3zm10 0h1v1h-1zm-9 1h2v1h-2zm9 0h3v1h-3zm-10 1h1v1h-1zm2 0h1v1h-1zm9 0h1v1h-1zm-11 7h3v1h-3zm2 1h1v1h-1zm-1 1h2v1h-2zm0 1h1v1h-1zm10 0h1v1h-1zm108 0h1v1h-1zm-119 1h1v1h-1zm3 0h1v1h-1zm7 0h4v1h-4zm0 1h3v1h-3zm109 0h1v1h-1zm-118 1h1v1h-1zm9 0h2v1h-2zm-10 1h2v1h-2zm10 0h4v1h-4zm109 0h1v1h-1zm-119 1h1v1h-1zm11 0h1v1h-1zm2 0h1v1h-1zm107 0h1v1h-1zm-119 1h1v1h-1zm9 0h1v1h-1zm2 0h2v1h-2zm-12 1h1v1h-1zm11 0h2v1h-2zm109 0h1v1h-1zm-120 1h1v1h-1zm2 0h2v1h-2zm8 0h4v1h-4zm-9 2h1v1h-1zm10 2h2v1h-2zm-1 1h1v1h-1zm2 0h1v1h-1zm-2 1h2v1h-2zm-10 1h1v1h-1zm10 0h3v1h-3zm-10 1h1v1h-1zm2 1h1v1h-1zm8 0h2v1h-2zm3 0h1v1h-1zm109 0h1v1h-1zm-111 1h2v1h-2zm111 0h1v1h-1zm-119 1h1v1h-1zm8 0h1v1h-1zm0 1h2v1h-2zm-8 2h1v1h-1zm10 0h1v1h-1zm-10 1h1v1h-1zm-2 1h1v1h-1zm2 0h1v1h-1zm-2 2h1v1h-1zm2 0h1v1h-1zm-3 1h1v1h-1zm3 0h1v1h-1zm121 0h1v1h-1zm-123 3h1v1h-1zm9 0h1v1h-1zm-7 1h1v1h-1zm121 0h1v1h-1zm-121 1h1v1h-1zm-3 1h3v1h-3zm10 0h4v1h-4zm2 1h2v1h-2zm-12 1h1v1h-1zm11 0h2v1h-2zm-8 2h1v1h-1zm0 2h1v1h-1zm0 1h1v1h-1zm7 0h1v1h-1zm117 0h1v1h-1zm-127 2h1v1h-1zm10 0h4v1h-4zm117 0h1v1h-1zm-126 1h1v1h-1zm2 0h1v1h-1zm7 0h4v1h-4zm0 1h3v1h-3zm-11 2h1v1h-1zm0 1h1v1h-1zm13 1h1v1h-1zm-1 2h1v1h-1zm-12 1h1v1h-1zm11 0h1v1h-1zm2 0h2v1h-2zm-13 1h1v1h-1zm13 0h2v1h-2zm-2 1h1v1h-1zm2 0h2v1h-2zm-2 1h1v1h-1zm3 3h1v1h-1zm-14 1h1v1h-1zm132 1h1v1h-1zm-132 2h1v1h-1zm0 3h1v1h-1zm0 9h1v1h-1zm67 0h1v1h-1zm1 1h1v1h-1zm-427 6h1v1h-1zm374 1h1v1h-1zm0 1h1v1h-1zm-5 1h1v1h-1zm5 0h1v1h-1zm-375 7h1v1h-1zm2 0h1v1h-1zm-2 1h3v1h-3zm370 0h1v1h-1zm5 1h1v1h-1zm-375 1h3v1h-3zm426 0h3v1h-3zm-426 1h2v1h-2zm427 0h2v1h-2zm-427 1h1v1h-1zm2 0h1v1h-1zm425 0h1v1h-1zm2 0h1v1h-1zm-2 1h3v1h-3zm-1 1h4v1h-4zm1 1h3v1h-3zm-427 1h1v1h-1zm370 1h1v1h-1zm-368 1h1v1h-1zm-2 1h1v1h-1zm2 0h1v1h-1zm425 0h3v1h-3zm-427 1h3v1h-3zm370 0h1v1h-1zm5 0h1v1h-1zm52 0h1v1h-1zm2 0h1v1h-1zm-59 1h1v1h-1zm5 0h1v1h-1zm52 0h1v1h-1zm-424 1h1v1h-1zm367 0h1v1h-1zm5 0h1v1h-1zm53 0h1v1h-1zm-53 1h1v1h-1zm53 0h2v1h-2zm-53 1h1v1h-1zm52 0h1v1h-1zm-57 1h1v1h-1zm56 0h1v1h-1zm-56 1h1v1h-1zm56 0h1v1h-1zm-56 1h1v1h-1zm56 0h1v1h-1zm3 0h1v1h-1zm-54 1h1v1h-1zm51 0h1v1h-1zm2 0h1v1h-1zm-58 1h1v1h-1zm5 0h1v1h-1zm54 0h1v1h-1zm-59 1h1v1h-1zm56 0h1v1h-1zm2 0h2v1h-2zm-517 1h2v1h-2zm0 1h1v1h-1zm0 1h1v1h-1zm515 0h1v1h-1zm-120 1h1v1h-1zm64 0h1v1h-1zm5 0h1v1h-1zm-463 1h1v1h-1zm393 0h2v1h-2zm65 0h1v1h-1zm5 0h1v1h-1zm-463 1h2v1h-2zm458 0h1v1h-1zm56 0h1v1h-1zm-512 1h1v1h-1zm391 0h2v1h-2zm-395 1h1v1h-1zm395 0h2v1h-2zm2 2h1v1h-1zm123 0h1v1h-1zm-124 1h2v1h-2zm124 1h1v1h-1zm0 1h1v1h-1zm0 2h1v1h-1zm-122 1h1v1h-1zm0 1h1v1h-1zm-372 1h1v1h-1zm2 0h1v1h-1zm370 0h1v1h-1zm270 0h1v1h-1zm6 0h1v1h-1zm49 0h1v1h-1zm2 0h2v1h-2zm-712 1h7v1h-7zm29 0h15v1h-15zm155 0h10v1h-10zm16 0h4v1h-4zm13 0h11v1h-11zm39 0h4v1h-4zm40 0h15v1h-15zm107 0h4v1h-4zm55 0h10v1h-10zm26 0h15v1h-15zm27 0h9v1h-9zm12 0h9v1h-9zm54 0h9v1h-9zm42 0h12v1h-12zm40 0h9v1h-9zm18 0h8v1h-8zm44 0h15v1h-15zm18 0h5v1h-5zm19 0h4v1h-4zm33 0h6v1h-6zm-401 1h1v1h-1zm0 1h2v1h-2zm2 2h1v1h-1zm-1 2h1v1h-1zm-1 1h1v1h-1zm2 2h1v1h-1zm-1 2h2v1h-2zm1 2h1v1h-1zm2 1h1v1h-1zm-401 3h1v1h-1zm400 0h1v1h-1zm-401 2h3v1h-3zm401 0h1v1h-1zm-400 1h2v1h-2zm401 0h1v1h-1zm-1 2h1v1h-1zm1 1h1v1h-1zm-313 1h3v1h-3zm313 0h2v1h-2zm57 0h1v1h-1zm5 0h1v1h-1zm-62 1h2v1h-2zm57 0h1v1h-1zm5 0h1v1h-1zm-5 1h1v1h-1zm5 0h1v1h-1zm-5 1h1v1h-1zm-54 1h1v1h-1zm-2 1h3v1h-3zm56 0h1v1h-1zm5 0h1v1h-1zm-61 1h1v1h-1zm56 0h1v1h-1zm5 0h1v1h-1zm-61 1h2v1h-2zm46 0h1v1h-1zm-45 1h2v1h-2zm45 0h1v1h-1zm-45 1h2v1h-2zm45 0h1v1h-1zm10 0h1v1h-1zm5 0h1v1h-1zm-58 2h1v1h-1zm-1 2h1v1h-1zm2 1h1v1h-1zm0 1h1v1h-1zm43 0h3v1h-3zm69 0h1v1h-1zm-69 1h3v1h-3zm10 0h1v1h-1zm-9 1h1v1h-1zm68 0h1v1h-1zm-112 1h2v1h-2zm112 0h1v1h-1zm-112 2h1v1h-1zm0 1h1v1h-1zm44 0h1v1h-1zm2 0h1v1h-1zm62 0h1v1h-1zm-108 1h1v1h-1zm43 0h3v1h-3zm-42 1h1v1h-1zm42 0h2v1h-2zm65 0h1v1h-1zm-107 1h1v1h-1zm52 0h1v1h-1zm55 0h1v1h-1zm-63 1h1v1h-1zm8 0h1v1h-1zm-52 1h1v1h-1zm1 1h1v1h-1zm52 0h1v1h-1zm54 0h1v1h-1zm-55 1h1v1h-1zm55 0h1v1h-1zm-55 1h2v1h-2zm55 0h1v1h-1zm-106 1h1v1h-1zm41 0h2v1h-2zm10 0h1v1h-1zm2 0h1v1h-1zm-53 1h1v1h-1zm42 0h2v1h-2zm11 0h2v1h-2zm54 0h1v1h-1zm-65 1h1v1h-1zm9 0h1v1h-1zm2 0h1v1h-1zm-52 1h1v1h-1zm107 0h1v1h-1zm1 1h1v1h-1zm-108 1h1v1h-1zm105 0h1v1h-1zm0 1h1v1h-1zm2 0h1v1h-1zm-106 1h1v1h-1zm104 0h1v1h-1zm-55 2h1v1h-1zm55 0h1v1h-1zm-55 1h3v1h-3zm55 0h2v1h-2zm-105 1h1v1h-1zm2 0h1v1h-1zm49 0h1v1h-1zm2 0h1v1h-1zm-51 1h1v1h-1zm49 0h1v1h-1zm-49 1h2v1h-2zm0 1h1v1h-1zm50 0h1v1h-1zm-50 1h1v1h-1zm1 3h1v1h-1zm49 0h1v1h-1zm-49 2h1v1h-1zm2 1h1v1h-1zm-1 2h1v1h-1zm1 2h1v1h-1zm0 1h1v1h-1zm47 0h1v1h-1zm-47 1h2v1h-2zm0 1h2v1h-2zm47 16h2v1h-2zm0 13h2v1h-2zm0 1h2v1h-2zm1 1h1v1h-1zm-1 58h1v1h-1zm0 1h2v1h-2zm0 1h2v1h-2z"/><path fill="#0b0a8b" d="M463 88h1v1h-1zm2 1h1v1h-1zm-1 3h1v1h-1zm9 1h1v1h-1zm0 1h1v1h-1zm2 1h2v1h-2zm0 3h1v1h-1zm-11 2h1v1h-1zm-1 2h1v1h-1zm2 0h1v1h-1zm10 0h1v1h-1zm-11 1h2v1h-2zm-1 1h3v1h-3zm13 0h1v1h-1zm-13 1h1v1h-1zm2 0h1v1h-1zm0 1h1v1h-1zm-1 1h2v1h-2zm11 0h1v1h-1zm-12 1h1v1h-1zm2 0h1v1h-1zm9 0h1v1h-1zm-10 1h2v1h-2zm0 1h1v1h-1zm0 7h2v1h-2zm0 1h2v1h-2zm10 0h3v1h-3zm-11 1h2v1h-2zm12 0h1v1h-1zm-12 1h1v1h-1zm2 0h2v1h-2zm-2 1h1v1h-1zm1 1h1v1h-1zm2 0h1v1h-1zm-3 1h1v1h-1zm2 0h2v1h-2zm8 0h4v1h-4zm-10 1h1v1h-1zm2 0h1v1h-1zm10 0h1v1h-1zm-12 1h2v1h-2zm10 0h1v1h-1zm3 0h1v1h-1zm-13 1h1v1h-1zm0 1h3v1h-3zm2 1h1v1h-1zm-1 1h2v1h-2zm-1 1h1v1h-1zm2 0h1v1h-1zm-2 1h3v1h-3zm0 1h1v1h-1zm2 0h1v1h-1zm11 0h1v1h-1zm-13 1h1v1h-1zm2 0h1v1h-1zm-2 1h2v1h-2zm10 0h1v1h-1zm2 0h2v1h-2zm-11 2h2v1h-2zm9 0h2v1h-2zm-9 1h1v1h-1zm12 0h1v1h-1zm-11 1h1v1h-1zm-2 1h1v1h-1zm2 0h1v1h-1zm11 0h1v1h-1zm-12 1h1v1h-1zm2 0h1v1h-1zm7 0h2v1h-2zm-10 1h3v1h-3zm10 0h1v1h-1zm2 0h2v1h-2zm-11 1h1v1h-1zm10 0h1v1h-1zm-11 1h1v1h-1zm3 0h1v1h-1zm7 0h2v1h-2zm-9 1h1v1h-1zm-1 1h1v1h-1zm2 0h1v1h-1zm-2 1h4v1h-4zm128 0h1v1h-1zm-118 1h1v1h-1zm2 0h2v1h-2zm1 1h1v1h-1zm-3 1h4v1h-4zm119 2h1v1h-1zm-130 1h1v1h-1zm12 1h1v1h-1zm-1 1h2v1h-2zm-11 1h1v1h-1zm12 0h1v1h-1zm0 1h1v1h-1zm2 0h1v1h-1zm-14 1h1v1h-1zm11 0h1v1h-1zm2 0h2v1h-2zm-2 1h2v1h-2zm3 0h1v1h-1zm-14 1h1v1h-1zm11 0h1v1h-1zm0 1h1v1h-1zm3 0h1v1h-1zm-14 1h1v1h-1zm13 0h1v1h-1zm-13 1h1v1h-1zm0 2h1v1h-1zm0 1h1v1h-1zm0 2h1v1h-1zm0 1h1v1h-1zm0 1h1v1h-1zm0 2h1v1h-1zm0 1h1v1h-1zm0 1h1v1h-1zm0 1h1v1h-1zm0 2h1v1h-1zm0 5h1v1h-1zm-360 1h1v1h-1zm360 0h1v1h-1zm-359 10h1v1h-1zm-1 2h3v1h-3zm428 3h1v1h-1zm-428 1h2v1h-2zm2 1h1v1h-1zm-1 2h2v1h-2zm0 1h2v1h-2zm-1 1h2v1h-2zm1 1h1v1h-1zm-1 2h3v1h-3zm428 0h1v1h-1zm-429 4h2v1h-2zm4 0h1v1h-1zm425 0h2v1h-2zm-53 1h1v1h-1zm54 0h1v1h-1zm-54 1h1v1h-1zm-5 1h1v1h-1zm57 0h1v1h-1zm2 0h1v1h-1zm-2 1h2v1h-2zm-52 1h1v1h-1zm52 0h1v1h-1zm-57 1h1v1h-1zm5 0h1v1h-1zm51 0h1v1h-1zm3 0h1v1h-1zm-516 1h1v1h-1zm457 0h1v1h-1zm5 0h1v1h-1zm51 0h1v1h-1zm-514 1h2v1h-2zm458 0h1v1h-1zm5 0h1v1h-1zm54 0h1v1h-1zm-3 1h1v1h-1zm2 0h1v1h-1zm-2 1h1v1h-1zm-51 1h1v1h-1zm-5 1h1v1h-1zm5 0h1v1h-1zm55 1h1v1h-1zm-60 1h1v1h-1zm5 0h1v1h-1zm-5 1h1v1h-1zm0 1h1v1h-1zm60 0h1v1h-1zm-55 1h1v1h-1zm55 2h1v1h-1zm-122 1h1v1h-1zm122 1h1v1h-1zm-232 1h5v1h-5zm232 0h1v1h-1zm-232 1h5v1h-5zm232 0h1v1h-1zm-498 1h11v1h-11zm266 0h5v1h-5zm434 0h6v1h-6zm-434 1h5v1h-5zm232 1h1v1h-1zm0 1h1v1h-1zm0 1h1v1h-1zm-120 3h1v1h-1zm1 3h1v1h-1zm-401 2h1v1h-1zm0 2h1v1h-1zm93 0h1v1h-1zm-93 1h1v1h-1zm4 0h1v1h-1zm-2 1h2v1h-2zm87 0h1v1h-1zm-88 1h1v1h-1zm2 0h1v1h-1zm90 0h1v1h-1zm-92 1h1v1h-1zm2 0h1v1h-1zm86 0h1v1h-1zm314 0h1v1h-1zm-314 1h1v1h-1zm4 0h1v1h-1zm310 0h1v1h-1zm-313 3h3v1h-3zm313 0h1v1h-1zm-313 1h3v1h-3zm314 0h1v1h-1zm61 0h1v1h-1zm-61 4h1v1h-1zm61 0h1v1h-1zm-5 1h1v1h-1zm5 0h1v1h-1zm-15 2h1v1h-1zm-44 5h1v1h-1zm114 2h1v1h-1zm-113 1h1v1h-1zm113 0h1v1h-1zm-113 1h1v1h-1zm54 0h1v1h-1zm3 0h1v1h-1zm-2 1h3v1h-3zm58 0h1v1h-1zm-59 1h4v1h-4zm3 1h1v1h-1zm-3 1h2v1h-2zm3 0h1v1h-1zm-3 1h1v1h-1zm2 0h1v1h-1zm-10 1h1v1h-1zm8 0h1v1h-1zm58 0h1v1h-1zm-57 1h1v1h-1zm2 0h1v1h-1zm52 0h1v1h-1zm2 0h2v1h-2zm-57 1h1v1h-1zm56 0h3v1h-3zm-54 1h2v1h-2zm56 0h1v1h-1zm-57 1h3v1h-3zm54 0h2v1h-2zm3 0h1v1h-1zm-58 1h1v1h-1zm2 0h2v1h-2zm53 0h2v1h-2zm3 0h1v1h-1zm-2 1h3v1h-3zm-54 1h1v1h-1zm54 0h3v1h-3zm0 1h3v1h-3zm-64 1h1v1h-1zm9 0h1v1h-1zm0 1h1v1h-1zm-51 1h1v1h-1zm50 1h1v1h-1zm56 0h1v1h-1zm2 0h1v1h-1zm-58 1h1v1h-1zm3 0h1v1h-1zm53 0h2v1h-2zm-56 1h3v1h-3zm57 0h2v1h-2zm-1 1h1v1h-1zm2 0h1v1h-1zm-2 1h2v1h-2zm0 1h3v1h-3zm-54 1h1v1h-1zm55 0h2v1h-2zm0 1h2v1h-2zm-106 1h1v1h-1zm51 0h1v1h-1zm54 0h3v1h-3zm-103 6h1v1h-1zm1 4h1v1h-1z"/><path fill="#1c0682" d="M474 93h3v1h-3zm0 1h3v1h-3zm-1 1h2v1h-2zm1 17h1v1h-1zm2 1h1v1h-1zm-11 8h1v1h-1zm-2 1h1v1h-1zm2 0h1v1h-1zm-1 1h1v1h-1zm0 1h1v1h-1zm9 0h2v1h-2zm-8 1h1v1h-1zm9 0h2v1h-2zm-9 1h1v1h-1zm8 0h1v1h-1zm2 0h1v1h-1zm1 1h1v1h-1zm-3 1h1v1h-1zm-9 2h1v1h-1zm10 2h2v1h-2zm-10 1h1v1h-1zm9 0h4v1h-4zm-8 1h1v1h-1zm9 0h1v1h-1zm-11 4h2v1h-2zm10 0h4v1h-4zm-9 1h1v1h-1zm9 0h3v1h-3zm-10 1h1v1h-1zm2 0h1v1h-1zm10 0h1v1h-1zm-1 1h1v1h-1zm-11 1h1v1h-1zm2 0h1v1h-1zm10 0h2v1h-2zm-11 1h2v1h-2zm11 0h2v1h-2zm-12 4h1v1h-1zm3 0h1v1h-1zm8 0h1v1h-1zm-8 1h1v1h-1zm7 0h3v1h-3zm-9 1h1v1h-1zm2 0h1v1h-1zm-1 1h1v1h-1zm1 2h1v1h-1zm-4 4h1v1h-1zm13 0h1v1h-1zm-1 1h1v1h-1zm-12 1h1v1h-1zm13 0h1v1h-1zm-11 1h1v1h-1zm2 0h1v1h-1zm8 0h1v1h-1zm0 1h2v1h-2zm-1 1h2v1h-2zm3 0h1v1h-1zm-3 1h2v1h-2zm3 0h1v1h-1zm-1 1h2v1h-2zm-1 1h1v1h-1zm1 4h2v1h-2zm-1 1h1v1h-1zm2 0h1v1h-1zm-14 1h1v1h-1zm12 0h2v1h-2zm1 1h1v1h-1zm-9 5h1v1h-1zm10 0h1v1h-1zm-14 1h1v1h-1zm0 1h1v1h-1zm0 1h1v1h-1zm0 1h1v1h-1zm0 3h1v1h-1zm0 1h1v1h-1zm0 1h1v1h-1zm11 2h1v1h-1zm-11 2h1v1h-1zm0 1h1v1h-1zm0 5h1v1h-1zm0 1h1v1h-1zm0 1h1v1h-1zm-358 1h1v1h-1zm-2 1h2v1h-2zm0 1h2v1h-2zm360 0h1v1h-1zm-360 2h1v1h-1zm360 4h1v1h-1zm67 4h1v1h-1zm-428 1h1v1h-1zm428 0h2v1h-2zm0 1h2v1h-2zm1 4h1v1h-1zm-1 1h3v1h-3zm0 1h1v1h-1zm0 1h1v1h-1zm2 0h1v1h-1zm-1 1h2v1h-2zm-1 1h3v1h-3zm-514 1h1v1h-1zm457 1h1v1h-1zm5 0h1v1h-1zm-465 1h1v1h-1zm520 0h1v1h-1zm-520 1h1v1h-1zm465 0h1v1h-1zm51 0h1v1h-1zm-512 1h1v1h-1zm514 0h1v1h-1zm-58 1h1v1h-1zm58 0h1v1h-1zm-58 1h1v1h-1zm58 0h1v1h-1zm-514 1h1v1h-1zm512 0h2v1h-2zm4 6h1v1h-1zm-516 3h1v1h-1zm516 1h1v1h-1zm0 1h1v1h-1zm0 1h1v1h-1zm0 1h1v1h-1zm-520 1h1v1h-1zm0 2h1v1h-1zm4 0h1v1h-1zm85 0h1v1h-1zm-85 1h1v1h-1zm89 0h1v1h-1zm427 0h1v1h-1zm-520 1h1v1h-1zm4 0h1v1h-1zm85 0h1v1h-1zm4 0h1v1h-1zm-92 1h1v1h-1zm2 0h2v1h-2zm-1 1h2v1h-2zm87 0h1v1h-1zm4 0h1v1h-1zm-92 1h1v1h-1zm92 0h1v1h-1zm-4 1h1v1h-1zm-87 1h1v1h-1zm91 0h1v1h-1zm-1 1h1v1h-1zm-2 1h3v1h-3zm2 1h1v1h-1zm368 2h1v1h-1zm-10 6h1v1h-1zm1 4h1v1h-1zm3 0h1v1h-1zm-2 1h1v1h-1zm2 0h1v1h-1zm-3 1h1v1h-1zm3 0h1v1h-1zm66 0h1v1h-1zm-68 1h1v1h-1zm68 0h1v1h-1zm-66 1h1v1h-1zm-3 1h1v1h-1zm3 0h1v1h-1zm8 1h2v1h-2zm-1 3h2v1h-2zm55 0h1v1h-1zm0 1h2v1h-2zm-54 1h1v1h-1zm2 0h1v1h-1zm54 0h1v1h-1zm-55 1h2v1h-2zm54 0h2v1h-2zm-56 1h1v1h-1zm2 0h1v1h-1zm54 0h1v1h-1zm-55 1h3v1h-3zm55 1h2v1h-2zm1 1h1v1h-1zm-56 1h1v1h-1zm56 0h1v1h-1zm-56 7h3v1h-3zm0 1h2v1h-2zm2 1h1v1h-1zm53 4h1v1h-1z"/><path fill="#2d0378" d="M473 111h4v1h-4zm3 1h1v1h-1zm-3 1h2v1h-2zm-9 7h1v1h-1zm0 1h1v1h-1zm10 5h1v1h-1zm2 0h1v1h-1zm-3 1h2v1h-2zm-10 1h1v1h-1zm11 0h3v1h-3zm2 12h1v1h-1zm-12 7h2v1h-2zm-1 1h3v1h-3zm0 1h1v1h-1zm2 0h1v1h-1zm-2 1h2v1h-2zm3 0h1v1h-1zm-2 1h3v1h-3zm-1 1h3v1h-3zm2 3h1v1h-1zm-2 4h1v1h-1zm12 0h1v1h-1zm-11 1h1v1h-1zm2 0h1v1h-1zm-2 1h2v1h-2zm-1 1h1v1h-1zm12 0h1v1h-1zm-2 1h2v1h-2zm-7 1h1v1h-1zm7 0h1v1h-1zm2 0h2v1h-2zm-12 1h1v1h-1zm3 2h1v1h-1zm7 1h2v1h-2zm0 1h1v1h-1zm2 0h1v1h-1zm-2 1h1v1h-1zm3 0h1v1h-1zm-10 1h1v1h-1zm7 0h1v1h-1zm3 1h1v1h-1zm-3 3h3v1h-3zm-10 1h1v1h-1zm2 0h1v1h-1zm8 0h3v1h-3zm1 1h1v1h-1zm-1 2h1v1h-1zm3 3h1v1h-1zm-14 4h1v1h-1zm11 0h4v1h-4zm-11 1h1v1h-1zm13 0h1v1h-1zm-13 1h1v1h-1zm11 0h1v1h-1zm2 0h2v1h-2zm0 1h2v1h-2zm-13 2h1v1h-1zm0 1h1v1h-1zm0 1h1v1h-1zm0 1h1v1h-1zm0 4h1v1h-1zm-358 2h1v1h-1zm358 1h1v1h-1zm0 2h1v1h-1zm0 1h1v1h-1zm0 1h1v1h-1zm-359 2h2v1h-2zm-2 1h1v1h-1zm4 0h1v1h-1zm-4 1h1v1h-1zm4 0h1v1h-1zm-2 1h2v1h-2zm2 1h1v1h-1zm-4 1h1v1h-1zm4 0h1v1h-1zm425 6h1v1h-1zm-1 2h1v1h-1zm-516 2h1v1h-1zm515 0h1v1h-1zm-515 1h1v1h-1zm3 1h1v1h-1zm-1 1h1v1h-1zm516 0h1v1h-1zm-519 1h1v1h-1zm465 0h1v1h-1zm51 0h1v1h-1zm3 0h1v1h-1zm-3 1h2v1h-2zm3 0h1v1h-1zm-519 1h1v1h-1zm465 0h1v1h-1zm51 0h2v1h-2zm3 0h1v1h-1zm-519 1h1v1h-1zm3 0h1v1h-1zm457 0h1v1h-1zm5 0h1v1h-1zm-465 1h1v1h-1zm4 0h1v1h-1zm456 0h1v1h-1zm5 0h1v1h-1zm53 0h1v1h-1zm-58 1h1v1h-1zm56 0h1v1h-1zm-512 1h1v1h-1zm513 0h1v1h-1zm-1 2h1v1h-1zm-516 3h1v1h-1zm4 0h1v1h-1zm512 0h1v1h-1zm-516 1h1v1h-1zm0 1h1v1h-1zm4 0h1v1h-1zm-4 1h1v1h-1zm4 2h1v1h-1zm85 0h1v1h-1zm-87 1h1v1h-1zm2 0h1v1h-1zm85 0h1v1h-1zm3 0h2v1h-2zm428 0h1v1h-1zm-520 1h1v1h-1zm4 0h1v1h-1zm85 0h1v1h-1zm4 0h1v1h-1zm0 1h1v1h-1zm-4 1h1v1h-1zm3 0h1v1h-1zm-91 1h3v1h-3zm89 0h2v1h-2zm430 0h1v1h-1zm-518 1h1v1h-1zm87 0h2v1h-2zm431 0h1v1h-1zm-519 1h1v1h-1zm89 0h3v1h-3zm375 0h1v1h-1zm-375 1h3v1h-3zm375 0h1v1h-1zm-375 1h3v1h-3zm0 1h3v1h-3zm1 1h1v1h-1zm-1 2h2v1h-2zm370 1h1v1h-1zm5 0h1v1h-1zm-15 2h1v1h-1zm0 1h1v1h-1zm0 1h1v1h-1zm0 1h1v1h-1zm0 1h1v1h-1zm3 2h1v1h-1zm1 1h1v1h-1zm-2 1h3v1h-3zm0 1h2v1h-2zm0 2h2v1h-2zm-1 1h1v1h-1zm3 0h1v1h-1zm10 0h1v1h-1zm-11 1h1v1h-1zm8 0h1v1h-1zm2 0h2v1h-2zm-10 1h1v1h-1zm8 0h4v1h-4zm58 2h1v1h-1zm-2 1h3v1h-3zm-54 1h1v1h-1zm54 0h1v1h-1zm-54 1h1v1h-1zm56 0h1v1h-1zm-3 1h2v1h-2zm3 0h1v1h-1zm-57 1h1v1h-1zm0 3h1v1h-1z"/><path fill="#3e0070" d="M473 112h1v1h-1zm2 0h1v1h-1zm0 1h1v1h-1zm0 14h1v1h-1zm-12 24h1v1h-1zm0 2h1v1h-1zm1 1h2v1h-2zm-1 1h1v1h-1zm3 0h1v1h-1zm-1 1h1v1h-1zm0 1h1v1h-1zm0 1h1v1h-1zm0 1h1v1h-1zm-2 1h1v1h-1zm2 0h1v1h-1zm-2 1h1v1h-1zm3 0h1v1h-1zm-2 1h3v1h-3zm1 1h2v1h-2zm-1 1h1v1h-1zm2 1h1v1h-1zm7 0h1v1h-1zm3 0h1v1h-1zm-13 1h4v1h-4zm10 0h2v1h-2zm3 0h1v1h-1zm-12 1h2v1h-2zm9 0h1v1h-1zm2 0h2v1h-2zm-11 1h1v1h-1zm2 0h1v1h-1zm0 1h1v1h-1zm0 1h1v1h-1zm10 1h1v1h-1zm-13 1h4v1h-4zm10 0h3v1h-3zm0 1h1v1h-1zm2 0h2v1h-2zm-12 1h1v1h-1zm2 0h1v1h-1zm8 0h4v1h-4zm-8 1h1v1h-1zm11 0h1v1h-1zm-3 2h1v1h-1zm3 0h1v1h-1zm-3 1h4v1h-4zm2 1h2v1h-2zm-9 1h1v1h-1zm7 0h2v1h-2zm3 0h1v1h-1zm-10 1h1v1h-1zm0 1h1v1h-1zm7 0h2v1h-2zm-9 3h3v1h-3zm10 2h1v1h-1zm2 0h1v1h-1zm-2 1h1v1h-1zm-8 1h1v1h-1zm7 0h2v1h-2zm2 1h1v1h-1zm-1 1h1v1h-1zm1 2h1v1h-1zm-2 2h1v1h-1zm3 0h1v1h-1zm-3 1h1v1h-1zm-11 3h1v1h-1zm14 0h1v1h-1zm-3 2h1v1h-1zm-11 1h1v1h-1zm-360 5h1v1h-1zm0 1h3v1h-3zm1 1h2v1h-2zm-1 2h3v1h-3zm360 0h1v1h-1zm-360 1h2v1h-2zm-1 1h1v1h-1zm4 0h1v1h-1zm0 1h1v1h-1zm424 2h1v1h-1zm-515 6h1v1h-1zm515 0h3v1h-3zm-515 1h1v1h-1zm517 0h1v1h-1zm-518 1h3v1h-3zm515 0h1v1h-1zm3 0h1v1h-1zm-517 1h1v1h-1zm2 0h1v1h-1zm513 0h2v1h-2zm-523 1h5v1h-5zm9 0h1v1h-1zm-9 1h5v1h-5zm6 0h1v1h-1zm2 0h1v1h-1zm2 0h1v1h-1zm-10 1h5v1h-5zm7 0h4v1h-4zm-7 1h5v1h-5zm7 0h1v1h-1zm517 0h2v1h-2zm-524 1h5v1h-5zm8 0h1v1h-1zm514 0h2v1h-2zm3 0h1v1h-1zm-519 1h1v1h-1zm465 0h1v1h-1zm54 0h1v1h-1zm-54 1h1v1h-1zm51 0h1v1h-1zm2 0h1v1h-1zm-1 2h1v1h-1zm-1 1h1v1h-1zm3 0h1v1h-1zm-519 1h1v1h-1zm516 0h1v1h-1zm2 0h2v1h-2zm-516 1h1v1h-1zm87 0h1v1h-1zm4 0h1v1h-1zm424 0h1v1h-1zm-516 1h3v1h-3zm1 1h1v1h-1zm87 0h1v1h-1zm4 0h1v1h-1zm-91 1h1v1h-1zm-2 1h1v1h-1zm2 0h1v1h-1zm2 0h1v1h-1zm89 0h1v1h-1zm372 0h1v1h-1zm54 0h1v1h-1zm-519 1h1v1h-1zm3 0h1v1h-1zm90 0h1v1h-1zm-92 1h1v1h-1zm2 0h1v1h-1zm-2 1h3v1h-3zm90 0h1v1h-1zm429 0h1v1h-1zm-519 1h3v1h-3zm519 0h1v1h-1zm-519 1h3v1h-3zm89 0h2v1h-2zm1 2h2v1h-2zm-1 5h1v1h-1zm370 0h1v1h-1zm0 1h1v1h-1zm5 0h1v1h-1zm-15 3h1v1h-1zm11 1h1v1h-1zm-10 3h1v1h-1zm3 1h1v1h-1zm-3 2h1v1h-1zm3 0h1v1h-1zm66 0h1v1h-1zm-69 1h3v1h-3zm69 0h1v1h-1zm-69 1h1v1h-1zm10 0h1v1h-1zm3 0h1v1h-1zm56 0h1v1h-1zm0 1h1v1h-1zm-69 1h1v1h-1zm2 0h1v1h-1zm67 0h1v1h-1zm-67 2h1v1h-1zm9 0h2v1h-2zm-11 1h2v1h-2zm11 0h1v1h-1zm54 0h1v1h-1zm2 0h1v1h-1zm-66 1h1v1h-1zm64 0h4v1h-4zm0 1h2v1h-2zm3 0h1v1h-1zm-3 1h1v1h-1zm2 0h1v1h-1zm-2 1h1v1h-1zm2 1h2v1h-2zm0 1h1v1h-1z"/><path fill="#500070" d="M464 153h3v1h-3zm-1 1h1v1h-1zm3 0h1v1h-1zm-2 1h1v1h-1zm-1 1h2v1h-2zm3 0h1v1h-1zm0 1h1v1h-1zm-3 1h1v1h-1zm3 0h1v1h-1zm-3 5h2v1h-2zm0 1h1v1h-1zm2 0h1v1h-1zm-1 1h2v1h-2zm10 0h2v1h-2zm1 1h1v1h-1zm-12 1h1v1h-1zm11 0h1v1h-1zm-9 1h1v1h-1zm-2 2h2v1h-2zm0 1h3v1h-3zm11 0h1v1h-1zm-11 2h1v1h-1zm2 0h2v1h-2zm9 0h1v1h-1zm-10 1h1v1h-1zm2 0h1v1h-1zm-3 1h1v1h-1zm3 0h1v1h-1zm-2 1h1v1h-1zm11 1h1v1h-1zm-1 2h1v1h-1zm-9 1h1v1h-1zm10 0h1v1h-1zm-11 1h1v1h-1zm9 0h4v1h-4zm2 1h1v1h-1zm-11 1h1v1h-1zm2 0h1v1h-1zm8 0h1v1h-1zm-11 1h1v1h-1zm10 0h2v1h-2zm3 1h1v1h-1zm-11 1h2v1h-2zm8 4h2v1h-2zm3 0h1v1h-1zm-3 1h1v1h-1zm2 0h2v1h-2zm-9 1h1v1h-1zm-2 2h1v1h-1zm2 0h1v1h-1zm7 0h1v1h-1zm2 1h1v1h-1zm1 1h1v1h-1zm-3 1h1v1h-1zm2 0h2v1h-2zm-1 1h1v1h-1zm-1 2h1v1h-1zm3 0h1v1h-1zm0 1h1v1h-1zm-2 1h1v1h-1zm0 1h1v1h-1zm2 0h1v1h-1zm-10 1h1v1h-1zm7 0h1v1h-1zm2 1h1v1h-1zm1 1h1v1h-1zm-14 1h1v1h-1zm0 1h1v1h-1zm11 0h1v1h-1zm-371 1h1v1h-1zm360 0h1v1h-1zm0 1h1v1h-1zm0 2h1v1h-1zm-360 1h1v1h-1zm2 0h1v1h-1zm358 0h1v1h-1zm-360 1h1v1h-1zm360 0h1v1h-1zm-361 1h1v1h-1zm361 2h1v1h-1zm0 1h1v1h-1zm13 1h1v1h-1zm-460 4h1v1h-1zm513 0h2v1h-2zm-66 1h1v1h-1zm67 0h2v1h-2zm-516 1h1v1h-1zm0 1h1v1h-1zm516 0h1v1h-1zm-516 1h1v1h-1zm2 0h1v1h-1zm-1 2h1v1h-1zm448 0h1v1h-1zm-449 1h1v1h-1zm2 0h1v1h-1zm-1 1h1v1h-1zm515 0h2v1h-2zm-517 1h3v1h-3zm460 0h1v1h-1zm59 0h1v1h-1zm-519 1h1v1h-1zm460 0h1v1h-1zm5 0h1v1h-1zm51 0h2v1h-2zm3 0h1v1h-1zm-515 1h1v1h-1zm89 0h1v1h-1zm367 0h1v1h-1zm58 0h2v1h-2zm-518 1h1v1h-1zm89 0h1v1h-1zm4 0h1v1h-1zm367 0h1v1h-1zm57 0h1v1h-1zm-513 1h1v1h-1zm89 0h1v1h-1zm367 0h1v1h-1zm-459 1h1v1h-1zm2 0h1v1h-1zm515 0h2v1h-2zm-429 1h2v1h-2zm4 0h1v1h-1zm423 0h1v1h-1zm2 0h1v1h-1zm-517 1h1v1h-1zm2 0h1v1h-1zm87 0h1v1h-1zm2 0h1v1h-1zm425 0h1v1h-1zm-516 1h1v1h-1zm2 0h2v1h-2zm86 0h1v1h-1zm4 0h1v1h-1zm372 0h1v1h-1zm51 0h1v1h-1zm2 0h2v1h-2zm-517 1h1v1h-1zm88 0h1v1h-1zm427 0h1v1h-1zm-515 1h2v1h-2zm464 0h1v1h-1zm53 0h1v1h-1zm-428 1h2v1h-2zm0 1h1v1h-1zm0 1h3v1h-3zm375 0h1v1h-1zm0 1h1v1h-1zm-373 1h1v1h-1zm373 0h1v1h-1zm0 4h1v1h-1zm0 1h1v1h-1zm0 1h1v1h-1zm-5 2h1v1h-1zm5 0h1v1h-1zm-15 1h1v1h-1zm14 2h1v1h-1zm56 4h1v1h-1zm-69 1h1v1h-1zm3 0h1v1h-1zm66 0h1v1h-1zm-68 1h1v1h-1zm11 0h2v1h-2zm-2 1h2v1h-2zm3 0h1v1h-1zm-2 1h1v1h-1zm-1 2h1v1h-1zm3 0h1v1h-1zm-1 1h1v1h-1zm-2 1h1v1h-1zm55 0h1v1h-1zm2 0h2v1h-2zm-1 1h1v1h-1zm1 2h1v1h-1zm-1 1h1v1h-1z"/><path fill="#630070" d="M463 157h2v1h-2zm1 1h1v1h-1zm-1 10h1v1h-1zm0 1h3v1h-3zm2 1h1v1h-1zm-1 3h1v1h-1zm0 2h1v1h-1zm1 2h2v1h-2zm0 1h1v1h-1zm-2 2h2v1h-2zm0 1h1v1h-1zm2 0h1v1h-1zm-2 1h2v1h-2zm0 1h1v1h-1zm2 0h1v1h-1zm-1 1h3v1h-3zm12 0h1v1h-1zm-3 1h1v1h-1zm-10 2h1v1h-1zm2 0h1v1h-1zm-2 1h1v1h-1zm0 1h2v1h-2zm1 1h1v1h-1zm2 0h1v1h-1zm-1 1h2v1h-2zm-2 1h3v1h-3zm10 0h4v1h-4zm-10 1h2v1h-2zm3 0h1v1h-1zm7 0h2v1h-2zm3 0h1v1h-1zm-13 1h1v1h-1zm0 1h3v1h-3zm11 0h1v1h-1zm-10 1h1v1h-1zm10 0h1v1h-1zm-8 1h1v1h-1zm7 1h1v1h-1zm2 0h1v1h-1zm-12 1h1v1h-1zm11 0h1v1h-1zm0 1h1v1h-1zm1 1h1v1h-1zm-9 1h1v1h-1zm9 0h2v1h-2zm0 1h1v1h-1zm-11 1h1v1h-1zm10 0h1v1h-1zm-8 1h1v1h-1zm-3 1h2v1h-2zm3 0h1v1h-1zm7 0h1v1h-1zm0 1h1v1h-1zm2 1h1v1h-1zm-2 1h4v1h-4zm-369 3h1v1h-1zm-1 1h1v1h-1zm370 0h1v1h-1zm-372 1h1v1h-1zm2 0h2v1h-2zm2 1h1v1h-1zm357 0h1v1h-1zm0 1h1v1h-1zm11 3h1v1h-1zm-11 1h1v1h-1zm0 1h1v1h-1zm14 0h1v1h-1zm-14 1h1v1h-1zm68 1h1v1h-1zm-516 3h1v1h-1zm448 2h1v1h-1zm-357 2h1v1h-1zm-92 1h1v1h-1zm2 0h2v1h-2zm0 1h1v1h-1zm1 1h1v1h-1zm514 0h1v1h-1zm-518 1h1v1h-1zm89 0h1v1h-1zm2 0h1v1h-1zm-87 1h1v1h-1zm514 0h1v1h-1zm-429 1h1v1h-1zm428 0h1v1h-1zm-427 1h1v1h-1zm2 0h1v1h-1zm368 0h1v1h-1zm-369 1h1v1h-1zm374 0h1v1h-1zm52 0h1v1h-1zm2 0h1v1h-1zm-3 1h1v1h-1zm2 0h2v1h-2zm-428 1h3v1h-3zm427 0h1v1h-1zm-514 1h1v1h-1zm87 0h2v1h-2zm427 0h2v1h-2zm-427 1h1v1h-1zm2 0h1v1h-1zm424 0h1v1h-1zm-51 1h1v1h-1zm-373 1h1v1h-1zm373 0h1v1h-1zm0 4h1v1h-1zm55 2h1v1h-1zm0 1h1v1h-1zm-70 4h1v1h-1zm4 4h1v1h-1zm-1 1h2v1h-2zm8 0h2v1h-2zm3 0h1v1h-1zm-3 2h2v1h-2zm3 0h1v1h-1zm-12 1h2v1h-2zm10 0h2v1h-2zm-1 1h2v1h-2zm55 0h1v1h-1zm-53 1h1v1h-1zm0 1h1v1h-1zm-1 1h1v1h-1zm2 0h1v1h-1zm-1 1h1v1h-1zm-2 1h2v1h-2zm3 0h1v1h-1zm52 0h3v1h-3zm1 1h1v1h-1zm2 1h1v1h-1z"/><path fill="#77076b" d="M463 177h2v1h-2zm0 1h2v1h-2zm3 0h1v1h-1zm-2 1h3v1h-3zm1 3h1v1h-1zm8 1h1v1h-1zm2 0h2v1h-2zm0 1h1v1h-1zm-12 1h1v1h-1zm11 0h2v1h-2zm-10 1h1v1h-1zm1 2h2v1h-2zm0 1h1v1h-1zm-2 1h1v1h-1zm1 1h1v1h-1zm1 3h1v1h-1zm9 0h3v1h-3zm-8 1h1v1h-1zm0 1h1v1h-1zm9 0h1v1h-1zm-12 1h2v1h-2zm11 0h1v1h-1zm-9 1h2v1h-2zm11 0h1v1h-1zm-10 1h1v1h-1zm7 0h1v1h-1zm2 0h1v1h-1zm-11 1h1v1h-1zm2 0h1v1h-1zm9 0h1v1h-1zm-12 1h3v1h-3zm11 0h1v1h-1zm-1 1h1v1h-1zm0 1h1v1h-1zm3 1h1v1h-1zm-13 1h1v1h-1zm2 0h1v1h-1zm8 0h2v1h-2zm3 0h1v1h-1zm-1 1h1v1h-1zm-1 1h3v1h-3zm0 1h1v1h-1zm2 0h1v1h-1zm-13 2h1v1h-1zm3 0h1v1h-1zm7 0h1v1h-1zm-8 2h1v1h-1zm8 0h1v1h-1zm0 2h1v1h-1zm3 0h1v1h-1zm-374 1h3v1h-3zm372 0h1v1h-1zm2 0h1v1h-1zm-375 1h1v1h-1zm4 0h1v1h-1zm357 3h1v1h-1zm14 0h1v1h-1zm-2 1h1v1h-1zm-1 1h1v1h-1zm-11 2h1v1h-1zm0 4h1v1h-1zm-361 2h1v1h-1zm0 2h1v1h-1zm361 0h1v1h-1zm-449 2h1v1h-1zm2 0h1v1h-1zm447 0h1v1h-1zm-449 1h1v1h-1zm89 0h1v1h-1zm-89 1h1v1h-1zm89 0h1v1h-1zm2 0h1v1h-1zm-90 1h2v1h-2zm88 0h2v1h-2zm1 1h1v1h-1zm1 1h1v1h-1zm-1 1h1v1h-1zm374 0h1v1h-1zm-373 2h1v1h-1zm-1 1h1v1h-1zm426 0h1v1h-1zm2 0h1v1h-1zm-3 1h1v1h-1zm1 3h1v1h-1zm2 0h1v1h-1zm-2 1h2v1h-2zm-1 1h1v1h-1zm4 1h1v1h-1zm0 4h1v1h-1zm-66 4h1v1h-1zm0 1h1v1h-1zm8 1h3v1h-3zm58 0h1v1h-1zm-69 1h2v1h-2zm12 0h1v1h-1zm57 0h1v1h-1zm-68 1h3v1h-3zm9 0h1v1h-1zm2 0h2v1h-2zm57 0h1v1h-1zm-69 1h3v1h-3zm10 1h1v1h-1zm3 0h1v1h-1zm53 3h1v1h-1zm-56 1h1v1h-1zm2 0h1v1h-1zm54 0h1v1h-1zm2 0h1v1h-1zm-57 1h1v1h-1zm54 0h1v1h-1zm2 0h1v1h-1zm1 1h1v1h-1z"/><path fill="#8c1c5d" d="M463 179h1v1h-1zm0 7h1v1h-1zm1 1h1v1h-1zm2 0h1v1h-1zm-2 1h1v1h-1zm1 2h1v1h-1zm-2 1h1v1h-1zm2 2h1v1h-1zm-2 3h1v1h-1zm2 0h1v1h-1zm0 1h1v1h-1zm-1 1h1v1h-1zm0 1h2v1h-2zm-1 1h1v1h-1zm2 0h1v1h-1zm1 1h1v1h-1zm-3 1h3v1h-3zm0 1h1v1h-1zm2 0h2v1h-2zm-2 1h1v1h-1zm2 0h1v1h-1zm10 0h1v1h-1zm-11 1h1v1h-1zm1 1h1v1h-1zm9 0h1v1h-1zm-9 4h1v1h-1zm11 0h1v1h-1zm-10 1h1v1h-1zm7 0h2v1h-2zm3 0h1v1h-1zm-2 1h3v1h-3zm0 1h2v1h-2zm0 1h2v1h-2zm-1 1h1v1h-1zm-371 1h1v1h-1zm371 0h1v1h-1zm-372 1h1v1h-1zm374 0h1v1h-1zm1 1h1v1h-1zm-2 1h1v1h-1zm-1 1h1v1h-1zm1 1h2v1h-2zm1 2h1v1h-1zm-2 2h1v1h-1zm-11 1h1v1h-1zm-361 2h1v1h-1zm4 1h1v1h-1zm-4 1h1v1h-1zm3 0h1v1h-1zm358 0h1v1h-1zm0 2h1v1h-1zm-448 1h1v1h-1zm87 0h1v1h-1zm-87 1h2v1h-2zm90 0h1v1h-1zm-90 1h1v1h-1zm89 0h1v1h-1zm-90 1h1v1h-1zm91 0h1v1h-1zm358 0h1v1h-1zm0 2h1v1h-1zm0 1h1v1h-1zm67 4h1v1h-1zm2 0h1v1h-1zm-3 1h3v1h-3zm0 1h1v1h-1zm0 1h1v1h-1zm2 0h1v1h-1zm-2 1h1v1h-1zm3 1h1v1h-1zm-3 1h1v1h-1zm4 3h1v1h-1zm0 2h1v1h-1zm0 1h1v1h-1zm-69 1h2v1h-2zm2 1h1v1h-1zm8 0h1v1h-1zm59 0h1v1h-1zm-69 1h1v1h-1zm11 0h2v1h-2zm58 0h1v1h-1zm-69 1h1v1h-1zm2 0h1v1h-1zm8 0h1v1h-1zm1 2h1v1h-1zm1 1h1v1h-1zm55 3h2v1h-2zm-2 1h1v1h-1zm3 0h1v1h-1zm-3 1h1v1h-1zm2 0h1v1h-1zm-1 1h1v1h-1zm2 0h1v1h-1z"/><path fill="#a2324f" d="M463 198h1v1h-1zm1 5h1v1h-1zm-1 4h1v1h-1zm3 0h1v1h-1zm8 3h2v1h-2zm-10 2h1v1h-1zm2 0h1v1h-1zm0 1h1v1h-1zm10 0h1v1h-1zm-1 2h1v1h-1zm1 1h1v1h-1zm-374 1h2v1h-2zm3 0h1v1h-1zm360 0h1v1h-1zm8 0h1v1h-1zm-368 1h1v1h-1zm361 0h1v1h-1zm8 0h1v1h-1zm1 2h2v1h-2zm-1 2h1v1h-1zm2 0h1v1h-1zm-2 1h1v1h-1zm2 0h1v1h-1zm-375 2h1v1h-1zm361 0h1v1h-1zm12 0h1v1h-1zm-373 1h1v1h-1zm0 1h1v1h-1zm374 0h1v1h-1zm-373 1h1v1h-1zm3 0h1v1h-1zm-3 1h2v1h-2zm0 1h2v1h-2zm-1 2h1v1h-1zm4 0h1v1h-1zm-3 1h4v1h-4zm-87 2h1v1h-1zm447 0h1v1h-1zm0 2h1v1h-1zm0 3h1v1h-1zm0 3h1v1h-1zm68 0h1v1h-1zm1 1h1v1h-1zm-2 1h3v1h-3zm2 2h1v1h-1zm-2 1h2v1h-2zm0 1h1v1h-1zm-1 1h1v1h-1zm-66 1h1v1h-1zm3 5h2v1h-2zm67 0h1v1h-1zm-69 1h2v1h-2zm1 1h2v1h-2zm0 1h1v1h-1zm67 3h1v1h-1zm-3 1h1v1h-1zm1 1h2v1h-2zm-1 1h2v1h-2zm2 1h1v1h-1z"/><path fill="#b6483e" d="M465 208h2v1h-2zm-1 1h1v1h-1zm0 1h1v1h-1zm-1 1h3v1h-3zm12 0h1v1h-1zm-12 3h2v1h-2zm-360 2h2v1h-2zm363 0h1v1h-1zm9 0h1v1h-1zm-9 1h1v1h-1zm8 0h1v1h-1zm2 0h1v1h-1zm-375 1h2v1h-2zm363 0h1v1h-1zm9 0h1v1h-1zm2 0h1v1h-1zm-374 2h1v1h-1zm365 2h1v1h-1zm7 0h1v1h-1zm2 0h1v1h-1zm-2 1h1v1h-1zm1 1h3v1h-3zm2 1h1v1h-1zm-3 1h1v1h-1zm3 0h1v1h-1zm-3 1h1v1h-1zm-370 1h1v1h-1zm361 0h1v1h-1zm-1 1h1v1h-1zm13 0h1v1h-1zm-2 1h1v1h-1zm2 0h1v1h-1zm-371 1h1v1h-1zm-3 1h1v1h-1zm2 0h1v1h-1zm358 2h1v1h-1zm0 7h1v1h-1zm0 1h1v1h-1zm69 7h1v1h-1zm-69 1h1v1h-1zm0 3h1v1h-1zm0 1h1v1h-1zm12 3h1v1h-1zm54 5h1v1h-1zm1 1h1v1h-1zm2 1h1v1h-1z"/><path fill="#cb5e2e" d="M464 208h1v1h-1zm-1 1h1v1h-1zm0 3h1v1h-1zm0 1h3v1h-3zm2 1h2v1h-2zm-2 1h1v1h-1zm2 0h2v1h-2zm0 1h1v1h-1zm9 0h1v1h-1zm-370 1h1v1h-1zm360 0h1v1h-1zm-360 1h1v1h-1zm359 0h1v1h-1zm-362 1h1v1h-1zm365 0h1v1h-1zm0 1h1v1h-1zm-2 2h1v1h-1zm9 2h1v1h-1zm2 1h1v1h-1zm0 1h1v1h-1zm-373 1h1v1h-1zm374 0h1v1h-1zm-13 1h1v1h-1zm2 0h2v1h-2zm8 0h4v1h-4zm-7 1h1v1h-1zm9 0h1v1h-1zm-371 2h1v1h-1zm-1 1h1v1h-1zm359 12h1v1h-1zm0 5h1v1h-1zm68 0h1v1h-1zm-1 1h3v1h-3zm-1 1h1v1h-1zm3 0h1v1h-1zm-69 1h1v1h-1zm1 3h3v1h-3zm12 2h2v1h-2zm54 4h2v1h-2zm1 1h1v1h-1zm0 1h1v1h-1z"/><path fill="#df761f" d="M464 207h2v1h-2zm-1 1h1v1h-1zm3 1h1v1h-1zm-3 7h2v1h-2zm0 1h1v1h-1zm2 1h1v1h-1zm-2 1h3v1h-3zm-361 1h1v1h-1zm4 0h1v1h-1zm357 0h3v1h-3zm-362 1h1v1h-1zm362 0h2v1h-2zm3 0h1v1h-1zm-365 1h1v1h-1zm362 0h1v1h-1zm0 2h1v1h-1zm-357 2h1v1h-1zm368 0h1v1h-1zm-8 1h1v1h-1zm8 0h1v1h-1zm-370 1h1v1h-1zm0 1h1v1h-1zm360 0h2v1h-2zm9 0h2v1h-2zm-8 1h2v1h-2zm-363 1h2v1h-2zm362 0h1v1h-1zm10 0h1v1h-1zm2 0h1v1h-1zm-12 1h1v1h-1zm-2 13h1v1h-1zm0 3h1v1h-1zm67 3h1v1h-1zm1 2h1v1h-1zm-64 2h1v1h-1zm7 0h1v1h-1zm0 1h1v1h-1zm3 0h1v1h-1zm52 1h1v1h-1zm0 1h1v1h-1zm2 0h1v1h-1zm-2 3h1v1h-1zm3 0h1v1h-1zm-2 1h1v1h-1zm2 1h1v1h-1z"/><path fill="#f28e11" d="M465 209h1v1h-1zm-1 6h1v1h-1zm-361 3h1v1h-1zm-1 1h2v1h-2zm3 0h1v1h-1zm360 2h1v1h-1zm0 1h1v1h-1zm-1 1h3v1h-3zm0 1h1v1h-1zm2 1h1v1h-1zm-3 1h1v1h-1zm-360 1h1v1h-1zm2 0h1v1h-1zm368 3h1v1h-1zm-10 1h1v1h-1zm3 0h1v1h-1zm7 0h1v1h-1zm2 0h1v1h-1zm-10 1h2v1h-2zm1 1h1v1h-1zm-4 14h1v1h-1zm14 4h1v1h-1zm0 1h1v1h-1zm52 0h1v1h-1zm2 0h2v1h-2zm-57 2h2v1h-2zm3 0h1v1h-1zm55 0h1v1h-1zm-57 2h1v1h-1zm54 0h1v1h-1zm3 2h1v1h-1zm-3 1h1v1h-1zm3 0h1v1h-1zm-3 1h4v1h-4z"/><path fill="#f9a009" d="M104 219h1v1h-1zm-2 2h1v1h-1zm4 0h1v1h-1zm0 1h1v1h-1zm-5 1h1v1h-1zm362 0h1v1h-1zm-357 1h1v1h-1zm359 0h2v1h-2zm-359 1h1v1h-1zm-4 1h1v1h-1zm363 0h2v1h-2zm-361 1h1v1h-1zm360 0h1v1h-1zm-1 3h2v1h-2zm2 1h1v1h-1zm-2 1h1v1h-1zm10 0h1v1h-1zm-10 1h1v1h-1zm3 1h1v1h-1zm0 1h1v1h-1zm-4 11h1v1h-1zm14 3h1v1h-1zm-1 2h1v1h-1zm55 0h1v1h-1zm-1 1h1v1h-1zm-54 1h1v1h-1zm-9 1h1v1h-1zm62 0h1v1h-1zm2 0h1v1h-1zm-56 1h2v1h-2zm54 0h1v1h-1zm-53 1h1v1h-1zm54 1h1v1h-1zm0 1h1v1h-1z"/><path fill="#fdb202" d="M103 220h1v1h-1zm2 0h1v1h-1zm-3 2h1v1h-1zm0 1h1v1h-1zm4 0h1v1h-1zm-5 1h1v1h-1zm1 1h1v1h-1zm361 0h2v1h-2zm-360 1h1v1h-1zm2 0h1v1h-1zm359 0h1v1h-1zm11 4h1v1h-1zm1 2h1v1h-1zm-12 1h2v1h-2zm9 0h1v1h-1zm3 0h1v1h-1zm-12 2h1v1h-1zm12 5h1v1h-1zm-13 1h1v1h-1zm13 1h1v1h-1zm-13 7h1v1h-1zm13 1h1v1h-1zm52 3h1v1h-1zm3 0h1v1h-1zm-67 1h2v1h-2zm65 0h1v1h-1zm-53 1h1v1h-1zm53 0h3v1h-3zm1 2h2v1h-2zm-1 2h2v1h-2z"/><path fill="#ffc300" d="M104 220h1v1h-1zm0 6h1v1h-1zm359 1h1v1h-1zm2 0h1v1h-1zm10 6h1v1h-1zm-12 1h1v1h-1zm10 0h2v1h-2zm-8 1h1v1h-1zm-1 2h1v1h-1zm2 0h1v1h-1zm-3 1h1v1h-1zm0 2h2v1h-2zm12 0h1v1h-1zm1 1h1v1h-1zm-13 10h1v1h-1zm11 0h1v1h-1zm-10 1h1v1h-1zm2 0h1v1h-1zm4 0h1v1h-1zm2 0h2v1h-2zm-8 1h2v1h-2zm9 0h1v1h-1zm56 0h1v1h-1zm-66 1h1v1h-1zm12 0h1v1h-1zm54 2h1v1h-1zm2 0h1v1h-1z"/><path fill="#ffd200" d="M103 221h3v1h-3zm0 1h1v1h-1zm2 0h1v1h-1zm-3 2h2v1h-2zm3 0h1v1h-1zm-2 1h3v1h-3zm362 0h1v1h-1zm9 7h2v1h-2zm-9 2h1v1h-1zm-2 1h1v1h-1zm11 0h1v1h-1zm-10 1h3v1h-3zm9 0h1v1h-1zm-10 1h1v1h-1zm2 0h1v1h-1zm1 1h2v1h-2zm6 0h1v1h-1zm4 0h1v1h-1zm-13 1h2v1h-2zm4 0h1v1h-1zm8 0h1v1h-1zm1 6h1v1h-1zm0 1h1v1h-1zm-7 6h1v1h-1zm5 0h2v1h-2zm-8 1h1v1h-1zm8 0h1v1h-1zm2 0h1v1h-1zm54 3h1v1h-1z"/><path fill="#ffe210" d="M104 222h1v1h-1zm-1 1h1v1h-1zm2 0h1v1h-1zm-1 1h1v1h-1zm370 9h1v1h-1zm-10 1h1v1h-1zm9 1h1v1h-1zm1 1h1v1h-1zm-1 1h1v1h-1zm-9 1h2v1h-2zm4 0h1v1h-1zm2 0h2v1h-2zm5 0h1v1h-1zm-10 1h2v1h-2zm7 0h1v1h-1zm4 0h1v1h-1zm-11 1h2v1h-2zm8 0h1v1h-1zm-8 1h2v1h-2zm8 0h1v1h-1zm3 3h1v1h-1zm0 3h1v1h-1zm-10 2h1v1h-1zm5 0h2v1h-2zm-8 1h2v1h-2zm3 0h1v1h-1zm8 0h2v1h-2zm-10 1h2v1h-2zm3 0h1v1h-1zm2 0h1v1h-1zm2 0h2v1h-2zm-6 1h1v1h-1zm2 0h1v1h-1zm4 0h1v1h-1z"/><path fill="#fff295" d="M104 223h1v1h-1zm371 11h4v1h-4zm0 1h4v1h-4zm-12 1h1v1h-1zm12 0h4v1h-4zm-1 1h5v1h-5zm0 1h1v1h-1zm-6 1h1v1h-1zm2 0h2v1h-2zm-3 1h1v1h-1zm5 0h1v1h-1zm2 0h1v1h-1zm-10 1h1v1h-1zm3 0h2v1h-2zm3 0h1v1h-1zm4 0h2v1h-2zm-11 1h3v1h-3zm10 0h1v1h-1zm-2 1h1v1h-1zm2 0h1v1h-1zm2 0h2v1h-2zm-6 1h1v1h-1zm3 0h2v1h-2zm-7 2h2v1h-2zm9 0h2v1h-2zm-10 1h1v1h-1zm2 0h2v1h-2zm4 0h1v1h-1zm5 0h1v1h-1zm-12 1h1v1h-1zm3 0h2v1h-2zm8 0h3v1h-3zm-10 1h1v1h-1zm9 0h1v1h-1zm2 0h1v1h-1zm-10 1h1v1h-1zm2 0h2v1h-2zm3 0h1v1h-1zm-4 1h1v1h-1zm2 0h1v1h-1zm2 0h1v1h-1zm3 0h1v1h-1zm-5 1h1v1h-1zm-5 1h1v1h-1z"/><path fill="#ffffff" d="M469 238h1v1h-1zm4 0h1v1h-1zm-4 1h1v1h-1zm4 0h1v1h-1zm-4 1h1v1h-1zm2 0h1v1h-1zm-2 1h1v1h-1zm2 0h1v1h-1zm-1 1h1v1h-1zm2 0h1v1h-1zm2 0h2v1h-2zm-11 1h2v1h-2zm3 0h1v1h-1zm3 0h1v1h-1zm3 0h1v1h-1zm2 0h1v1h-1zm-11 1h2v1h-2zm4 0h2v1h-2zm4 0h1v1h-1zm3 0h2v1h-2zm-10 1h1v1h-1zm2 0h1v1h-1zm6 0h4v1h-4zm-8 1h1v1h-1zm3 0h2v1h-2zm4 0h2v1h-2zm-8 1h1v1h-1zm2 0h1v1h-1zm4 0h1v1h-1zm2 0h1v1h-1zm-7 1h2v1h-2zm4 0h1v1h-1zm2 0h2v1h-2zm-5 1h1v1h-1zm2 0h1v1h-1zm7 0h1v1h-1zm-3 1h3v1h-3z"/><path fill="#ffffff" d="M468 240h1v1h-1zm2 0h1v1h-1zm2 1h1v1h-1zm-6 1h2v1h-2zm-1 1h1v1h-1zm2 0h1v1h-1zm-1 1h1v1h-1zm4 0h1v1h-1zm-7 1h1v1h-1zm2 0h1v1h-1zm2 0h2v1h-2zm3 0h2v1h-2zm-1 1h1v1h-1zm4 0h1v1h-1zm-5 1h1v1h-1zm4 0h3v1h-3zm-3 1h1v1h-1zm3 0h2v1h-2zm-4 1h1v1h-1zm2 0h1v1h-1zm-1 1h1v1h-1zm-6 2h1v1h-1z"/><path fill="#ffffff" d="M474 239h1v1h-1zm-3 3h1v1h-1zm-3 1h1v1h-1zm-3 1h1v1h-1zm4 1h1v1h-1zm-6 1h1v1h-1zm7 0h1v1h-1zm-1 3h1v1h-1z"/><path fill="#ffffff" d="M468 242h2v1h-2zm2 1h1v1h-1z"/></g>
<text class="tl" transform="translate(89,778.3) rotate(-90)">2026-04-21 01:05:10</text><rect x="92" y="760" width="1" height="20" fill="#f4f4f0"/><text class="tl" transform="translate(203,778.3) rotate(-90)">2026-04-21 01:05:20</text><rect x="206" y="760" width="1" height="20" fill="#f4f4f0"/><text class="tl" transform="translate(318,778.3) rotate(-90)">2026-04-21 01:05:30</text><rect x="321" y="760" width="1" height="20" fill="#f4f4f0"/><text class="tl" transform="translate(428,778.3) rotate(-90)">2026-04-21 01:05:40</text><rect x="431" y="760" width="1" height="20" fill="#f4f4f0"/><text class="tl" transform="translate(511,778.3) rotate(-90)">2026-04-21 01:05:50</text><rect x="514" y="760" width="1" height="20" fill="#f4f4f0"/><text class="tl" transform="translate(626,778.3) rotate(-90)">2026-04-21 01:06:00</text><rect x="629" y="760" width="1" height="20" fill="#f4f4f0"/><text class="tl" transform="translate(741,778.3) rotate(-90)">2026-04-21 01:06:10</text><rect x="744" y="760" width="1" height="20" fill="#f4f4f0"/>
<g shape-rendering="auto"><path stroke="#000" stroke-width="1" fill="none" d="M818 4.5h8M818 12.5h8M818 20.5h8M818 28.5h11M818 35.5h8M818 43.5h8M818 51.5h8M818 59.5h8M818 67.5h8M818 74.5h8M818 82.5h8M818 90.5h8M818 98.5h8M818 106.5h26M818 113.5h8M818 121.5h8M818 129.5h8M818 137.5h8M818 145.5h8M818 152.5h8M818 160.5h8M818 168.5h8M818 176.5h8M818 184.5h11M818 191.5h8M818 199.5h8M818 207.5h8M818 215.5h8M818 223.5h8M818 230.5h8M818 238.5h8M818 246.5h8M818 254.5h8M818 262.5h26M818 269.5h8M818 277.5h8M818 285.5h8M818 293.5h8M818 301.5h8M818 308.5h8M818 316.5h8M818 324.5h8M818 332.5h8M818 340.5h11M818 347.5h8M818 355.5h8M818 363.5h8M818 372.5h8M818 379.5h8M818 387.5h8M818 395.5h8M818 403.5h8M818 411.5h8M818 418.5h26M818 426.5h8M818 434.5h8M818 442.5h8M818 450.5h8M818 457.5h8M818 465.5h8M818 473.5h8M818 481.5h8M818 489.5h8M818 496.5h11M818 504.5h8M818 512.5h8M818 520.5h8M818 528.5h8M818 535.5h8M818 543.5h8M818 551.5h8M818 559.5h8M818 567.5h8M818 574.5h26M818 582.5h8M818 590.5h8M818 598.5h8M818 606.5h8M818 613.5h8M818 621.5h8M818 629.5h8M818 637.5h8M818 645.5h8M818 652.5h11M818 660.5h8M818 668.5h8M818 676.5h8M818 684.5h8M818 691.5h8M818 699.5h8M818 707.5h8M818 715.5h8M818 723.5h8M818 730.5h26M818 738.5h8M818 746.5h8M818 754.5h8M818 762.5h8M818 770.5h8M818 777.5h8"/><path stroke="#14148c" stroke-width="1.2" fill="none" d="M822 4.5L839.5 13.5V769.5L822 779"/><text class="fl" transform="translate(849,106) rotate(90)" text-anchor="middle">143050400</text><text class="fl" transform="translate(849,262) rotate(90)" text-anchor="middle">143050200</text><text class="fl" transform="translate(849,418) rotate(90)" text-anchor="middle">143050000</text><text class="fl" transform="translate(849,574) rotate(90)" text-anchor="middle">143049800</text><text class="fl" transform="translate(849,730) rotate(90)" text-anchor="middle">143049600 Hz</text></g>
<rect x="860" y="1" width="80" height="781" fill="#545454"/><rect x="860" y="1" width="80" height="8" fill="#000"/><rect x="860" y="774" width="80" height="8" fill="#000"/><path fill="#000" d="M860 15h9v1h-9zM860 16h11v1h-11zM860 17h6v1h-6zM860 18h5v1h-5zM860 19h10v1h-10zM860 20h5v1h-5zM860 21h14v1h-14zM860 22h8v1h-8zM860 23h2v1h-2zM860 24h3v1h-3zM860 27h14v1h-14zM860 28h10v1h-10zM860 29h11v1h-11zM860 30h11v1h-11zM860 31h7v1h-7zM860 32h2v1h-2zM860 33h2v1h-2zM860 36h3v1h-3zM860 38h11v1h-11zM860 39h8v1h-8zM860 40h12v1h-12zM860 41h3v1h-3zM860 42h5v1h-5zM860 43h11v1h-11zM860 44h5v1h-5zM860 45h11v1h-11zM860 48h13v1h-13zM860 49h8v1h-8zM860 50h13v1h-13zM860 51h1v1h-1zM860 54h1v1h-1zM860 55h5v1h-5zM860 56h11v1h-11zM860 57h8v1h-8zM860 58h16v1h-16zM860 59h7v1h-7zM860 60h2v1h-2zM860 61h7v1h-7zM860 62h7v1h-7zM860 63h11v1h-11zM860 64h8v1h-8zM860 65h4v1h-4zM860 66h10v1h-10zM860 67h3v1h-3zM860 68h3v1h-3zM860 69h2v1h-2zM860 71h1v1h-1zM860 72h4v1h-4zM860 73h6v1h-6zM860 74h4v1h-4zM860 75h10v1h-10zM860 76h8v1h-8zM860 77h4v1h-4zM860 78h5v1h-5zM860 79h6v1h-6zM860 80h9v1h-9zM860 81h5v1h-5zM860 82h2v1h-2zM860 84h5v1h-5zM860 85h13v1h-13zM860 86h6v1h-6zM860 87h12v1h-12zM860 88h5v1h-5zM860 89h10v1h-10zM860 90h3v1h-3zM860 93h6v1h-6zM860 94h5v1h-5zM860 95h5v1h-5zM860 96h13v1h-13zM860 97h2v1h-2zM860 99h1v1h-1zM860 101h3v1h-3zM860 102h2v1h-2zM860 103h2v1h-2zM860 104h4v1h-4zM860 105h9v1h-9zM860 106h3v1h-3zM860 107h2v1h-2zM860 108h5v1h-5zM860 109h9v1h-9zM860 110h9v1h-9zM860 112h5v1h-5zM860 113h3v1h-3zM860 114h10v1h-10zM860 115h8v1h-8zM860 116h6v1h-6zM860 117h7v1h-7zM860 118h4v1h-4zM860 119h2v1h-2zM860 120h12v1h-12zM860 121h4v1h-4zM860 124h8v1h-8zM860 125h12v1h-12zM860 126h4v1h-4zM860 127h8v1h-8zM860 129h1v1h-1zM860 131h3v1h-3zM860 133h9v1h-9zM860 134h9v1h-9zM860 135h8v1h-8zM860 136h3v1h-3zM860 137h3v1h-3zM860 138h5v1h-5zM860 139h2v1h-2zM860 140h4v1h-4zM860 141h3v1h-3zM860 142h9v1h-9zM860 143h13v1h-13zM860 144h7v1h-7zM860 145h3v1h-3zM860 146h1v1h-1zM860 148h1v1h-1zM860 149h5v1h-5zM860 150h6v1h-6zM860 151h5v1h-5zM860 152h11v1h-11zM860 153h6v1h-6zM860 154h7v1h-7zM860 155h6v1h-6zM860 157h7v1h-7zM860 158h6v1h-6zM860 159h5v1h-5zM860 160h13v1h-13zM860 161h10v1h-10zM860 162h8v1h-8zM860 163h14v1h-14zM860 164h7v1h-7zM860 165h7v1h-7zM860 170h5v1h-5zM860 171h2v1h-2zM860 172h4v1h-4zM860 173h6v1h-6zM860 175h8v1h-8zM860 176h3v1h-3zM860 177h6v1h-6zM860 178h6v1h-6zM860 179h5v1h-5zM860 180h4v1h-4zM860 181h8v1h-8zM860 184h6v1h-6zM860 185h6v1h-6zM860 186h2v1h-2zM860 187h6v1h-6zM860 188h5v1h-5zM860 189h1v1h-1zM860 192h10v1h-10zM860 193h7v1h-7zM860 194h7v1h-7zM860 195h6v1h-6zM860 196h4v1h-4zM860 197h8v1h-8zM860 200h1v1h-1zM860 202h1v1h-1zM860 203h4v1h-4zM860 204h11v1h-11zM860 205h11v1h-11zM860 206h8v1h-8zM860 209h3v1h-3zM860 210h3v1h-3zM860 212h7v1h-7zM860 213h11v1h-11zM860 214h6v1h-6zM860 215h6v1h-6zM860 216h15v1h-15zM860 218h4v1h-4zM860 219h2v1h-2zM860 220h5v1h-5zM860 221h11v1h-11zM860 224h5v1h-5zM860 225h8v1h-8zM860 226h11v1h-11zM860 227h8v1h-8zM860 228h9v1h-9zM860 229h2v1h-2zM860 230h6v1h-6zM860 231h5v1h-5zM860 233h1v1h-1zM860 234h7v1h-7zM860 235h13v1h-13zM860 236h5v1h-5zM860 237h8v1h-8zM860 238h4v1h-4zM860 241h3v1h-3zM860 243h7v1h-7zM860 244h7v1h-7zM860 245h8v1h-8zM860 246h5v1h-5zM860 247h3v1h-3zM860 248h2v1h-2zM860 250h2v1h-2zM860 251h2v1h-2zM860 252h2v1h-2zM860 253h3v1h-3zM860 254h8v1h-8zM860 255h11v1h-11zM860 256h9v1h-9zM860 257h1v1h-1zM860 258h2v1h-2zM860 259h1v1h-1zM860 260h2v1h-2zM860 261h8v1h-8zM860 262h7v1h-7zM860 263h2v1h-2zM860 264h8v1h-8zM860 265h5v1h-5zM860 266h10v1h-10zM860 268h2v1h-2zM860 269h2v1h-2zM860 270h3v1h-3zM860 271h1v1h-1zM860 272h2v1h-2zM860 273h8v1h-8zM860 274h10v1h-10zM860 275h9v1h-9zM860 276h12v1h-12zM860 277h10v1h-10zM860 278h8v1h-8zM860 279h11v1h-11zM860 280h10v1h-10zM860 281h3v1h-3zM860 282h13v1h-13zM860 283h2v1h-2zM860 284h12v1h-12zM860 285h12v1h-12zM860 286h8v1h-8zM860 287h13v1h-13zM860 288h10v1h-10zM860 289h4v1h-4zM860 290h12v1h-12zM860 291h14v1h-14zM860 292h12v1h-12zM860 293h6v1h-6zM860 294h9v1h-9zM860 295h6v1h-6zM860 297h1v1h-1zM860 298h1v1h-1zM860 299h12v1h-12zM860 300h9v1h-9zM860 301h7v1h-7zM860 302h6v1h-6zM860 303h9v1h-9zM860 304h5v1h-5zM860 305h11v1h-11zM860 308h8v1h-8zM860 309h12v1h-12zM860 310h8v1h-8zM860 311h4v1h-4zM860 312h2v1h-2zM860 317h6v1h-6zM860 318h4v1h-4zM860 319h2v1h-2zM860 320h6v1h-6zM860 321h10v1h-10zM860 322h1v1h-1zM860 324h1v1h-1zM860 326h12v1h-12zM860 327h10v1h-10zM860 328h5v1h-5zM860 329h12v1h-12zM860 330h7v1h-7zM860 331h8v1h-8zM860 332h13v1h-13zM860 333h5v1h-5zM860 334h9v1h-9zM860 335h6v1h-6zM860 336h3v1h-3zM860 337h2v1h-2zM860 338h2v1h-2zM860 339h9v1h-9zM860 340h4v1h-4zM860 341h4v1h-4zM860 342h5v1h-5zM860 346h8v1h-8zM860 347h3v1h-3zM860 348h5v1h-5zM860 349h8v1h-8zM860 350h8v1h-8zM860 351h11v1h-11zM860 352h9v1h-9zM860 353h1v1h-1zM860 354h1v1h-1zM860 358h11v1h-11zM860 359h10v1h-10zM860 360h9v1h-9zM860 363h3v1h-3zM860 364h8v1h-8zM860 365h7v1h-7zM860 366h11v1h-11zM860 367h4v1h-4zM860 368h8v1h-8zM860 369h8v1h-8zM860 370h14v1h-14zM860 371h5v1h-5zM860 372h6v1h-6zM860 373h12v1h-12zM860 376h7v1h-7zM860 377h12v1h-12zM860 378h9v1h-9zM860 379h12v1h-12zM860 380h7v1h-7zM860 381h14v1h-14zM860 382h11v1h-11zM860 383h8v1h-8zM860 384h5v1h-5zM860 385h13v1h-13zM860 386h5v1h-5zM860 387h8v1h-8zM860 390h1v1h-1zM860 391h7v1h-7zM860 392h10v1h-10zM860 393h8v1h-8zM860 394h4v1h-4zM860 395h8v1h-8zM860 396h10v1h-10zM860 397h16v1h-16zM860 398h8v1h-8zM860 399h12v1h-12zM860 400h9v1h-9zM860 403h1v1h-1zM860 404h1v1h-1zM860 406h12v1h-12zM860 407h5v1h-5zM860 408h2v1h-2zM860 409h2v1h-2zM860 410h9v1h-9zM860 411h8v1h-8zM860 412h3v1h-3zM860 413h7v1h-7zM860 414h8v1h-8zM860 415h11v1h-11zM860 416h9v1h-9zM860 417h11v1h-11zM860 418h2v1h-2zM860 420h2v1h-2zM860 421h3v1h-3zM860 422h5v1h-5zM860 423h8v1h-8zM860 424h5v1h-5zM860 425h6v1h-6zM860 426h5v1h-5zM860 427h7v1h-7zM860 428h8v1h-8zM860 429h7v1h-7zM860 430h1v1h-1zM860 431h2v1h-2zM860 432h9v1h-9zM860 433h12v1h-12zM860 434h4v1h-4zM860 435h10v1h-10zM860 436h8v1h-8zM860 438h7v1h-7zM860 439h2v1h-2zM860 440h11v1h-11zM860 441h1v1h-1zM860 442h7v1h-7zM860 443h4v1h-4zM860 444h11v1h-11zM860 445h8v1h-8zM860 446h7v1h-7zM860 447h5v1h-5zM860 448h10v1h-10zM860 450h2v1h-2zM860 451h3v1h-3zM860 453h5v1h-5zM860 454h11v1h-11zM860 455h6v1h-6zM860 456h6v1h-6zM860 457h7v1h-7zM860 458h8v1h-8zM860 460h7v1h-7zM860 461h8v1h-8zM860 462h5v1h-5zM860 463h12v1h-12zM860 464h7v1h-7zM860 465h11v1h-11zM860 466h11v1h-11zM860 467h5v1h-5zM860 468h13v1h-13zM860 469h3v1h-3zM860 471h6v1h-6zM860 472h2v1h-2zM860 473h5v1h-5zM860 474h9v1h-9zM860 475h5v1h-5zM860 476h5v1h-5zM860 477h5v1h-5zM860 478h5v1h-5zM860 479h6v1h-6zM860 480h12v1h-12zM860 482h8v1h-8zM860 483h5v1h-5zM860 484h11v1h-11zM860 485h9v1h-9zM860 486h8v1h-8zM860 489h3v1h-3zM860 490h2v1h-2zM860 492h3v1h-3zM860 493h8v1h-8zM860 494h9v1h-9zM860 495h10v1h-10zM860 496h8v1h-8zM860 497h4v1h-4zM860 498h9v1h-9zM860 500h3v1h-3zM860 501h13v1h-13zM860 502h3v1h-3zM860 503h9v1h-9zM860 504h12v1h-12zM860 505h11v1h-11zM860 506h4v1h-4zM860 508h2v1h-2zM860 511h10v1h-10zM860 512h11v1h-11zM860 513h6v1h-6zM860 514h9v1h-9zM860 515h5v1h-5zM860 516h7v1h-7zM860 517h10v1h-10zM860 523h3v1h-3zM860 524h7v1h-7zM860 525h7v1h-7zM860 526h7v1h-7zM860 527h9v1h-9zM860 528h5v1h-5zM860 529h4v1h-4zM860 531h3v1h-3zM860 533h1v1h-1zM860 535h5v1h-5zM860 536h7v1h-7zM860 537h11v1h-11zM860 538h10v1h-10zM860 539h13v1h-13zM860 540h11v1h-11zM860 541h3v1h-3zM860 542h7v1h-7zM860 543h9v1h-9zM860 544h6v1h-6zM860 545h13v1h-13zM860 546h1v1h-1zM860 549h4v1h-4zM860 550h9v1h-9zM860 551h9v1h-9zM860 552h2v1h-2zM860 555h7v1h-7zM860 556h9v1h-9zM860 557h6v1h-6zM860 558h11v1h-11zM860 559h5v1h-5zM860 560h10v1h-10zM860 561h4v1h-4zM860 564h1v1h-1zM860 565h3v1h-3zM860 566h11v1h-11zM860 567h10v1h-10zM860 568h13v1h-13zM860 569h6v1h-6zM860 570h4v1h-4zM860 571h8v1h-8zM860 572h4v1h-4zM860 573h8v1h-8zM860 575h1v1h-1zM860 577h2v1h-2zM860 579h4v1h-4zM860 580h7v1h-7zM860 581h8v1h-8zM860 582h6v1h-6zM860 583h6v1h-6zM860 584h10v1h-10zM860 585h9v1h-9zM860 588h8v1h-8zM860 589h8v1h-8zM860 590h10v1h-10zM860 591h10v1h-10zM860 592h12v1h-12zM860 594h3v1h-3zM860 595h6v1h-6zM860 596h8v1h-8zM860 597h10v1h-10zM860 598h9v1h-9zM860 601h1v1h-1zM860 602h8v1h-8zM860 603h4v1h-4zM860 604h5v1h-5zM860 605h5v1h-5zM860 606h9v1h-9zM860 607h12v1h-12zM860 608h4v1h-4zM860 609h12v1h-12zM860 610h3v1h-3zM860 613h2v1h-2zM860 614h6v1h-6zM860 615h8v1h-8zM860 616h4v1h-4zM860 617h6v1h-6zM860 618h3v1h-3zM860 619h8v1h-8zM860 620h12v1h-12zM860 621h10v1h-10zM860 622h8v1h-8zM860 623h8v1h-8zM860 624h3v1h-3zM860 625h2v1h-2zM860 627h8v1h-8zM860 628h3v1h-3zM860 629h3v1h-3zM860 630h7v1h-7zM860 631h2v1h-2zM860 633h6v1h-6zM860 634h8v1h-8zM860 635h9v1h-9zM860 636h8v1h-8zM860 637h6v1h-6zM860 639h3v1h-3zM860 640h2v1h-2zM860 641h3v1h-3zM860 642h3v1h-3zM860 644h2v1h-2zM860 645h7v1h-7zM860 646h6v1h-6zM860 647h10v1h-10zM860 648h9v1h-9zM860 649h8v1h-8zM860 650h1v1h-1zM860 655h6v1h-6zM860 656h9v1h-9zM860 657h6v1h-6zM860 658h7v1h-7zM860 659h15v1h-15zM860 660h7v1h-7zM860 661h9v1h-9zM860 662h9v1h-9zM860 663h10v1h-10zM860 664h13v1h-13zM860 665h4v1h-4zM860 666h9v1h-9zM860 668h2v1h-2zM860 669h1v1h-1zM860 670h7v1h-7zM860 671h9v1h-9zM860 672h10v1h-10zM860 673h8v1h-8zM860 674h7v1h-7zM860 675h11v1h-11zM860 676h7v1h-7zM860 677h7v1h-7zM860 679h8v1h-8zM860 680h12v1h-12zM860 681h16v1h-16zM860 682h11v1h-11zM860 683h11v1h-11zM860 684h9v1h-9zM860 685h1v1h-1zM860 686h2v1h-2zM860 688h12v1h-12zM860 689h6v1h-6zM860 690h13v1h-13zM860 691h6v1h-6zM860 692h5v1h-5zM860 693h10v1h-10zM860 694h6v1h-6zM860 695h6v1h-6zM860 696h11v1h-11zM860 697h3v1h-3zM860 698h1v1h-1zM860 701h10v1h-10zM860 702h2v1h-2zM860 703h4v1h-4zM860 704h8v1h-8zM860 705h6v1h-6zM860 706h10v1h-10zM860 707h5v1h-5zM860 708h3v1h-3zM860 711h13v1h-13zM860 712h10v1h-10zM860 713h10v1h-10zM860 714h12v1h-12zM860 715h5v1h-5zM860 716h3v1h-3zM860 717h1v1h-1zM860 718h2v1h-2zM860 719h2v1h-2zM860 720h8v1h-8zM860 721h8v1h-8zM860 722h6v1h-6zM860 723h11v1h-11zM860 724h8v1h-8zM860 726h9v1h-9zM860 727h10v1h-10zM860 728h12v1h-12zM860 729h11v1h-11zM860 730h4v1h-4zM860 731h5v1h-5zM860 732h8v1h-8zM860 733h2v1h-2zM860 734h8v1h-8zM860 735h6v1h-6zM860 736h2v1h-2zM860 737h2v1h-2zM860 738h2v1h-2zM860 739h7v1h-7zM860 740h5v1h-5zM860 741h12v1h-12zM860 742h11v1h-11zM860 743h3v1h-3zM860 744h3v1h-3zM860 745h2v1h-2zM860 746h2v1h-2zM860 748h3v1h-3zM860 749h5v1h-5zM860 750h7v1h-7zM860 751h9v1h-9zM860 753h10v1h-10zM860 754h12v1h-12zM860 755h8v1h-8zM860 756h4v1h-4zM860 757h7v1h-7zM860 758h8v1h-8zM860 759h7v1h-7zM860 760h5v1h-5zM860 761h4v1h-4zM860 762h6v1h-6zM860 763h5v1h-5zM860 764h13v1h-13zM860 765h2v1h-2z"/><path fill="#0a0a40" d="M860 120h18v2h-18zM860 132h14v2h-14zM860 148h19v2h-19zM860 151h20v2h-20zM860 213h15v2h-15zM860 218h17v2h-17zM860 244h18v2h-18zM860 308h17v2h-17zM860 321h14v2h-14zM860 348h17v2h-17zM860 475h19v2h-19zM860 498h15v2h-15zM860 525h15v2h-15zM860 536h18v2h-18zM860 586h17v2h-17zM860 618h14v2h-14zM860 663h16v2h-16zM860 667h18v2h-18zM860 680h17v2h-17zM860 698h16v2h-16z"/><rect x="860" y="28" width="80" height="1" fill="#a0a0a0"/><rect x="860" y="106" width="80" height="1" fill="#a0a0a0"/><rect x="860" y="184" width="80" height="1" fill="#a0a0a0"/><rect x="860" y="262" width="80" height="1" fill="#a0a0a0"/><rect x="860" y="340" width="80" height="1" fill="#a0a0a0"/><rect x="860" y="418" width="80" height="1" fill="#a0a0a0"/><rect x="860" y="496" width="80" height="1" fill="#a0a0a0"/><rect x="860" y="574" width="80" height="1" fill="#a0a0a0"/><rect x="860" y="652" width="80" height="1" fill="#a0a0a0"/><rect x="860" y="730" width="80" height="1" fill="#a0a0a0"/>
<g shape-rendering="auto"><path stroke="#c83030" stroke-opacity="0.85" stroke-width="1.4" fill="none" d="M860.0 1.0 861.0 17.0 867.5 35.0 868.5 37.5 868.8 40.0 868.8 42.5 866.5 45.0 871.0 47.5 867.4 50.0 868.7 52.5 868.3 55.0 868.6 57.5 868.8 60.0 866.4 62.5 867.3 65.0 868.6 67.5 867.1 70.0 867.7 72.5 867.6 75.0 867.2 77.5 868.4 80.0 867.1 82.5 867.7 85.0 869.3 87.5 867.9 90.0 870.1 92.5 866.5 95.0 869.3 97.5 867.3 100.0 867.7 102.5 868.2 105.0 867.1 107.5 868.7 110.0 867.2 112.5 868.7 115.0 867.8 117.5 865.3 120.0 867.9 122.5 867.7 125.0 868.4 127.5 867.6 130.0 868.5 132.5 866.4 135.0 868.5 137.5 868.1 140.0 869.3 142.5 868.3 145.0 866.5 147.5 870.5 150.0 869.6 152.5 868.0 155.0 869.2 157.5 867.5 160.0 868.2 162.5 868.7 165.0 869.2 167.5 866.5 170.0 868.9 172.5 869.7 175.0 870.1 177.5 869.4 180.0 869.2 182.5 869.4 185.0 869.2 187.5 868.7 190.0 869.8 192.5 870.9 195.0 869.1 197.5 871.2 200.0 871.7 202.5 869.5 205.0 869.4 207.5 871.0 210.0 870.9 212.5 870.5 215.0 870.5 223.0 875.0 230.0 881.0 233.0 888.4 235.6 890.0 240.0 892.0 242.7 907.0 242.7 916.0 245.0 908.0 246.3 897.0 248.5 885.0 250.8 877.7 253.5 874.0 258.0 870.5 262.4 868.0 273.0 870.2 285.0 868.7 287.5 870.4 290.0 868.3 292.5 869.3 295.0 869.3 297.5 868.9 300.0 867.4 302.5 869.1 305.0 869.6 307.5 869.1 310.0 869.3 312.5 870.7 315.0 868.8 317.5 869.8 320.0 868.0 322.5 868.5 325.0 867.4 327.5 870.1 330.0 868.3 332.5 867.8 335.0 869.4 337.5 867.6 340.0 868.0 342.5 868.6 345.0 868.9 347.5 869.7 350.0 868.0 352.5 868.6 355.0 869.0 357.5 868.2 360.0 868.3 362.5 870.5 365.0 869.1 367.5 869.1 370.0 870.4 372.5 869.2 375.0 869.9 377.5 868.3 380.0 869.8 382.5 869.4 385.0 867.3 387.5 869.6 390.0 870.4 392.5 868.2 395.0 868.6 397.5 869.9 400.0 867.1 402.5 868.7 405.0 867.6 407.5 868.2 410.0 868.8 412.5 869.6 415.0 867.6 417.5 868.4 420.0 867.2 422.5 868.6 425.0 869.9 427.5 868.0 430.0 868.5 432.5 869.2 435.0 870.0 437.5 869.7 440.0 869.0 442.5 865.8 445.0 868.0 447.5 869.2 450.0 868.1 452.5 868.0 455.0 868.7 457.5 870.0 460.0 869.6 462.5 868.5 465.0 867.3 467.5 867.3 470.0 869.3 472.5 869.6 475.0 867.6 477.5 868.1 480.0 866.5 482.5 867.1 485.0 868.5 487.5 868.3 490.0 869.7 492.5 868.2 495.0 866.9 497.5 867.9 500.0 867.4 502.5 868.0 505.0 868.8 507.5 867.8 510.0 868.7 512.5 866.9 515.0 869.2 517.5 867.3 520.0 869.0 522.5 868.5 525.0 866.9 527.5 867.0 530.0 867.7 532.5 867.5 535.0 867.2 537.5 867.5 540.0 866.9 542.5 866.9 545.0 867.6 547.5 868.9 550.0 867.8 552.5 869.3 555.0 868.2 557.5 867.2 560.0 868.3 562.5 866.6 565.0 866.8 567.5 866.4 570.0 869.3 572.5 869.0 575.0 867.8 577.5 868.8 580.0 867.0 582.5 868.0 585.0 869.1 587.5 869.5 590.0 868.9 592.5 867.6 595.0 866.8 597.5 866.6 600.0 866.2 602.5 868.6 605.0 868.4 607.5 869.0 610.0 867.7 612.5 870.0 615.0 869.2 617.5 866.7 620.0 868.4 622.5 868.6 625.0 867.4 627.5 867.3 630.0 866.4 632.5 867.7 635.0 867.6 637.5 867.1 640.0 868.0 642.5 866.3 645.0 869.6 647.5 866.5 650.0 867.8 652.5 867.4 655.0 869.8 657.5 868.7 660.0 869.0 662.5 867.1 665.0 869.3 667.5 866.3 670.0 866.0 672.5 868.3 675.0 868.7 677.5 866.8 680.0 868.8 682.5 869.4 685.0 867.2 687.5 867.0 690.0 868.2 692.5 867.5 695.0 867.2 697.5 869.4 700.0 867.2 702.5 867.9 705.0 868.0 707.5 868.0 710.0 867.5 712.5 866.5 715.0 867.4 717.5 867.0 720.0 867.5 722.5 868.2 725.0 868.0 727.5 869.3 730.0 868.2 732.5 868.9 735.0 868.2 737.5 866.8 740.0 867.4 742.5 867.1 745.0 868.5 747.5 866.3 750.0 867.7 752.5 868.0 755.0 868.5 757.5 867.5 760.0 863.0 765.0 860.0 775.0"/><path stroke="#32e632" stroke-width="1.0" fill="none" d="M861.0 9.0 868.0 12.0 874.0 15.0 877.0 18.0 878.0 21.0 881.0 28.0 883.7 35.5 879.0 37.8 883.0 40.3 885.2 42.9 881.3 44.6 883.0 46.8 886.5 48.3 881.6 51.5 884.4 52.7 882.1 55.1 884.1 57.5 884.9 59.7 882.7 62.3 885.5 64.1 885.1 67.0 888.4 69.4 885.1 70.6 883.3 73.5 882.4 75.8 886.0 77.1 885.2 79.7 887.7 82.6 884.4 83.9 888.4 87.2 882.3 88.4 886.3 91.5 881.9 93.8 885.7 95.7 886.8 97.3 885.5 99.5 886.5 101.5 885.5 104.3 884.9 106.6 888.5 108.4 885.4 111.8 888.4 113.4 885.5 115.4 883.9 117.7 885.4 119.5 884.9 122.7 879.3 123.9 885.4 126.7 878.2 128.2 881.4 130.4 885.6 132.5 877.3 135.1 882.9 137.0 878.7 139.4 885.5 141.9 882.9 143.5 883.1 145.0 887.1 147.4 887.4 150.0 889.8 152.2 886.9 155.3 887.5 157.6 888.1 159.3 890.6 162.1 886.8 163.5 890.1 166.2 888.3 168.2 892.1 170.6 891.3 172.9 892.3 174.8 893.2 177.2 893.3 179.8 897.1 181.6 895.0 184.3 897.5 186.1 897.6 188.2 900.1 190.2 899.8 193.0 901.9 195.8 902.7 197.6 904.2 199.8 905.3 202.8 907.4 204.2 906.8 206.8 907.5 209.1 909.1 211.3 911.6 213.0 910.7 215.4 912.2 217.6 913.5 220.0 913.8 222.2 917.6 224.3 917.2 226.3 917.4 227.7 921.4 229.5 924.0 232.4 940.0 235.0 M940.0 250.0 920.6 253.5 927.0 256.0 901.0 266.0 899.0 272.0 887.5 280.0 880.9 290.6 883.9 292.3 883.8 294.2 883.9 296.6 885.4 297.4 880.1 300.1 885.8 302.2 879.1 303.7 884.5 306.5 881.3 308.7 881.1 311.2 882.0 312.6 882.9 314.5 882.3 316.5 881.4 319.1 879.0 321.1 882.0 323.2 885.0 325.7 879.4 328.3 883.8 330.2 879.9 332.3 882.8 334.1 877.6 336.7 881.3 338.4 883.9 341.0 881.2 342.8 880.5 345.3 884.2 347.4 879.4 349.9 884.4 351.4 880.0 354.7 883.5 356.9 877.6 358.1 884.3 361.3 880.5 363.0 883.7 364.9 881.9 366.7 877.5 369.1 881.3 371.0 884.7 373.2 883.1 376.4 880.0 378.5 884.0 380.1 879.9 383.0 882.1 384.4 881.0 387.3 878.9 388.9 883.5 391.8 882.6 393.5 882.0 396.0 882.4 397.9 881.9 400.0 880.7 401.7 882.3 404.9 882.1 406.8 883.6 408.6 879.0 411.5 884.6 413.0 881.0 415.3 882.9 418.3 879.8 420.2 886.2 422.2 877.8 424.7 883.0 426.0 881.7 429.2 879.0 431.1 882.1 434.0 885.5 434.9 881.8 437.7 880.8 440.3 881.0 441.6 881.0 445.0 884.0 446.9 879.7 449.2 884.8 450.8 880.3 453.2 883.5 455.9 880.3 457.2 881.8 459.5 883.3 462.7 880.0 464.3 886.2 466.2 879.7 469.0 882.0 470.9 882.7 473.1 883.7 475.7 881.0 477.9 883.5 480.2 878.6 481.5 883.7 484.8 880.7 487.3 883.2 489.3 878.7 491.2 883.5 493.5 877.3 495.2 882.2 498.1 879.4 500.4 883.3 502.3 880.0 504.7 882.7 506.1 884.9 509.4 880.0 510.6 881.8 513.8 885.7 516.1 879.0 517.7 883.4 519.9 882.7 522.6 879.3 523.9 882.2 526.8 883.9 528.6 876.6 530.7 882.1 533.5 881.6 535.2 882.6 537.9 881.5 540.3 884.2 542.7 877.3 544.9 883.3 546.7 882.9 548.9 880.7 551.8 884.3 552.7 880.0 555.2 882.5 558.4 879.7 560.4 884.0 562.3 880.8 564.9 883.2 566.8 885.1 569.2 880.0 571.4 885.3 573.4 878.5 575.1 885.8 578.2 881.9 579.5 881.6 582.0 883.1 584.8 881.4 587.1 880.7 588.6 884.3 590.5 881.7 593.3 882.6 596.2 883.0 597.3 884.9 600.2 879.7 602.0 882.3 604.3 883.0 606.6 878.7 608.8 883.3 611.5 879.7 613.3 883.3 615.8 882.5 617.4 880.9 620.3 882.6 622.7 881.2 624.3 885.7 626.7 876.6 629.2 882.2 631.6 882.5 633.8 880.9 635.4 881.4 637.8 882.7 640.3 881.1 642.7 882.4 644.3 879.1 647.2 882.5 648.5 882.8 650.5 885.7 652.8 880.3 656.2 883.0 658.3 878.1 660.5 886.1 661.7 879.7 664.6 883.7 667.3 881.1 669.1 882.3 670.7 883.9 673.1 878.6 675.7 888.5 678.0 880.3 680.3 885.5 682.1 880.4 683.8 884.2 686.6 879.1 689.2 885.7 690.8 882.1 693.8 881.7 696.1 879.1 697.8 883.2 700.5 879.8 702.5 882.7 705.1 883.6 706.3 882.8 709.4 880.8 711.0 885.2 713.8 879.6 715.4 883.0 718.2 884.9 719.6 880.8 721.9 882.9 725.1 881.1 726.6 881.8 729.3 883.8 731.1 882.8 734.0 878.7 735.9 884.0 738.5 879.0 740.1 884.7 741.9 882.3 744.8 879.6 746.3 885.5 748.3 881.6 751.7 883.8 753.8 881.4 756.2 882.2 757.5 882.0 760.0 880.5 767.0 861.0 780.0 M936.7 238 L938.5 240.5 L936.5 243 M934 782 L937 777 L940 775"/><circle cx="889.5" cy="729.5" r="3" fill="#000" stroke="#c01818" stroke-width="1"/></g>
<rect x="940" y="0" width="1" height="783" fill="#fff"/>
<rect x="3" y="3" width="311" height="45" fill="#fff"/><text class="hd" x="4" y="15">Screen Capture Time: 2026-04-21 01:06:34 UTC</text><text class="hd" x="4" y="29">143048050 Hz</text><text class="hd" x="4" y="43">Config = V8</text><rect x="5" y="53" width="99" height="39" fill="#fff"/><rect x="5" y="53" width="99" height="15" fill="url(#cb)"/><rect x="5" y="68" width="99" height="1" fill="#000"/><path stroke="#000" stroke-width="1" d="M4.5 68v11M8.5 68v5M13.5 68v5M17.5 68v5M22.5 68v5M26.5 68v8M30.5 68v5M35.5 68v5M39.5 68v5M44.5 68v5M48.5 68v11M52.5 68v5M57.5 68v5M61.5 68v5M65.5 68v5M70.5 68v8M74.5 68v5M79.5 68v5M83.5 68v5M87.5 68v5M92.5 68v11M96.5 68v5M101.5 68v5"/><text class="cb" x="4.5" y="89.5">-80 dB</text><text class="cb" x="40" y="89.5">-60</text><text class="cb" x="84" y="89.5">-40</text>
</svg>
</body></html>
